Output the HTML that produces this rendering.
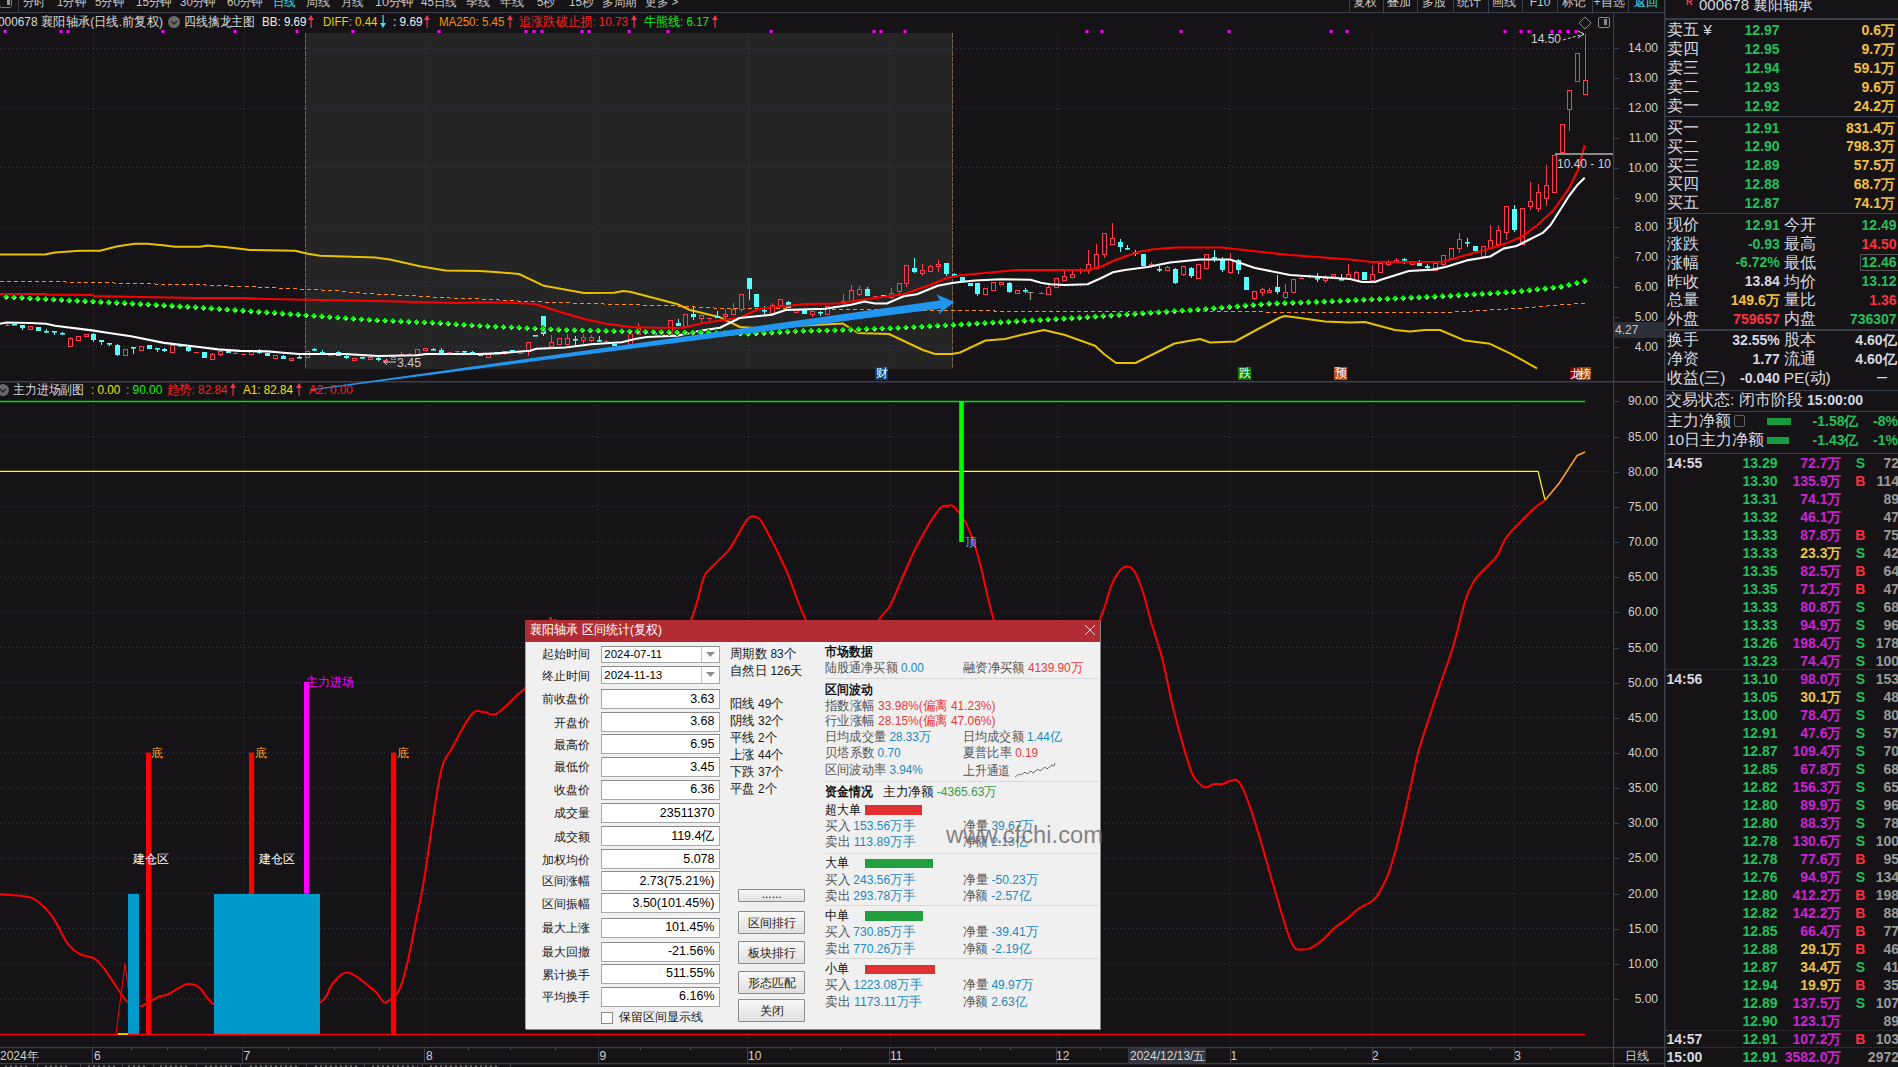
<!DOCTYPE html><html><head><meta charset="utf-8"><style>
html,body{margin:0;padding:0;background:#151316;width:1898px;height:1067px;overflow:hidden;}
body{position:relative;font-family:"Liberation Sans",sans-serif;}
.t{position:absolute;white-space:nowrap;line-height:1;}
svg{position:absolute;left:0;top:0;}
</style></head><body>
<svg width="1898" height="1067" viewBox="0 0 1898 1067">
<rect x="305" y="33" width="648" height="336" fill="#252526"/>
<line x1="305.5" y1="33" x2="305.5" y2="369" stroke="#7f5f3e" stroke-width="1" stroke-dasharray="5,1"/>
<line x1="952.5" y1="33" x2="952.5" y2="369" stroke="#7f5f3e" stroke-width="1" stroke-dasharray="5,1"/>
<line x1="93.5" y1="33" x2="93.5" y2="369" stroke="#3a3d4a" stroke-width="1" stroke-dasharray="1,3"/>
<line x1="93.5" y1="397" x2="93.5" y2="1047" stroke="#3a3d4a" stroke-width="1" stroke-dasharray="1,3"/>
<line x1="243.5" y1="33" x2="243.5" y2="369" stroke="#3a3d4a" stroke-width="1" stroke-dasharray="1,3"/>
<line x1="243.5" y1="397" x2="243.5" y2="1047" stroke="#3a3d4a" stroke-width="1" stroke-dasharray="1,3"/>
<line x1="425.5" y1="33" x2="425.5" y2="369" stroke="#3a3d4a" stroke-width="1" stroke-dasharray="1,3"/>
<line x1="425.5" y1="397" x2="425.5" y2="1047" stroke="#3a3d4a" stroke-width="1" stroke-dasharray="1,3"/>
<line x1="598.5" y1="33" x2="598.5" y2="369" stroke="#3a3d4a" stroke-width="1" stroke-dasharray="1,3"/>
<line x1="598.5" y1="397" x2="598.5" y2="1047" stroke="#3a3d4a" stroke-width="1" stroke-dasharray="1,3"/>
<line x1="748.5" y1="33" x2="748.5" y2="369" stroke="#3a3d4a" stroke-width="1" stroke-dasharray="1,3"/>
<line x1="748.5" y1="397" x2="748.5" y2="1047" stroke="#3a3d4a" stroke-width="1" stroke-dasharray="1,3"/>
<line x1="890.5" y1="33" x2="890.5" y2="369" stroke="#3a3d4a" stroke-width="1" stroke-dasharray="1,3"/>
<line x1="890.5" y1="397" x2="890.5" y2="1047" stroke="#3a3d4a" stroke-width="1" stroke-dasharray="1,3"/>
<line x1="1057.5" y1="33" x2="1057.5" y2="369" stroke="#3a3d4a" stroke-width="1" stroke-dasharray="1,3"/>
<line x1="1057.5" y1="397" x2="1057.5" y2="1047" stroke="#3a3d4a" stroke-width="1" stroke-dasharray="1,3"/>
<line x1="1230.5" y1="33" x2="1230.5" y2="369" stroke="#3a3d4a" stroke-width="1" stroke-dasharray="1,3"/>
<line x1="1230.5" y1="397" x2="1230.5" y2="1047" stroke="#3a3d4a" stroke-width="1" stroke-dasharray="1,3"/>
<line x1="1372.5" y1="33" x2="1372.5" y2="369" stroke="#3a3d4a" stroke-width="1" stroke-dasharray="1,3"/>
<line x1="1372.5" y1="397" x2="1372.5" y2="1047" stroke="#3a3d4a" stroke-width="1" stroke-dasharray="1,3"/>
<line x1="1514.5" y1="33" x2="1514.5" y2="369" stroke="#3a3d4a" stroke-width="1" stroke-dasharray="1,3"/>
<line x1="1514.5" y1="397" x2="1514.5" y2="1047" stroke="#3a3d4a" stroke-width="1" stroke-dasharray="1,3"/>
<line x1="0" y1="48.5" x2="1612" y2="48.5" stroke="#3a3d4a" stroke-width="1" stroke-dasharray="1,3"/>
<line x1="0" y1="108.5" x2="1612" y2="108.5" stroke="#3a3d4a" stroke-width="1" stroke-dasharray="1,3"/>
<line x1="0" y1="167.5" x2="1612" y2="167.5" stroke="#3a3d4a" stroke-width="1" stroke-dasharray="1,3"/>
<line x1="0" y1="227.5" x2="1612" y2="227.5" stroke="#3a3d4a" stroke-width="1" stroke-dasharray="1,3"/>
<line x1="0" y1="286.5" x2="1612" y2="286.5" stroke="#3a3d4a" stroke-width="1" stroke-dasharray="1,3"/>
<line x1="0" y1="346.5" x2="1612" y2="346.5" stroke="#3a3d4a" stroke-width="1" stroke-dasharray="1,3"/>
<line x1="0" y1="436.5" x2="1612" y2="436.5" stroke="#3a3d4a" stroke-width="1" stroke-dasharray="1,3"/>
<line x1="0" y1="471.7" x2="1612" y2="471.7" stroke="#3a3d4a" stroke-width="1" stroke-dasharray="1,3"/>
<line x1="0" y1="506.8" x2="1612" y2="506.8" stroke="#3a3d4a" stroke-width="1" stroke-dasharray="1,3"/>
<line x1="0" y1="542.0" x2="1612" y2="542.0" stroke="#3a3d4a" stroke-width="1" stroke-dasharray="1,3"/>
<line x1="0" y1="577.1" x2="1612" y2="577.1" stroke="#3a3d4a" stroke-width="1" stroke-dasharray="1,3"/>
<line x1="0" y1="612.3" x2="1612" y2="612.3" stroke="#3a3d4a" stroke-width="1" stroke-dasharray="1,3"/>
<line x1="0" y1="647.5" x2="1612" y2="647.5" stroke="#3a3d4a" stroke-width="1" stroke-dasharray="1,3"/>
<line x1="0" y1="682.6" x2="1612" y2="682.6" stroke="#3a3d4a" stroke-width="1" stroke-dasharray="1,3"/>
<line x1="0" y1="717.8" x2="1612" y2="717.8" stroke="#3a3d4a" stroke-width="1" stroke-dasharray="1,3"/>
<line x1="0" y1="752.9" x2="1612" y2="752.9" stroke="#3a3d4a" stroke-width="1" stroke-dasharray="1,3"/>
<line x1="0" y1="788.0" x2="1612" y2="788.0" stroke="#3a3d4a" stroke-width="1" stroke-dasharray="1,3"/>
<line x1="0" y1="823.2" x2="1612" y2="823.2" stroke="#3a3d4a" stroke-width="1" stroke-dasharray="1,3"/>
<line x1="0" y1="858.3" x2="1612" y2="858.3" stroke="#3a3d4a" stroke-width="1" stroke-dasharray="1,3"/>
<line x1="0" y1="893.5" x2="1612" y2="893.5" stroke="#3a3d4a" stroke-width="1" stroke-dasharray="1,3"/>
<line x1="0" y1="928.6" x2="1612" y2="928.6" stroke="#3a3d4a" stroke-width="1" stroke-dasharray="1,3"/>
<line x1="0" y1="963.8" x2="1612" y2="963.8" stroke="#3a3d4a" stroke-width="1" stroke-dasharray="1,3"/>
<line x1="0" y1="999.0" x2="1612" y2="999.0" stroke="#3a3d4a" stroke-width="1" stroke-dasharray="1,3"/>
<rect x="0" y="12" width="1664" height="1" fill="#3a3f4c"/>
<rect x="0" y="381" width="1664" height="1.5" fill="#3a3f4c"/>
<rect x="0" y="1047" width="1664" height="1.2" fill="#3a3f4c"/>
<rect x="0" y="1063" width="1664" height="1.2" fill="#3a3f4c"/>
<rect x="1613" y="13" width="1.2" height="1054" fill="#3a3f4c"/>
<rect x="1664" y="0" width="1.5" height="1067" fill="#3a3f4c"/>
<rect x="3.5" y="30" width="3" height="3" fill="#ff00ff"/>
<rect x="59.5" y="30" width="3" height="3" fill="#ff00ff"/>
<rect x="66.5" y="30" width="3" height="3" fill="#ff00ff"/>
<rect x="161.5" y="30" width="3" height="3" fill="#ff00ff"/>
<rect x="233.5" y="30" width="3" height="3" fill="#ff00ff"/>
<rect x="295.5" y="30" width="3" height="3" fill="#ff00ff"/>
<rect x="351.5" y="30" width="3" height="3" fill="#ff00ff"/>
<rect x="437.5" y="30" width="3" height="3" fill="#ff00ff"/>
<rect x="524.5" y="30" width="3" height="3" fill="#ff00ff"/>
<rect x="532.5" y="30" width="3" height="3" fill="#ff00ff"/>
<rect x="540.5" y="30" width="3" height="3" fill="#ff00ff"/>
<rect x="580.5" y="30" width="3" height="3" fill="#ff00ff"/>
<rect x="587.5" y="30" width="3" height="3" fill="#ff00ff"/>
<rect x="627.5" y="30" width="3" height="3" fill="#ff00ff"/>
<rect x="666.5" y="30" width="3" height="3" fill="#ff00ff"/>
<rect x="769.5" y="30" width="3" height="3" fill="#ff00ff"/>
<rect x="872.5" y="30" width="3" height="3" fill="#ff00ff"/>
<rect x="879.5" y="30" width="3" height="3" fill="#ff00ff"/>
<rect x="903.5" y="30" width="3" height="3" fill="#ff00ff"/>
<rect x="1085.5" y="30" width="3" height="3" fill="#ff00ff"/>
<rect x="1100.5" y="30" width="3" height="3" fill="#ff00ff"/>
<rect x="1179.5" y="30" width="3" height="3" fill="#ff00ff"/>
<rect x="1227.5" y="30" width="3" height="3" fill="#ff00ff"/>
<rect x="1329.5" y="30" width="3" height="3" fill="#ff00ff"/>
<rect x="1345.5" y="30" width="3" height="3" fill="#ff00ff"/>
<rect x="1503.5" y="30" width="3" height="3" fill="#ff00ff"/>
<rect x="1519.5" y="30" width="3" height="3" fill="#ff00ff"/>
<rect x="1527.5" y="30" width="3" height="3" fill="#ff00ff"/>
<rect x="1550.5" y="30" width="3" height="3" fill="#ff00ff"/>
<rect x="1558.5" y="30" width="3" height="3" fill="#ff00ff"/>
<rect x="1566.5" y="30" width="3" height="3" fill="#ff00ff"/>
<rect x="1574.5" y="30" width="3" height="3" fill="#ff00ff"/>
<polyline points="0.0,254.6 45.0,254.6 55.0,252.6 80.0,250.8 100.0,250.8 117.6,246.3 135.0,243.8 147.6,243.8 165.0,245.6 175.0,246.8 200.0,246.8 207.7,245.6 215.0,246.3 225.0,247.0 240.0,248.8 250.0,250.0 295.0,250.8 307.8,253.8 320.3,255.8 375.0,257.6 390.0,259.6 420.0,266.3 445.4,270.6 480.0,271.0 495.0,272.0 519.0,274.0 544.0,285.8 584.0,293.0 614.0,292.7 623.0,291.0 630.0,291.7 677.0,304.0 690.0,310.0 720.0,317.3 740.0,327.0 760.0,328.3 800.0,325.8 843.0,323.6 858.0,333.0 889.0,334.0 923.0,350.0 935.0,354.0 952.0,354.0 960.0,352.5 985.5,340.5 1005.0,339.0 1023.0,334.5 1044.0,330.0 1065.0,335.0 1095.0,345.7 1104.0,354.0 1116.0,363.0 1135.5,363.0 1174.5,343.5 1200.0,339.0 1210.0,342.5 1235.0,341.5 1260.0,328.0 1280.0,317.5 1285.0,316.0 1300.0,318.0 1325.0,321.5 1350.0,322.5 1365.0,322.0 1395.0,330.0 1410.0,331.5 1425.0,330.0 1440.0,330.0 1465.0,340.6 1490.0,343.8 1510.0,353.3 1537.0,368.3" fill="none" stroke="#e6c200" stroke-width="2" stroke-linejoin="round"/>
<polyline points="0.0,281.6 65.6,281.6 67.0,282.5 112.8,282.5 115.5,283.5 194.0,284.5 240.0,286.4 263.6,287.3 287.0,288.4 334.5,290.6 366.0,293.6 412.0,295.6 437.0,297.6 480.0,299.0 515.4,300.9 585.0,303.5 676.9,306.0 713.6,308.0 720.0,308.5 960.0,310.3 1014.0,311.4 1200.0,311.5 1315.0,312.4 1440.0,312.8 1516.0,308.5 1585.0,303.0" fill="none" stroke="#ff8c1a" stroke-width="1" stroke-dasharray="4,3" shape-rendering="crispEdges"/>
<rect x="7" y="324" width="1" height="2" fill="#ff3a50"/>
<rect x="5" y="325" width="5" height="1" fill="#ff3a50"/>
<rect x="14" y="324" width="1" height="1" fill="#54ffff"/>
<rect x="12" y="324" width="5" height="1.6" fill="#54ffff"/>
<rect x="22" y="325" width="1" height="5" fill="#54ffff"/>
<rect x="20" y="325" width="5" height="3" fill="#54ffff"/>
<rect x="30" y="326" width="1" height="3" fill="#ff3a50"/>
<rect x="28.5" y="326.5" width="4" height="3" fill="#151316" stroke="#ff3a50" stroke-width="1"/>
<rect x="38" y="327" width="1" height="4" fill="#54ffff"/>
<rect x="36" y="327" width="5" height="4" fill="#54ffff"/>
<rect x="46" y="329" width="1" height="4" fill="#54ffff"/>
<rect x="44" y="331" width="5" height="1.6" fill="#54ffff"/>
<rect x="54" y="331" width="1" height="4" fill="#54ffff"/>
<rect x="52" y="331" width="5" height="1.6" fill="#54ffff"/>
<rect x="62" y="332" width="1" height="3" fill="#54ffff"/>
<rect x="60" y="333" width="5" height="1.6" fill="#54ffff"/>
<rect x="70" y="337" width="1" height="9" fill="#ff3a50"/>
<rect x="68.5" y="338.5" width="4" height="8" fill="#151316" stroke="#ff3a50" stroke-width="1"/>
<rect x="78" y="336" width="1" height="5" fill="#ff3a50"/>
<rect x="76.5" y="336.5" width="4" height="4" fill="#151316" stroke="#ff3a50" stroke-width="1"/>
<rect x="86" y="334" width="1" height="3" fill="#ff3a50"/>
<rect x="84.5" y="334.5" width="4" height="2" fill="#151316" stroke="#ff3a50" stroke-width="1"/>
<rect x="93" y="333" width="1" height="9" fill="#54ffff"/>
<rect x="91" y="334" width="5" height="6" fill="#54ffff"/>
<rect x="101" y="340" width="1" height="5" fill="#54ffff"/>
<rect x="99" y="340" width="5" height="2" fill="#54ffff"/>
<rect x="109" y="343" width="1" height="3" fill="#54ffff"/>
<rect x="107" y="343" width="5" height="1.6" fill="#54ffff"/>
<rect x="117" y="344" width="1" height="12" fill="#54ffff"/>
<rect x="115" y="345" width="5" height="10" fill="#54ffff"/>
<rect x="125" y="349" width="1" height="6" fill="#ff3a50"/>
<rect x="123.5" y="349.5" width="4" height="6" fill="#151316" stroke="#ff3a50" stroke-width="1"/>
<rect x="133" y="347" width="1" height="7" fill="#54ffff"/>
<rect x="131" y="347" width="5" height="1.6" fill="#54ffff"/>
<rect x="141" y="346" width="1" height="4" fill="#ff3a50"/>
<rect x="139.5" y="346.5" width="4" height="4" fill="#151316" stroke="#ff3a50" stroke-width="1"/>
<rect x="149" y="345" width="1" height="4" fill="#54ffff"/>
<rect x="147" y="345" width="5" height="4" fill="#54ffff"/>
<rect x="157" y="348" width="1" height="4" fill="#54ffff"/>
<rect x="155" y="348" width="5" height="1.6" fill="#54ffff"/>
<rect x="164" y="348" width="1" height="4" fill="#54ffff"/>
<rect x="162" y="349" width="5" height="2" fill="#54ffff"/>
<rect x="172" y="345" width="1" height="7" fill="#ff3a50"/>
<rect x="170.5" y="345.5" width="4" height="7" fill="#151316" stroke="#ff3a50" stroke-width="1"/>
<rect x="180" y="345" width="1" height="1" fill="#54ffff"/>
<rect x="178" y="345" width="5" height="1.6" fill="#54ffff"/>
<rect x="188" y="347" width="1" height="5" fill="#54ffff"/>
<rect x="186" y="347" width="5" height="4" fill="#54ffff"/>
<rect x="196" y="352" width="1" height="1" fill="#ff3a50"/>
<rect x="194" y="352" width="5" height="1" fill="#ff3a50"/>
<rect x="204" y="352" width="1" height="6" fill="#54ffff"/>
<rect x="202" y="352" width="5" height="6" fill="#54ffff"/>
<rect x="212" y="353" width="1" height="6" fill="#ff3a50"/>
<rect x="210.5" y="354.5" width="4" height="5" fill="#151316" stroke="#ff3a50" stroke-width="1"/>
<rect x="220" y="351" width="1" height="5" fill="#ff3a50"/>
<rect x="218.5" y="351.5" width="4" height="3" fill="#151316" stroke="#ff3a50" stroke-width="1"/>
<rect x="228" y="351" width="1" height="2" fill="#54ffff"/>
<rect x="226" y="351" width="5" height="2" fill="#54ffff"/>
<rect x="235" y="352" width="1" height="2" fill="#ff3a50"/>
<rect x="233" y="353" width="5" height="1" fill="#ff3a50"/>
<rect x="243" y="354" width="1" height="1" fill="#ff3a50"/>
<rect x="241" y="354" width="5" height="1" fill="#ff3a50"/>
<rect x="251" y="350" width="1" height="4" fill="#ff3a50"/>
<rect x="249.5" y="350.5" width="4" height="4" fill="#151316" stroke="#ff3a50" stroke-width="1"/>
<rect x="259" y="349" width="1" height="5" fill="#54ffff"/>
<rect x="257" y="351" width="5" height="2" fill="#54ffff"/>
<rect x="267" y="353" width="1" height="3" fill="#54ffff"/>
<rect x="265" y="353" width="5" height="3" fill="#54ffff"/>
<rect x="275" y="355" width="1" height="4" fill="#ff3a50"/>
<rect x="273.5" y="355.5" width="4" height="3" fill="#151316" stroke="#ff3a50" stroke-width="1"/>
<rect x="283" y="355" width="1" height="4" fill="#54ffff"/>
<rect x="281" y="356" width="5" height="3" fill="#54ffff"/>
<rect x="291" y="358" width="1" height="3" fill="#ff3a50"/>
<rect x="289.5" y="358.5" width="4" height="2" fill="#151316" stroke="#ff3a50" stroke-width="1"/>
<rect x="299" y="354" width="1" height="4" fill="#54ffff"/>
<rect x="297" y="357" width="5" height="1.6" fill="#54ffff"/>
<rect x="307" y="351" width="1" height="6" fill="#ff3a50"/>
<rect x="305.5" y="351.5" width="4" height="6" fill="#252526" stroke="#ff3a50" stroke-width="1"/>
<rect x="314" y="348" width="1" height="3" fill="#54ffff"/>
<rect x="312" y="349" width="5" height="1.6" fill="#54ffff"/>
<rect x="322" y="350" width="1" height="4" fill="#54ffff"/>
<rect x="320" y="352" width="5" height="2" fill="#54ffff"/>
<rect x="330" y="355" width="1" height="1" fill="#ff3a50"/>
<rect x="328" y="355" width="5" height="1" fill="#ff3a50"/>
<rect x="338" y="351" width="1" height="5" fill="#54ffff"/>
<rect x="336" y="352" width="5" height="4" fill="#54ffff"/>
<rect x="346" y="355" width="1" height="4" fill="#54ffff"/>
<rect x="344" y="356" width="5" height="2" fill="#54ffff"/>
<rect x="354" y="358" width="1" height="2" fill="#ff3a50"/>
<rect x="352.5" y="358.5" width="4" height="2" fill="#252526" stroke="#ff3a50" stroke-width="1"/>
<rect x="362" y="357" width="1" height="2" fill="#54ffff"/>
<rect x="360" y="357" width="5" height="1.6" fill="#54ffff"/>
<rect x="370" y="356" width="1" height="3" fill="#ff3a50"/>
<rect x="368.5" y="357.5" width="4" height="2" fill="#252526" stroke="#ff3a50" stroke-width="1"/>
<rect x="378" y="357" width="1" height="4" fill="#54ffff"/>
<rect x="376" y="358" width="5" height="2" fill="#54ffff"/>
<rect x="385" y="360" width="1" height="2" fill="#ff3a50"/>
<rect x="383.5" y="360.5" width="4" height="2" fill="#252526" stroke="#ff3a50" stroke-width="1"/>
<rect x="393" y="356" width="1" height="3" fill="#ff3a50"/>
<rect x="391.5" y="357.5" width="4" height="2" fill="#252526" stroke="#ff3a50" stroke-width="1"/>
<rect x="401" y="352" width="1" height="3" fill="#ff3a50"/>
<rect x="399" y="354" width="5" height="1" fill="#ff3a50"/>
<rect x="409" y="353" width="1" height="2" fill="#ff3a50"/>
<rect x="407" y="354" width="5" height="1" fill="#ff3a50"/>
<rect x="417" y="349" width="1" height="5" fill="#ff3a50"/>
<rect x="415.5" y="349.5" width="4" height="5" fill="#252526" stroke="#ff3a50" stroke-width="1"/>
<rect x="425" y="348" width="1" height="2" fill="#ff3a50"/>
<rect x="423.5" y="348.5" width="4" height="2" fill="#252526" stroke="#ff3a50" stroke-width="1"/>
<rect x="433" y="348" width="1" height="2" fill="#54ffff"/>
<rect x="431" y="349" width="5" height="1.6" fill="#54ffff"/>
<rect x="441" y="348" width="1" height="5" fill="#54ffff"/>
<rect x="439" y="350" width="5" height="3" fill="#54ffff"/>
<rect x="449" y="352" width="1" height="1" fill="#ff3a50"/>
<rect x="447" y="352" width="5" height="1" fill="#ff3a50"/>
<rect x="457" y="351" width="1" height="2" fill="#ff3a50"/>
<rect x="455" y="351" width="5" height="1" fill="#ff3a50"/>
<rect x="464" y="351" width="1" height="2" fill="#54ffff"/>
<rect x="462" y="351" width="5" height="1.6" fill="#54ffff"/>
<rect x="472" y="351" width="1" height="2" fill="#54ffff"/>
<rect x="470" y="352" width="5" height="1.6" fill="#54ffff"/>
<rect x="480" y="354" width="1" height="2" fill="#54ffff"/>
<rect x="478" y="354" width="5" height="2" fill="#54ffff"/>
<rect x="488" y="354" width="1" height="3" fill="#ff3a50"/>
<rect x="486.5" y="354.5" width="4" height="3" fill="#252526" stroke="#ff3a50" stroke-width="1"/>
<rect x="496" y="352" width="1" height="1" fill="#54ffff"/>
<rect x="494" y="352" width="5" height="1.6" fill="#54ffff"/>
<rect x="504" y="351" width="1" height="4" fill="#ff3a50"/>
<rect x="502.5" y="351.5" width="4" height="2" fill="#252526" stroke="#ff3a50" stroke-width="1"/>
<rect x="512" y="350" width="1" height="2" fill="#54ffff"/>
<rect x="510" y="350" width="5" height="2" fill="#54ffff"/>
<rect x="520" y="353" width="1" height="1" fill="#ff3a50"/>
<rect x="518" y="353" width="5" height="1" fill="#ff3a50"/>
<rect x="528" y="342" width="1" height="14" fill="#ff3a50"/>
<rect x="526.5" y="342.5" width="4" height="9" fill="#252526" stroke="#ff3a50" stroke-width="1"/>
<rect x="535" y="335" width="1" height="1" fill="#54ffff"/>
<rect x="533" y="335" width="5" height="1.6" fill="#54ffff"/>
<rect x="543" y="316" width="1" height="20" fill="#54ffff"/>
<rect x="541" y="316" width="5" height="18" fill="#54ffff"/>
<rect x="551" y="335" width="1" height="11" fill="#ff3a50"/>
<rect x="549.5" y="342.5" width="4" height="4" fill="#252526" stroke="#ff3a50" stroke-width="1"/>
<rect x="559" y="338" width="1" height="6" fill="#ff3a50"/>
<rect x="557.5" y="338.5" width="4" height="6" fill="#252526" stroke="#ff3a50" stroke-width="1"/>
<rect x="567" y="334" width="1" height="11" fill="#ff3a50"/>
<rect x="565.5" y="338.5" width="4" height="6" fill="#252526" stroke="#ff3a50" stroke-width="1"/>
<rect x="575" y="336" width="1" height="9" fill="#54ffff"/>
<rect x="573" y="339" width="5" height="1.6" fill="#54ffff"/>
<rect x="583" y="334" width="1" height="10" fill="#ff3a50"/>
<rect x="581.5" y="337.5" width="4" height="3" fill="#252526" stroke="#ff3a50" stroke-width="1"/>
<rect x="591" y="335" width="1" height="7" fill="#ff3a50"/>
<rect x="589.5" y="337.5" width="4" height="3" fill="#252526" stroke="#ff3a50" stroke-width="1"/>
<rect x="599" y="336" width="1" height="6" fill="#54ffff"/>
<rect x="597" y="340" width="5" height="1.6" fill="#54ffff"/>
<rect x="606" y="340" width="1" height="2" fill="#ff3a50"/>
<rect x="604" y="341" width="5" height="1" fill="#ff3a50"/>
<rect x="614" y="344" width="1" height="2" fill="#54ffff"/>
<rect x="612" y="344" width="5" height="2" fill="#54ffff"/>
<rect x="622" y="346" width="1" height="1" fill="#ff3a50"/>
<rect x="620" y="346" width="5" height="1" fill="#ff3a50"/>
<rect x="630" y="334" width="1" height="12" fill="#ff3a50"/>
<rect x="628.5" y="334.5" width="4" height="12" fill="#252526" stroke="#ff3a50" stroke-width="1"/>
<rect x="638" y="323" width="1" height="12" fill="#ff3a50"/>
<rect x="636.5" y="328.5" width="4" height="6" fill="#252526" stroke="#ff3a50" stroke-width="1"/>
<rect x="646" y="333" width="1" height="1" fill="#ff3a50"/>
<rect x="644" y="333" width="5" height="1" fill="#ff3a50"/>
<rect x="654" y="333" width="1" height="1" fill="#54ffff"/>
<rect x="652" y="333" width="5" height="1.6" fill="#54ffff"/>
<rect x="662" y="334" width="1" height="1" fill="#ff3a50"/>
<rect x="660" y="334" width="5" height="1" fill="#ff3a50"/>
<rect x="670" y="320" width="1" height="14" fill="#ff3a50"/>
<rect x="668.5" y="320.5" width="4" height="14" fill="#252526" stroke="#ff3a50" stroke-width="1"/>
<rect x="678" y="319" width="1" height="7" fill="#54ffff"/>
<rect x="676" y="323" width="5" height="3" fill="#54ffff"/>
<rect x="685" y="314" width="1" height="12" fill="#ff3a50"/>
<rect x="683.5" y="314.5" width="4" height="12" fill="#252526" stroke="#ff3a50" stroke-width="1"/>
<rect x="693" y="307" width="1" height="13" fill="#54ffff"/>
<rect x="691" y="314" width="5" height="3" fill="#54ffff"/>
<rect x="701" y="315" width="1" height="8" fill="#ff3a50"/>
<rect x="699.5" y="315.5" width="4" height="3" fill="#252526" stroke="#ff3a50" stroke-width="1"/>
<rect x="709" y="318" width="1" height="4" fill="#ff3a50"/>
<rect x="707" y="318" width="5" height="1" fill="#ff3a50"/>
<rect x="717" y="311" width="1" height="7" fill="#54ffff"/>
<rect x="715" y="316" width="5" height="2" fill="#54ffff"/>
<rect x="725" y="309" width="1" height="13" fill="#ff3a50"/>
<rect x="723.5" y="314.5" width="4" height="2" fill="#252526" stroke="#ff3a50" stroke-width="1"/>
<rect x="733" y="303" width="1" height="11" fill="#ff3a50"/>
<rect x="731.5" y="309.5" width="4" height="5" fill="#252526" stroke="#ff3a50" stroke-width="1"/>
<rect x="741" y="294" width="1" height="18" fill="#ff3a50"/>
<rect x="739.5" y="294.5" width="4" height="15" fill="#252526" stroke="#ff3a50" stroke-width="1"/>
<rect x="749" y="278" width="1" height="22" fill="#54ffff"/>
<rect x="747" y="278" width="5" height="11" fill="#54ffff"/>
<rect x="756" y="294" width="1" height="13" fill="#54ffff"/>
<rect x="754" y="294" width="5" height="13" fill="#54ffff"/>
<rect x="764" y="306" width="1" height="8" fill="#54ffff"/>
<rect x="762" y="310" width="5" height="1.6" fill="#54ffff"/>
<rect x="772" y="303" width="1" height="10" fill="#ff3a50"/>
<rect x="770.5" y="305.5" width="4" height="8" fill="#252526" stroke="#ff3a50" stroke-width="1"/>
<rect x="780" y="299" width="1" height="6" fill="#ff3a50"/>
<rect x="778.5" y="299.5" width="4" height="6" fill="#252526" stroke="#ff3a50" stroke-width="1"/>
<rect x="788" y="301" width="1" height="7" fill="#54ffff"/>
<rect x="786" y="302" width="5" height="6" fill="#54ffff"/>
<rect x="796" y="310" width="1" height="2" fill="#ff3a50"/>
<rect x="794.5" y="310.5" width="4" height="2" fill="#252526" stroke="#ff3a50" stroke-width="1"/>
<rect x="804" y="310" width="1" height="4" fill="#54ffff"/>
<rect x="802" y="310" width="5" height="4" fill="#54ffff"/>
<rect x="812" y="311" width="1" height="6" fill="#ff3a50"/>
<rect x="810.5" y="311.5" width="4" height="3" fill="#252526" stroke="#ff3a50" stroke-width="1"/>
<rect x="820" y="311" width="1" height="5" fill="#54ffff"/>
<rect x="818" y="312" width="5" height="1.6" fill="#54ffff"/>
<rect x="827" y="306" width="1" height="8" fill="#ff3a50"/>
<rect x="825.5" y="306.5" width="4" height="8" fill="#252526" stroke="#ff3a50" stroke-width="1"/>
<rect x="835" y="306" width="1" height="1" fill="#54ffff"/>
<rect x="833" y="306" width="5" height="1.6" fill="#54ffff"/>
<rect x="843" y="294" width="1" height="13" fill="#ff3a50"/>
<rect x="841.5" y="301.5" width="4" height="2" fill="#252526" stroke="#ff3a50" stroke-width="1"/>
<rect x="851" y="285" width="1" height="16" fill="#ff3a50"/>
<rect x="849.5" y="290.5" width="4" height="11" fill="#252526" stroke="#ff3a50" stroke-width="1"/>
<rect x="859" y="286" width="1" height="10" fill="#ff3a50"/>
<rect x="857.5" y="289.5" width="4" height="5" fill="#252526" stroke="#ff3a50" stroke-width="1"/>
<rect x="867" y="287" width="1" height="9" fill="#54ffff"/>
<rect x="865" y="289" width="5" height="7" fill="#54ffff"/>
<rect x="875" y="296" width="1" height="1" fill="#ff3a50"/>
<rect x="873" y="296" width="5" height="1" fill="#ff3a50"/>
<rect x="883" y="295" width="1" height="1" fill="#54ffff"/>
<rect x="881" y="295" width="5" height="1.6" fill="#54ffff"/>
<rect x="891" y="288" width="1" height="11" fill="#ff3a50"/>
<rect x="889.5" y="293.5" width="4" height="4" fill="#252526" stroke="#ff3a50" stroke-width="1"/>
<rect x="899" y="283" width="1" height="11" fill="#ff3a50"/>
<rect x="897.5" y="283.5" width="4" height="8" fill="#252526" stroke="#ff3a50" stroke-width="1"/>
<rect x="906" y="265" width="1" height="22" fill="#ff3a50"/>
<rect x="904.5" y="265.5" width="4" height="18" fill="#252526" stroke="#ff3a50" stroke-width="1"/>
<rect x="914" y="258" width="1" height="15" fill="#54ffff"/>
<rect x="912" y="268" width="5" height="4" fill="#54ffff"/>
<rect x="922" y="264" width="1" height="12" fill="#ff3a50"/>
<rect x="920.5" y="270.5" width="4" height="3" fill="#252526" stroke="#ff3a50" stroke-width="1"/>
<rect x="930" y="265" width="1" height="7" fill="#ff3a50"/>
<rect x="928.5" y="266.5" width="4" height="5" fill="#252526" stroke="#ff3a50" stroke-width="1"/>
<rect x="938" y="260" width="1" height="12" fill="#ff3a50"/>
<rect x="936.5" y="264.5" width="4" height="2" fill="#252526" stroke="#ff3a50" stroke-width="1"/>
<rect x="946" y="263" width="1" height="13" fill="#54ffff"/>
<rect x="944" y="263" width="5" height="11" fill="#54ffff"/>
<rect x="954" y="273" width="1" height="4" fill="#54ffff"/>
<rect x="952" y="274" width="5" height="2" fill="#54ffff"/>
<rect x="962" y="277" width="1" height="5" fill="#54ffff"/>
<rect x="960" y="277" width="5" height="5" fill="#54ffff"/>
<rect x="970" y="283" width="1" height="3" fill="#54ffff"/>
<rect x="968" y="283" width="5" height="3" fill="#54ffff"/>
<rect x="977" y="283" width="1" height="13" fill="#54ffff"/>
<rect x="975" y="283" width="5" height="11" fill="#54ffff"/>
<rect x="985" y="288" width="1" height="6" fill="#ff3a50"/>
<rect x="983.5" y="288.5" width="4" height="6" fill="#151316" stroke="#ff3a50" stroke-width="1"/>
<rect x="993" y="282" width="1" height="8" fill="#ff3a50"/>
<rect x="991.5" y="282.5" width="4" height="8" fill="#151316" stroke="#ff3a50" stroke-width="1"/>
<rect x="1001" y="282" width="1" height="3" fill="#ff3a50"/>
<rect x="999.5" y="282.5" width="4" height="2" fill="#151316" stroke="#ff3a50" stroke-width="1"/>
<rect x="1009" y="282" width="1" height="11" fill="#54ffff"/>
<rect x="1007" y="283" width="5" height="9" fill="#54ffff"/>
<rect x="1017" y="290" width="1" height="4" fill="#ff3a50"/>
<rect x="1015.5" y="290.5" width="4" height="3" fill="#151316" stroke="#ff3a50" stroke-width="1"/>
<rect x="1025" y="288" width="1" height="5" fill="#54ffff"/>
<rect x="1023" y="290" width="5" height="1.6" fill="#54ffff"/>
<rect x="1041" y="292" width="1" height="2" fill="#ff3a50"/>
<rect x="1039" y="293" width="5" height="1" fill="#ff3a50"/>
<rect x="1048" y="285" width="1" height="9" fill="#ff3a50"/>
<rect x="1046.5" y="287.5" width="4" height="7" fill="#151316" stroke="#ff3a50" stroke-width="1"/>
<rect x="1056" y="278" width="1" height="9" fill="#ff3a50"/>
<rect x="1054.5" y="278.5" width="4" height="9" fill="#151316" stroke="#ff3a50" stroke-width="1"/>
<rect x="1064" y="271" width="1" height="9" fill="#ff3a50"/>
<rect x="1062.5" y="276.5" width="4" height="4" fill="#151316" stroke="#ff3a50" stroke-width="1"/>
<rect x="1072" y="271" width="1" height="7" fill="#ff3a50"/>
<rect x="1070.5" y="274.5" width="4" height="3" fill="#151316" stroke="#ff3a50" stroke-width="1"/>
<rect x="1080" y="268" width="1" height="6" fill="#ff3a50"/>
<rect x="1078" y="270" width="5" height="1" fill="#ff3a50"/>
<rect x="1088" y="250" width="1" height="24" fill="#ff3a50"/>
<rect x="1086.5" y="264.5" width="4" height="6" fill="#151316" stroke="#ff3a50" stroke-width="1"/>
<rect x="1096" y="244" width="1" height="24" fill="#ff3a50"/>
<rect x="1094.5" y="254.5" width="4" height="14" fill="#151316" stroke="#ff3a50" stroke-width="1"/>
<rect x="1104" y="233" width="1" height="25" fill="#ff3a50"/>
<rect x="1102.5" y="233.5" width="4" height="21" fill="#151316" stroke="#ff3a50" stroke-width="1"/>
<rect x="1112" y="223" width="1" height="21" fill="#ff3a50"/>
<rect x="1110.5" y="238.5" width="4" height="6" fill="#151316" stroke="#ff3a50" stroke-width="1"/>
<rect x="1120" y="239" width="1" height="13" fill="#54ffff"/>
<rect x="1118" y="242" width="5" height="5" fill="#54ffff"/>
<rect x="1127" y="245" width="1" height="5" fill="#54ffff"/>
<rect x="1125" y="248" width="5" height="1.6" fill="#54ffff"/>
<rect x="1135" y="250" width="1" height="6" fill="#54ffff"/>
<rect x="1133" y="252" width="5" height="2" fill="#54ffff"/>
<rect x="1143" y="254" width="1" height="12" fill="#54ffff"/>
<rect x="1141" y="254" width="5" height="12" fill="#54ffff"/>
<rect x="1151" y="262" width="1" height="6" fill="#ff3a50"/>
<rect x="1149" y="264" width="5" height="1" fill="#ff3a50"/>
<rect x="1159" y="266" width="1" height="6" fill="#54ffff"/>
<rect x="1157" y="269" width="5" height="1.6" fill="#54ffff"/>
<rect x="1167" y="266" width="1" height="4" fill="#ff3a50"/>
<rect x="1165.5" y="267.5" width="4" height="3" fill="#151316" stroke="#ff3a50" stroke-width="1"/>
<rect x="1175" y="268" width="1" height="16" fill="#54ffff"/>
<rect x="1173" y="269" width="5" height="14" fill="#54ffff"/>
<rect x="1183" y="266" width="1" height="10" fill="#ff3a50"/>
<rect x="1181.5" y="266.5" width="4" height="8" fill="#151316" stroke="#ff3a50" stroke-width="1"/>
<rect x="1191" y="267" width="1" height="11" fill="#54ffff"/>
<rect x="1189" y="268" width="5" height="8" fill="#54ffff"/>
<rect x="1198" y="264" width="1" height="14" fill="#ff3a50"/>
<rect x="1196.5" y="264.5" width="4" height="14" fill="#151316" stroke="#ff3a50" stroke-width="1"/>
<rect x="1206" y="254" width="1" height="14" fill="#ff3a50"/>
<rect x="1204.5" y="254.5" width="4" height="14" fill="#151316" stroke="#ff3a50" stroke-width="1"/>
<rect x="1214" y="250" width="1" height="12" fill="#54ffff"/>
<rect x="1212" y="257" width="5" height="1.6" fill="#54ffff"/>
<rect x="1222" y="257" width="1" height="15" fill="#54ffff"/>
<rect x="1220" y="259" width="5" height="11" fill="#54ffff"/>
<rect x="1230" y="253" width="1" height="21" fill="#ff3a50"/>
<rect x="1228.5" y="259.5" width="4" height="13" fill="#151316" stroke="#ff3a50" stroke-width="1"/>
<rect x="1238" y="259" width="1" height="15" fill="#54ffff"/>
<rect x="1236" y="260" width="5" height="10" fill="#54ffff"/>
<rect x="1246" y="277" width="1" height="13" fill="#54ffff"/>
<rect x="1244" y="277" width="5" height="13" fill="#54ffff"/>
<rect x="1254" y="291" width="1" height="9" fill="#ff3a50"/>
<rect x="1252.5" y="291.5" width="4" height="7" fill="#151316" stroke="#ff3a50" stroke-width="1"/>
<rect x="1262" y="288" width="1" height="8" fill="#ff3a50"/>
<rect x="1260.5" y="289.5" width="4" height="3" fill="#151316" stroke="#ff3a50" stroke-width="1"/>
<rect x="1269" y="288" width="1" height="4" fill="#ff3a50"/>
<rect x="1267.5" y="290.5" width="4" height="2" fill="#151316" stroke="#ff3a50" stroke-width="1"/>
<rect x="1277" y="275" width="1" height="19" fill="#54ffff"/>
<rect x="1275" y="287" width="5" height="5" fill="#54ffff"/>
<rect x="1285" y="284" width="1" height="15" fill="#ff3a50"/>
<rect x="1283.5" y="292.5" width="4" height="5" fill="#151316" stroke="#ff3a50" stroke-width="1"/>
<rect x="1293" y="279" width="1" height="13" fill="#ff3a50"/>
<rect x="1291.5" y="279.5" width="4" height="13" fill="#151316" stroke="#ff3a50" stroke-width="1"/>
<rect x="1301" y="277" width="1" height="2" fill="#ff3a50"/>
<rect x="1299" y="278" width="5" height="1" fill="#ff3a50"/>
<rect x="1309" y="274" width="1" height="4" fill="#ff3a50"/>
<rect x="1307" y="276" width="5" height="1" fill="#ff3a50"/>
<rect x="1317" y="273" width="1" height="9" fill="#54ffff"/>
<rect x="1315" y="278" width="5" height="1.6" fill="#54ffff"/>
<rect x="1325" y="275" width="1" height="8" fill="#ff3a50"/>
<rect x="1323.5" y="278.5" width="4" height="2" fill="#151316" stroke="#ff3a50" stroke-width="1"/>
<rect x="1333" y="274" width="1" height="3" fill="#ff3a50"/>
<rect x="1331.5" y="274.5" width="4" height="2" fill="#151316" stroke="#ff3a50" stroke-width="1"/>
<rect x="1341" y="274" width="1" height="6" fill="#54ffff"/>
<rect x="1339" y="279" width="5" height="1.6" fill="#54ffff"/>
<rect x="1348" y="264" width="1" height="14" fill="#ff3a50"/>
<rect x="1346.5" y="274.5" width="4" height="4" fill="#151316" stroke="#ff3a50" stroke-width="1"/>
<rect x="1356" y="271" width="1" height="9" fill="#ff3a50"/>
<rect x="1354.5" y="272.5" width="4" height="8" fill="#151316" stroke="#ff3a50" stroke-width="1"/>
<rect x="1364" y="272" width="1" height="8" fill="#54ffff"/>
<rect x="1362" y="272" width="5" height="8" fill="#54ffff"/>
<rect x="1372" y="266" width="1" height="14" fill="#ff3a50"/>
<rect x="1370.5" y="274.5" width="4" height="6" fill="#151316" stroke="#ff3a50" stroke-width="1"/>
<rect x="1380" y="263" width="1" height="9" fill="#ff3a50"/>
<rect x="1378.5" y="263.5" width="4" height="9" fill="#151316" stroke="#ff3a50" stroke-width="1"/>
<rect x="1388" y="260" width="1" height="6" fill="#ff3a50"/>
<rect x="1386.5" y="262.5" width="4" height="2" fill="#151316" stroke="#ff3a50" stroke-width="1"/>
<rect x="1396" y="258" width="1" height="3" fill="#ff3a50"/>
<rect x="1394" y="260" width="5" height="1" fill="#ff3a50"/>
<rect x="1404" y="258" width="1" height="6" fill="#54ffff"/>
<rect x="1402" y="259" width="5" height="1.6" fill="#54ffff"/>
<rect x="1412" y="262" width="1" height="2" fill="#ff3a50"/>
<rect x="1410.5" y="262.5" width="4" height="2" fill="#151316" stroke="#ff3a50" stroke-width="1"/>
<rect x="1419" y="260" width="1" height="6" fill="#54ffff"/>
<rect x="1417" y="263" width="5" height="3" fill="#54ffff"/>
<rect x="1427" y="264" width="1" height="6" fill="#54ffff"/>
<rect x="1425" y="266" width="5" height="2" fill="#54ffff"/>
<rect x="1435" y="263" width="1" height="7" fill="#ff3a50"/>
<rect x="1433.5" y="263.5" width="4" height="7" fill="#151316" stroke="#ff3a50" stroke-width="1"/>
<rect x="1443" y="255" width="1" height="11" fill="#ff3a50"/>
<rect x="1441.5" y="255.5" width="4" height="9" fill="#151316" stroke="#ff3a50" stroke-width="1"/>
<rect x="1451" y="248" width="1" height="10" fill="#ff3a50"/>
<rect x="1449.5" y="248.5" width="4" height="10" fill="#151316" stroke="#ff3a50" stroke-width="1"/>
<rect x="1459" y="233" width="1" height="20" fill="#ff3a50"/>
<rect x="1457.5" y="239.5" width="4" height="9" fill="#151316" stroke="#ff3a50" stroke-width="1"/>
<rect x="1467" y="238" width="1" height="9" fill="#54ffff"/>
<rect x="1465" y="242" width="5" height="1.6" fill="#54ffff"/>
<rect x="1475" y="246" width="1" height="6" fill="#54ffff"/>
<rect x="1473" y="246" width="5" height="5" fill="#54ffff"/>
<rect x="1483" y="246" width="1" height="10" fill="#ff3a50"/>
<rect x="1481.5" y="246.5" width="4" height="10" fill="#151316" stroke="#ff3a50" stroke-width="1"/>
<rect x="1490" y="225" width="1" height="23" fill="#ff3a50"/>
<rect x="1488.5" y="240.5" width="4" height="8" fill="#151316" stroke="#ff3a50" stroke-width="1"/>
<rect x="1498" y="225" width="1" height="19" fill="#ff3a50"/>
<rect x="1496.5" y="230.5" width="4" height="14" fill="#151316" stroke="#ff3a50" stroke-width="1"/>
<rect x="1506" y="206" width="1" height="34" fill="#ff3a50"/>
<rect x="1504.5" y="206.5" width="4" height="26" fill="#151316" stroke="#ff3a50" stroke-width="1"/>
<rect x="1514" y="205" width="1" height="27" fill="#54ffff"/>
<rect x="1512" y="209" width="5" height="21" fill="#54ffff"/>
<rect x="1522" y="208" width="1" height="36" fill="#ff3a50"/>
<rect x="1520.5" y="208.5" width="4" height="36" fill="#151316" stroke="#ff3a50" stroke-width="1"/>
<rect x="1530" y="182" width="1" height="28" fill="#ff3a50"/>
<rect x="1528.5" y="201.5" width="4" height="5" fill="#151316" stroke="#ff3a50" stroke-width="1"/>
<rect x="1538" y="184" width="1" height="28" fill="#ff3a50"/>
<rect x="1536.5" y="192.5" width="4" height="16" fill="#151316" stroke="#ff3a50" stroke-width="1"/>
<rect x="1546" y="165" width="1" height="41" fill="#ff3a50"/>
<rect x="1544.5" y="185.5" width="4" height="13" fill="#151316" stroke="#ff3a50" stroke-width="1"/>
<rect x="1554" y="155" width="1" height="38" fill="#ff3a50"/>
<rect x="1552.5" y="155.5" width="4" height="37" fill="#151316" stroke="#ff3a50" stroke-width="1"/>
<rect x="1562" y="124" width="1" height="28" fill="#ff3a50"/>
<rect x="1560.5" y="124.5" width="4" height="28" fill="#151316" stroke="#ff3a50" stroke-width="1"/>
<rect x="1569" y="90" width="1" height="41" fill="#ff3a50"/>
<rect x="1567.5" y="90.5" width="4" height="19" fill="#151316" stroke="#ff3a50" stroke-width="1"/>
<rect x="1577" y="53" width="1" height="29" fill="#ff3a50"/>
<rect x="1575.5" y="53.5" width="4" height="28" fill="#151316" stroke="#ff3a50" stroke-width="1"/>
<rect x="1585" y="34" width="1" height="60" fill="#ff3a50"/>
<rect x="1583.5" y="80.5" width="4" height="14" fill="#151316" stroke="#ff3a50" stroke-width="1"/>
<polyline points="0.0,294.0 46.0,294.0 47.0,294.6 93.0,295.0 94.0,296.0 141.0,297.0 196.0,298.0 240.0,298.0 267.0,299.0 322.0,300.0 377.0,301.0 417.0,302.0 456.0,303.0 480.0,302.2 511.5,302.8 535.0,304.0 558.7,311.4 585.0,319.2 606.0,323.8 631.0,327.0 654.5,327.8 683.4,327.8 703.0,323.0 720.0,320.5 739.7,318.0 759.4,308.7 785.6,306.0 805.3,304.0 838.0,303.5 864.4,299.5 903.7,294.3 930.0,285.0 947.0,278.0 960.0,275.3 1017.0,270.0 1087.5,270.0 1102.5,266.0 1113.0,261.0 1125.0,256.5 1140.0,251.5 1153.5,249.3 1176.0,247.5 1200.0,247.5 1222.0,247.5 1253.0,251.0 1290.0,255.0 1350.0,259.5 1372.0,262.0 1443.0,261.7 1466.6,255.0 1485.0,250.0 1506.0,243.4 1521.7,236.8 1537.5,225.0 1553.2,210.5 1569.0,188.2 1578.0,170.0 1584.7,145.0" fill="none" stroke="#ff0000" stroke-width="2.1" stroke-linejoin="round"/>
<polyline points="0.0,323.8 6.6,322.5 30.0,323.0 46.0,323.8 55.0,325.8 92.0,330.4 109.0,333.0 131.0,336.3 164.0,342.9 197.0,346.8 218.0,349.4 240.0,350.9 267.6,351.4 283.3,352.7 299.0,354.0 345.0,354.0 377.8,356.0 417.0,355.3 426.4,354.0 480.0,354.0 497.0,353.4 530.0,350.7 536.4,348.8 565.3,347.5 591.5,344.2 621.7,342.2 634.9,339.0 646.7,337.0 676.9,335.6 690.0,333.0 703.0,330.4 720.0,327.8 739.7,318.0 772.5,314.6 785.6,310.0 825.0,308.7 851.2,304.8 864.4,301.5 874.9,303.5 886.7,303.5 903.7,296.3 916.9,294.3 937.8,285.8 952.3,283.0 960.0,282.0 975.0,280.5 1000.5,279.3 1030.5,279.7 1041.0,282.7 1050.0,284.3 1065.0,285.0 1087.5,284.3 1102.5,277.5 1113.0,272.3 1125.0,270.0 1147.5,267.0 1170.0,262.5 1200.0,259.5 1230.0,259.5 1255.0,268.0 1290.0,275.0 1350.0,279.0 1362.0,282.0 1375.0,282.0 1380.0,280.0 1408.9,271.0 1432.5,269.6 1445.6,267.0 1466.6,260.4 1490.2,256.5 1503.4,248.6 1516.5,246.0 1527.0,240.7 1542.7,232.9 1550.6,225.0 1569.0,196.0 1576.9,185.6 1584.7,177.7" fill="none" stroke="#ffffff" stroke-width="2.1" stroke-linejoin="round"/>
<polygon points="6.1,293.4 9.7,297.0 6.1,300.6 2.5,297.0" fill="#00f800" stroke="#0a0a0a" stroke-width="0.8"/>
<line x1="5.9" y1="299.0" x2="8.1" y2="297.0" stroke="#f0fff0" stroke-width="1.2"/>
<polygon points="14.0,293.8 17.6,297.4 14.0,301.0 10.4,297.4" fill="#00f800" stroke="#0a0a0a" stroke-width="0.8"/>
<line x1="13.8" y1="299.4" x2="16.0" y2="297.4" stroke="#f0fff0" stroke-width="1.2"/>
<polygon points="21.9,294.2 25.5,297.8 21.9,301.4 18.3,297.8" fill="#00f800" stroke="#0a0a0a" stroke-width="0.8"/>
<line x1="21.7" y1="299.8" x2="23.9" y2="297.8" stroke="#f0fff0" stroke-width="1.2"/>
<polygon points="29.8,294.7 33.4,298.3 29.8,301.9 26.2,298.3" fill="#00f800" stroke="#0a0a0a" stroke-width="0.8"/>
<line x1="29.6" y1="300.3" x2="31.8" y2="298.3" stroke="#f0fff0" stroke-width="1.2"/>
<polygon points="37.7,295.1 41.3,298.7 37.7,302.3 34.1,298.7" fill="#00f800" stroke="#0a0a0a" stroke-width="0.8"/>
<line x1="37.5" y1="300.7" x2="39.7" y2="298.7" stroke="#f0fff0" stroke-width="1.2"/>
<polygon points="45.6,295.5 49.2,299.1 45.6,302.7 42.0,299.1" fill="#00f800" stroke="#0a0a0a" stroke-width="0.8"/>
<line x1="45.4" y1="301.1" x2="47.6" y2="299.1" stroke="#f0fff0" stroke-width="1.2"/>
<polygon points="53.5,295.9 57.1,299.5 53.5,303.1 49.9,299.5" fill="#00f800" stroke="#0a0a0a" stroke-width="0.8"/>
<line x1="53.3" y1="301.5" x2="55.5" y2="299.5" stroke="#f0fff0" stroke-width="1.2"/>
<polygon points="61.4,296.4 65.0,300.0 61.4,303.6 57.8,300.0" fill="#00f800" stroke="#0a0a0a" stroke-width="0.8"/>
<line x1="61.2" y1="302.0" x2="63.4" y2="300.0" stroke="#f0fff0" stroke-width="1.2"/>
<polygon points="69.2,296.8 72.8,300.4 69.2,304.0 65.6,300.4" fill="#00f800" stroke="#0a0a0a" stroke-width="0.8"/>
<line x1="69.0" y1="302.4" x2="71.2" y2="300.4" stroke="#f0fff0" stroke-width="1.2"/>
<polygon points="77.1,297.2 80.7,300.8 77.1,304.4 73.5,300.8" fill="#00f800" stroke="#0a0a0a" stroke-width="0.8"/>
<line x1="76.9" y1="302.8" x2="79.1" y2="300.8" stroke="#f0fff0" stroke-width="1.2"/>
<polygon points="85.0,297.6 88.6,301.2 85.0,304.8 81.4,301.2" fill="#00f800" stroke="#0a0a0a" stroke-width="0.8"/>
<line x1="84.8" y1="303.2" x2="87.0" y2="301.2" stroke="#f0fff0" stroke-width="1.2"/>
<polygon points="92.9,298.0 96.5,301.6 92.9,305.2 89.3,301.6" fill="#00f800" stroke="#0a0a0a" stroke-width="0.8"/>
<line x1="92.7" y1="303.6" x2="94.9" y2="301.6" stroke="#f0fff0" stroke-width="1.2"/>
<polygon points="100.8,298.4 104.4,302.0 100.8,305.6 97.2,302.0" fill="#00f800" stroke="#0a0a0a" stroke-width="0.8"/>
<line x1="100.6" y1="304.0" x2="102.8" y2="302.0" stroke="#f0fff0" stroke-width="1.2"/>
<polygon points="108.7,298.8 112.3,302.4 108.7,306.0 105.1,302.4" fill="#00f800" stroke="#0a0a0a" stroke-width="0.8"/>
<line x1="108.5" y1="304.4" x2="110.7" y2="302.4" stroke="#f0fff0" stroke-width="1.2"/>
<polygon points="116.6,299.2 120.2,302.8 116.6,306.4 113.0,302.8" fill="#00f800" stroke="#0a0a0a" stroke-width="0.8"/>
<line x1="116.4" y1="304.8" x2="118.6" y2="302.8" stroke="#f0fff0" stroke-width="1.2"/>
<polygon points="124.5,299.6 128.1,303.2 124.5,306.8 120.9,303.2" fill="#00f800" stroke="#0a0a0a" stroke-width="0.8"/>
<line x1="124.3" y1="305.2" x2="126.5" y2="303.2" stroke="#f0fff0" stroke-width="1.2"/>
<polygon points="132.4,300.0 136.0,303.6 132.4,307.2 128.8,303.6" fill="#00f800" stroke="#0a0a0a" stroke-width="0.8"/>
<line x1="132.2" y1="305.6" x2="134.4" y2="303.6" stroke="#f0fff0" stroke-width="1.2"/>
<polygon points="140.3,300.4 143.9,304.0 140.3,307.6 136.7,304.0" fill="#00f800" stroke="#0a0a0a" stroke-width="0.8"/>
<line x1="140.1" y1="306.0" x2="142.3" y2="304.0" stroke="#f0fff0" stroke-width="1.2"/>
<polygon points="148.2,300.9 151.8,304.5 148.2,308.1 144.6,304.5" fill="#00f800" stroke="#0a0a0a" stroke-width="0.8"/>
<line x1="148.0" y1="306.5" x2="150.2" y2="304.5" stroke="#f0fff0" stroke-width="1.2"/>
<polygon points="156.1,301.4 159.7,305.0 156.1,308.6 152.5,305.0" fill="#00f800" stroke="#0a0a0a" stroke-width="0.8"/>
<line x1="155.9" y1="307.0" x2="158.1" y2="305.0" stroke="#f0fff0" stroke-width="1.2"/>
<polygon points="164.0,301.8 167.6,305.4 164.0,309.0 160.4,305.4" fill="#00f800" stroke="#0a0a0a" stroke-width="0.8"/>
<line x1="163.8" y1="307.4" x2="166.0" y2="305.4" stroke="#f0fff0" stroke-width="1.2"/>
<polygon points="171.9,302.3 175.5,305.9 171.9,309.5 168.3,305.9" fill="#00f800" stroke="#0a0a0a" stroke-width="0.8"/>
<line x1="171.7" y1="307.9" x2="173.9" y2="305.9" stroke="#f0fff0" stroke-width="1.2"/>
<polygon points="179.7,302.8 183.3,306.4 179.7,310.0 176.1,306.4" fill="#00f800" stroke="#0a0a0a" stroke-width="0.8"/>
<line x1="179.5" y1="308.4" x2="181.7" y2="306.4" stroke="#f0fff0" stroke-width="1.2"/>
<polygon points="187.6,303.2 191.2,306.8 187.6,310.4 184.0,306.8" fill="#00f800" stroke="#0a0a0a" stroke-width="0.8"/>
<line x1="187.4" y1="308.8" x2="189.6" y2="306.8" stroke="#f0fff0" stroke-width="1.2"/>
<polygon points="195.5,303.7 199.1,307.3 195.5,310.9 191.9,307.3" fill="#00f800" stroke="#0a0a0a" stroke-width="0.8"/>
<line x1="195.3" y1="309.3" x2="197.5" y2="307.3" stroke="#f0fff0" stroke-width="1.2"/>
<polygon points="203.4,304.3 207.0,307.9 203.4,311.5 199.8,307.9" fill="#00f800" stroke="#0a0a0a" stroke-width="0.8"/>
<line x1="203.2" y1="309.9" x2="205.4" y2="307.9" stroke="#f0fff0" stroke-width="1.2"/>
<polygon points="211.3,304.8 214.9,308.4 211.3,312.0 207.7,308.4" fill="#00f800" stroke="#0a0a0a" stroke-width="0.8"/>
<line x1="211.1" y1="310.4" x2="213.3" y2="308.4" stroke="#f0fff0" stroke-width="1.2"/>
<polygon points="219.2,305.4 222.8,309.0 219.2,312.6 215.6,309.0" fill="#00f800" stroke="#0a0a0a" stroke-width="0.8"/>
<line x1="219.0" y1="311.0" x2="221.2" y2="309.0" stroke="#f0fff0" stroke-width="1.2"/>
<polygon points="227.1,306.0 230.7,309.6 227.1,313.2 223.5,309.6" fill="#00f800" stroke="#0a0a0a" stroke-width="0.8"/>
<line x1="226.9" y1="311.6" x2="229.1" y2="309.6" stroke="#f0fff0" stroke-width="1.2"/>
<polygon points="235.0,306.5 238.6,310.1 235.0,313.7 231.4,310.1" fill="#00f800" stroke="#0a0a0a" stroke-width="0.8"/>
<line x1="234.8" y1="312.1" x2="237.0" y2="310.1" stroke="#f0fff0" stroke-width="1.2"/>
<polygon points="242.9,307.1 246.5,310.7 242.9,314.3 239.3,310.7" fill="#00f800" stroke="#0a0a0a" stroke-width="0.8"/>
<line x1="242.7" y1="312.7" x2="244.9" y2="310.7" stroke="#f0fff0" stroke-width="1.2"/>
<polygon points="250.8,307.7 254.4,311.3 250.8,314.9 247.2,311.3" fill="#00f800" stroke="#0a0a0a" stroke-width="0.8"/>
<line x1="250.6" y1="313.3" x2="252.8" y2="311.3" stroke="#f0fff0" stroke-width="1.2"/>
<polygon points="258.7,308.2 262.3,311.8 258.7,315.4 255.1,311.8" fill="#00f800" stroke="#0a0a0a" stroke-width="0.8"/>
<line x1="258.5" y1="313.8" x2="260.7" y2="311.8" stroke="#f0fff0" stroke-width="1.2"/>
<polygon points="266.6,308.8 270.2,312.4 266.6,316.0 263.0,312.4" fill="#00f800" stroke="#0a0a0a" stroke-width="0.8"/>
<line x1="266.4" y1="314.4" x2="268.6" y2="312.4" stroke="#f0fff0" stroke-width="1.2"/>
<polygon points="274.5,309.4 278.1,313.0 274.5,316.6 270.9,313.0" fill="#00f800" stroke="#0a0a0a" stroke-width="0.8"/>
<line x1="274.3" y1="315.0" x2="276.5" y2="313.0" stroke="#f0fff0" stroke-width="1.2"/>
<polygon points="282.4,310.0 286.0,313.6 282.4,317.2 278.8,313.6" fill="#00f800" stroke="#0a0a0a" stroke-width="0.8"/>
<line x1="282.2" y1="315.6" x2="284.4" y2="313.6" stroke="#f0fff0" stroke-width="1.2"/>
<polygon points="290.2,310.5 293.8,314.1 290.2,317.7 286.6,314.1" fill="#00f800" stroke="#0a0a0a" stroke-width="0.8"/>
<line x1="290.0" y1="316.1" x2="292.2" y2="314.1" stroke="#f0fff0" stroke-width="1.2"/>
<polygon points="298.1,311.1 301.7,314.7 298.1,318.3 294.5,314.7" fill="#00f800" stroke="#0a0a0a" stroke-width="0.8"/>
<line x1="297.9" y1="316.7" x2="300.1" y2="314.7" stroke="#f0fff0" stroke-width="1.2"/>
<polygon points="306.0,311.7 309.6,315.3 306.0,318.9 302.4,315.3" fill="#00f800" stroke="#0a0a0a" stroke-width="0.8"/>
<line x1="305.8" y1="317.3" x2="308.0" y2="315.3" stroke="#f0fff0" stroke-width="1.2"/>
<polygon points="313.9,312.3 317.5,315.9 313.9,319.5 310.3,315.9" fill="#00f800" stroke="#0a0a0a" stroke-width="0.8"/>
<line x1="313.7" y1="317.9" x2="315.9" y2="315.9" stroke="#f0fff0" stroke-width="1.2"/>
<polygon points="321.8,312.8 325.4,316.4 321.8,320.0 318.2,316.4" fill="#00f800" stroke="#0a0a0a" stroke-width="0.8"/>
<line x1="321.6" y1="318.4" x2="323.8" y2="316.4" stroke="#f0fff0" stroke-width="1.2"/>
<polygon points="329.7,313.4 333.3,317.0 329.7,320.6 326.1,317.0" fill="#00f800" stroke="#0a0a0a" stroke-width="0.8"/>
<line x1="329.5" y1="319.0" x2="331.7" y2="317.0" stroke="#f0fff0" stroke-width="1.2"/>
<polygon points="337.6,314.0 341.2,317.6 337.6,321.2 334.0,317.6" fill="#00f800" stroke="#0a0a0a" stroke-width="0.8"/>
<line x1="337.4" y1="319.6" x2="339.6" y2="317.6" stroke="#f0fff0" stroke-width="1.2"/>
<polygon points="345.5,314.6 349.1,318.2 345.5,321.8 341.9,318.2" fill="#00f800" stroke="#0a0a0a" stroke-width="0.8"/>
<line x1="345.3" y1="320.2" x2="347.5" y2="318.2" stroke="#f0fff0" stroke-width="1.2"/>
<polygon points="353.4,315.1 357.0,318.7 353.4,322.3 349.8,318.7" fill="#00f800" stroke="#0a0a0a" stroke-width="0.8"/>
<line x1="353.2" y1="320.7" x2="355.4" y2="318.7" stroke="#f0fff0" stroke-width="1.2"/>
<polygon points="361.3,315.7 364.9,319.3 361.3,322.9 357.7,319.3" fill="#00f800" stroke="#0a0a0a" stroke-width="0.8"/>
<line x1="361.1" y1="321.3" x2="363.3" y2="319.3" stroke="#f0fff0" stroke-width="1.2"/>
<polygon points="369.2,316.3 372.8,319.9 369.2,323.5 365.6,319.9" fill="#00f800" stroke="#0a0a0a" stroke-width="0.8"/>
<line x1="369.0" y1="321.9" x2="371.2" y2="319.9" stroke="#f0fff0" stroke-width="1.2"/>
<polygon points="377.1,316.7 380.7,320.3 377.1,323.9 373.5,320.3" fill="#00f800" stroke="#0a0a0a" stroke-width="0.8"/>
<line x1="376.9" y1="322.3" x2="379.1" y2="320.3" stroke="#f0fff0" stroke-width="1.2"/>
<polygon points="385.0,317.0 388.6,320.6 385.0,324.2 381.4,320.6" fill="#00f800" stroke="#0a0a0a" stroke-width="0.8"/>
<line x1="384.8" y1="322.6" x2="387.0" y2="320.6" stroke="#f0fff0" stroke-width="1.2"/>
<polygon points="392.9,317.4 396.5,321.0 392.9,324.6 389.3,321.0" fill="#00f800" stroke="#0a0a0a" stroke-width="0.8"/>
<line x1="392.7" y1="323.0" x2="394.9" y2="321.0" stroke="#f0fff0" stroke-width="1.2"/>
<polygon points="400.8,317.8 404.4,321.4 400.8,325.0 397.1,321.4" fill="#00f800" stroke="#0a0a0a" stroke-width="0.8"/>
<line x1="400.6" y1="323.4" x2="402.8" y2="321.4" stroke="#f0fff0" stroke-width="1.2"/>
<polygon points="408.6,318.1 412.2,321.7 408.6,325.3 405.0,321.7" fill="#00f800" stroke="#0a0a0a" stroke-width="0.8"/>
<line x1="408.4" y1="323.7" x2="410.6" y2="321.7" stroke="#f0fff0" stroke-width="1.2"/>
<polygon points="416.5,318.5 420.1,322.1 416.5,325.7 412.9,322.1" fill="#00f800" stroke="#0a0a0a" stroke-width="0.8"/>
<line x1="416.3" y1="324.1" x2="418.5" y2="322.1" stroke="#f0fff0" stroke-width="1.2"/>
<polygon points="424.4,318.8 428.0,322.4 424.4,326.0 420.8,322.4" fill="#00f800" stroke="#0a0a0a" stroke-width="0.8"/>
<line x1="424.2" y1="324.4" x2="426.4" y2="322.4" stroke="#f0fff0" stroke-width="1.2"/>
<polygon points="432.3,319.2 435.9,322.8 432.3,326.4 428.7,322.8" fill="#00f800" stroke="#0a0a0a" stroke-width="0.8"/>
<line x1="432.1" y1="324.8" x2="434.3" y2="322.8" stroke="#f0fff0" stroke-width="1.2"/>
<polygon points="440.2,319.6 443.8,323.2 440.2,326.8 436.6,323.2" fill="#00f800" stroke="#0a0a0a" stroke-width="0.8"/>
<line x1="440.0" y1="325.2" x2="442.2" y2="323.2" stroke="#f0fff0" stroke-width="1.2"/>
<polygon points="448.1,320.1 451.7,323.7 448.1,327.3 444.5,323.7" fill="#00f800" stroke="#0a0a0a" stroke-width="0.8"/>
<line x1="447.9" y1="325.7" x2="450.1" y2="323.7" stroke="#f0fff0" stroke-width="1.2"/>
<polygon points="456.0,320.6 459.6,324.2 456.0,327.8 452.4,324.2" fill="#00f800" stroke="#0a0a0a" stroke-width="0.8"/>
<line x1="455.8" y1="326.2" x2="458.0" y2="324.2" stroke="#f0fff0" stroke-width="1.2"/>
<polygon points="463.9,321.2 467.5,324.8 463.9,328.4 460.3,324.8" fill="#00f800" stroke="#0a0a0a" stroke-width="0.8"/>
<line x1="463.7" y1="326.8" x2="465.9" y2="324.8" stroke="#f0fff0" stroke-width="1.2"/>
<polygon points="471.8,321.7 475.4,325.3 471.8,328.9 468.2,325.3" fill="#00f800" stroke="#0a0a0a" stroke-width="0.8"/>
<line x1="471.6" y1="327.3" x2="473.8" y2="325.3" stroke="#f0fff0" stroke-width="1.2"/>
<polygon points="479.7,322.2 483.3,325.8 479.7,329.4 476.1,325.8" fill="#00f800" stroke="#0a0a0a" stroke-width="0.8"/>
<line x1="479.5" y1="327.8" x2="481.7" y2="325.8" stroke="#f0fff0" stroke-width="1.2"/>
<polygon points="487.6,322.6 491.2,326.2 487.6,329.8 484.0,326.2" fill="#00f800" stroke="#0a0a0a" stroke-width="0.8"/>
<line x1="487.4" y1="328.2" x2="489.6" y2="326.2" stroke="#f0fff0" stroke-width="1.2"/>
<polygon points="495.5,323.0 499.1,326.6 495.5,330.2 491.9,326.6" fill="#00f800" stroke="#0a0a0a" stroke-width="0.8"/>
<line x1="495.3" y1="328.6" x2="497.5" y2="326.6" stroke="#f0fff0" stroke-width="1.2"/>
<polygon points="503.4,323.4 507.0,327.0 503.4,330.6 499.8,327.0" fill="#00f800" stroke="#0a0a0a" stroke-width="0.8"/>
<line x1="503.2" y1="329.0" x2="505.4" y2="327.0" stroke="#f0fff0" stroke-width="1.2"/>
<polygon points="511.3,323.7 514.9,327.3 511.3,330.9 507.7,327.3" fill="#00f800" stroke="#0a0a0a" stroke-width="0.8"/>
<line x1="511.1" y1="329.3" x2="513.3" y2="327.3" stroke="#f0fff0" stroke-width="1.2"/>
<polygon points="519.1,324.1 522.7,327.7 519.1,331.3 515.5,327.7" fill="#00f800" stroke="#0a0a0a" stroke-width="0.8"/>
<line x1="518.9" y1="329.7" x2="521.1" y2="327.7" stroke="#f0fff0" stroke-width="1.2"/>
<polygon points="527.0,324.5 530.6,328.1 527.0,331.7 523.4,328.1" fill="#00f800" stroke="#0a0a0a" stroke-width="0.8"/>
<line x1="526.8" y1="330.1" x2="529.0" y2="328.1" stroke="#f0fff0" stroke-width="1.2"/>
<polygon points="534.9,324.9 538.5,328.5 534.9,332.1 531.3,328.5" fill="#00f800" stroke="#0a0a0a" stroke-width="0.8"/>
<line x1="534.7" y1="330.5" x2="536.9" y2="328.5" stroke="#f0fff0" stroke-width="1.2"/>
<polygon points="542.8,325.3 546.4,328.9 542.8,332.5 539.2,328.9" fill="#00f800" stroke="#0a0a0a" stroke-width="0.8"/>
<line x1="542.6" y1="330.9" x2="544.8" y2="328.9" stroke="#f0fff0" stroke-width="1.2"/>
<polygon points="550.7,325.7 554.3,329.3 550.7,332.9 547.1,329.3" fill="#00f800" stroke="#0a0a0a" stroke-width="0.8"/>
<line x1="550.5" y1="331.3" x2="552.7" y2="329.3" stroke="#f0fff0" stroke-width="1.2"/>
<polygon points="558.6,326.1 562.2,329.7 558.6,333.3 555.0,329.7" fill="#00f800" stroke="#0a0a0a" stroke-width="0.8"/>
<line x1="558.4" y1="331.7" x2="560.6" y2="329.7" stroke="#f0fff0" stroke-width="1.2"/>
<polygon points="566.5,326.3 570.1,329.9 566.5,333.5 562.9,329.9" fill="#00f800" stroke="#0a0a0a" stroke-width="0.8"/>
<line x1="566.3" y1="331.9" x2="568.5" y2="329.9" stroke="#f0fff0" stroke-width="1.2"/>
<polygon points="574.4,326.5 578.0,330.1 574.4,333.7 570.8,330.1" fill="#00f800" stroke="#0a0a0a" stroke-width="0.8"/>
<line x1="574.2" y1="332.1" x2="576.4" y2="330.1" stroke="#f0fff0" stroke-width="1.2"/>
<polygon points="582.3,326.7 585.9,330.3 582.3,333.9 578.7,330.3" fill="#00f800" stroke="#0a0a0a" stroke-width="0.8"/>
<line x1="582.1" y1="332.3" x2="584.3" y2="330.3" stroke="#f0fff0" stroke-width="1.2"/>
<polygon points="590.2,326.9 593.8,330.5 590.2,334.1 586.6,330.5" fill="#00f800" stroke="#0a0a0a" stroke-width="0.8"/>
<line x1="590.0" y1="332.5" x2="592.2" y2="330.5" stroke="#f0fff0" stroke-width="1.2"/>
<polygon points="598.1,327.1 601.7,330.7 598.1,334.3 594.5,330.7" fill="#00f800" stroke="#0a0a0a" stroke-width="0.8"/>
<line x1="597.9" y1="332.7" x2="600.1" y2="330.7" stroke="#f0fff0" stroke-width="1.2"/>
<polygon points="606.0,327.3 609.6,330.9 606.0,334.5 602.4,330.9" fill="#00f800" stroke="#0a0a0a" stroke-width="0.8"/>
<line x1="605.8" y1="332.9" x2="608.0" y2="330.9" stroke="#f0fff0" stroke-width="1.2"/>
<polygon points="613.9,327.5 617.5,331.1 613.9,334.7 610.3,331.1" fill="#00f800" stroke="#0a0a0a" stroke-width="0.8"/>
<line x1="613.7" y1="333.1" x2="615.9" y2="331.1" stroke="#f0fff0" stroke-width="1.2"/>
<polygon points="621.8,327.7 625.4,331.3 621.8,334.9 618.2,331.3" fill="#00f800" stroke="#0a0a0a" stroke-width="0.8"/>
<line x1="621.6" y1="333.3" x2="623.8" y2="331.3" stroke="#f0fff0" stroke-width="1.2"/>
<polygon points="629.6,327.9 633.2,331.5 629.6,335.1 626.0,331.5" fill="#00f800" stroke="#0a0a0a" stroke-width="0.8"/>
<line x1="629.4" y1="333.5" x2="631.6" y2="331.5" stroke="#f0fff0" stroke-width="1.2"/>
<polygon points="637.5,328.1 641.1,331.7 637.5,335.3 633.9,331.7" fill="#00f800" stroke="#0a0a0a" stroke-width="0.8"/>
<line x1="637.3" y1="333.7" x2="639.5" y2="331.7" stroke="#f0fff0" stroke-width="1.2"/>
<polygon points="645.4,328.2 649.0,331.8 645.4,335.4 641.8,331.8" fill="#00f800" stroke="#0a0a0a" stroke-width="0.8"/>
<line x1="645.2" y1="333.8" x2="647.4" y2="331.8" stroke="#f0fff0" stroke-width="1.2"/>
<polygon points="653.3,328.3 656.9,331.9 653.3,335.5 649.7,331.9" fill="#00f800" stroke="#0a0a0a" stroke-width="0.8"/>
<line x1="653.1" y1="333.9" x2="655.3" y2="331.9" stroke="#f0fff0" stroke-width="1.2"/>
<polygon points="661.2,328.5 664.8,332.1 661.2,335.7 657.6,332.1" fill="#00f800" stroke="#0a0a0a" stroke-width="0.8"/>
<line x1="661.0" y1="334.1" x2="663.2" y2="332.1" stroke="#f0fff0" stroke-width="1.2"/>
<polygon points="669.1,328.6 672.7,332.2 669.1,335.8 665.5,332.2" fill="#00f800" stroke="#0a0a0a" stroke-width="0.8"/>
<line x1="668.9" y1="334.2" x2="671.1" y2="332.2" stroke="#f0fff0" stroke-width="1.2"/>
<polygon points="677.0,328.7 680.6,332.3 677.0,335.9 673.4,332.3" fill="#00f800" stroke="#0a0a0a" stroke-width="0.8"/>
<line x1="676.8" y1="334.3" x2="679.0" y2="332.3" stroke="#f0fff0" stroke-width="1.2"/>
<polygon points="684.9,328.8 688.5,332.4 684.9,336.0 681.3,332.4" fill="#00f800" stroke="#0a0a0a" stroke-width="0.8"/>
<line x1="684.7" y1="334.4" x2="686.9" y2="332.4" stroke="#f0fff0" stroke-width="1.2"/>
<polygon points="692.8,329.0 696.4,332.6 692.8,336.2 689.2,332.6" fill="#00f800" stroke="#0a0a0a" stroke-width="0.8"/>
<line x1="692.6" y1="334.6" x2="694.8" y2="332.6" stroke="#f0fff0" stroke-width="1.2"/>
<polygon points="700.7,329.1 704.3,332.7 700.7,336.3 697.1,332.7" fill="#00f800" stroke="#0a0a0a" stroke-width="0.8"/>
<line x1="700.5" y1="334.7" x2="702.7" y2="332.7" stroke="#f0fff0" stroke-width="1.2"/>
<polygon points="708.6,329.2 712.2,332.8 708.6,336.4 705.0,332.8" fill="#00f800" stroke="#0a0a0a" stroke-width="0.8"/>
<line x1="708.4" y1="334.8" x2="710.6" y2="332.8" stroke="#f0fff0" stroke-width="1.2"/>
<polygon points="716.5,329.3 720.1,332.9 716.5,336.5 712.9,332.9" fill="#00f800" stroke="#0a0a0a" stroke-width="0.8"/>
<line x1="716.3" y1="334.9" x2="718.5" y2="332.9" stroke="#f0fff0" stroke-width="1.2"/>
<polygon points="724.4,329.5 728.0,333.1 724.4,336.7 720.8,333.1" fill="#00f800" stroke="#0a0a0a" stroke-width="0.8"/>
<line x1="724.2" y1="335.1" x2="726.4" y2="333.1" stroke="#f0fff0" stroke-width="1.2"/>
<polygon points="732.3,329.8 735.9,333.4 732.3,337.0 728.7,333.4" fill="#00f800" stroke="#0a0a0a" stroke-width="0.8"/>
<line x1="732.1" y1="335.4" x2="734.3" y2="333.4" stroke="#f0fff0" stroke-width="1.2"/>
<polygon points="740.1,330.1 743.7,333.7 740.1,337.3 736.5,333.7" fill="#00f800" stroke="#0a0a0a" stroke-width="0.8"/>
<line x1="739.9" y1="335.7" x2="742.1" y2="333.7" stroke="#f0fff0" stroke-width="1.2"/>
<polygon points="748.0,330.3 751.6,333.9 748.0,337.5 744.4,333.9" fill="#00f800" stroke="#0a0a0a" stroke-width="0.8"/>
<line x1="747.8" y1="335.9" x2="750.0" y2="333.9" stroke="#f0fff0" stroke-width="1.2"/>
<polygon points="755.9,330.0 759.5,333.6 755.9,337.2 752.3,333.6" fill="#00f800" stroke="#0a0a0a" stroke-width="0.8"/>
<line x1="755.7" y1="335.6" x2="757.9" y2="333.6" stroke="#f0fff0" stroke-width="1.2"/>
<polygon points="763.8,329.6 767.4,333.2 763.8,336.8 760.2,333.2" fill="#00f800" stroke="#0a0a0a" stroke-width="0.8"/>
<line x1="763.6" y1="335.2" x2="765.8" y2="333.2" stroke="#f0fff0" stroke-width="1.2"/>
<polygon points="771.7,329.1 775.3,332.7 771.7,336.3 768.1,332.7" fill="#00f800" stroke="#0a0a0a" stroke-width="0.8"/>
<line x1="771.5" y1="334.7" x2="773.7" y2="332.7" stroke="#f0fff0" stroke-width="1.2"/>
<polygon points="779.6,328.6 783.2,332.2 779.6,335.8 776.0,332.2" fill="#00f800" stroke="#0a0a0a" stroke-width="0.8"/>
<line x1="779.4" y1="334.2" x2="781.6" y2="332.2" stroke="#f0fff0" stroke-width="1.2"/>
<polygon points="787.5,328.1 791.1,331.7 787.5,335.3 783.9,331.7" fill="#00f800" stroke="#0a0a0a" stroke-width="0.8"/>
<line x1="787.3" y1="333.7" x2="789.5" y2="331.7" stroke="#f0fff0" stroke-width="1.2"/>
<polygon points="795.4,327.7 799.0,331.3 795.4,334.9 791.8,331.3" fill="#00f800" stroke="#0a0a0a" stroke-width="0.8"/>
<line x1="795.2" y1="333.3" x2="797.4" y2="331.3" stroke="#f0fff0" stroke-width="1.2"/>
<polygon points="803.3,327.3 806.9,330.9 803.3,334.5 799.7,330.9" fill="#00f800" stroke="#0a0a0a" stroke-width="0.8"/>
<line x1="803.1" y1="332.9" x2="805.3" y2="330.9" stroke="#f0fff0" stroke-width="1.2"/>
<polygon points="811.2,327.1 814.8,330.7 811.2,334.3 807.6,330.7" fill="#00f800" stroke="#0a0a0a" stroke-width="0.8"/>
<line x1="811.0" y1="332.7" x2="813.2" y2="330.7" stroke="#f0fff0" stroke-width="1.2"/>
<polygon points="819.1,326.9 822.7,330.5 819.1,334.1 815.5,330.5" fill="#00f800" stroke="#0a0a0a" stroke-width="0.8"/>
<line x1="818.9" y1="332.5" x2="821.1" y2="330.5" stroke="#f0fff0" stroke-width="1.2"/>
<polygon points="827.0,326.7 830.6,330.3 827.0,333.9 823.4,330.3" fill="#00f800" stroke="#0a0a0a" stroke-width="0.8"/>
<line x1="826.8" y1="332.3" x2="829.0" y2="330.3" stroke="#f0fff0" stroke-width="1.2"/>
<polygon points="834.9,326.5 838.5,330.1 834.9,333.7 831.3,330.1" fill="#00f800" stroke="#0a0a0a" stroke-width="0.8"/>
<line x1="834.7" y1="332.1" x2="836.9" y2="330.1" stroke="#f0fff0" stroke-width="1.2"/>
<polygon points="842.8,326.3 846.4,329.9 842.8,333.5 839.2,329.9" fill="#00f800" stroke="#0a0a0a" stroke-width="0.8"/>
<line x1="842.6" y1="331.9" x2="844.8" y2="329.9" stroke="#f0fff0" stroke-width="1.2"/>
<polygon points="850.7,326.1 854.3,329.7 850.7,333.3 847.1,329.7" fill="#00f800" stroke="#0a0a0a" stroke-width="0.8"/>
<line x1="850.5" y1="331.7" x2="852.7" y2="329.7" stroke="#f0fff0" stroke-width="1.2"/>
<polygon points="858.5,325.8 862.1,329.4 858.5,333.0 854.9,329.4" fill="#00f800" stroke="#0a0a0a" stroke-width="0.8"/>
<line x1="858.3" y1="331.4" x2="860.5" y2="329.4" stroke="#f0fff0" stroke-width="1.2"/>
<polygon points="866.4,325.5 870.0,329.1 866.4,332.7 862.8,329.1" fill="#00f800" stroke="#0a0a0a" stroke-width="0.8"/>
<line x1="866.2" y1="331.1" x2="868.4" y2="329.1" stroke="#f0fff0" stroke-width="1.2"/>
<polygon points="874.3,325.2 877.9,328.8 874.3,332.4 870.7,328.8" fill="#00f800" stroke="#0a0a0a" stroke-width="0.8"/>
<line x1="874.1" y1="330.8" x2="876.3" y2="328.8" stroke="#f0fff0" stroke-width="1.2"/>
<polygon points="882.2,324.9 885.8,328.5 882.2,332.1 878.6,328.5" fill="#00f800" stroke="#0a0a0a" stroke-width="0.8"/>
<line x1="882.0" y1="330.5" x2="884.2" y2="328.5" stroke="#f0fff0" stroke-width="1.2"/>
<polygon points="890.1,324.6 893.7,328.2 890.1,331.8 886.5,328.2" fill="#00f800" stroke="#0a0a0a" stroke-width="0.8"/>
<line x1="889.9" y1="330.2" x2="892.1" y2="328.2" stroke="#f0fff0" stroke-width="1.2"/>
<polygon points="898.0,324.3 901.6,327.9 898.0,331.5 894.4,327.9" fill="#00f800" stroke="#0a0a0a" stroke-width="0.8"/>
<line x1="897.8" y1="329.9" x2="900.0" y2="327.9" stroke="#f0fff0" stroke-width="1.2"/>
<polygon points="905.9,323.9 909.5,327.5 905.9,331.1 902.3,327.5" fill="#00f800" stroke="#0a0a0a" stroke-width="0.8"/>
<line x1="905.7" y1="329.5" x2="907.9" y2="327.5" stroke="#f0fff0" stroke-width="1.2"/>
<polygon points="913.8,323.4 917.4,327.0 913.8,330.6 910.2,327.0" fill="#00f800" stroke="#0a0a0a" stroke-width="0.8"/>
<line x1="913.6" y1="329.0" x2="915.8" y2="327.0" stroke="#f0fff0" stroke-width="1.2"/>
<polygon points="921.7,323.0 925.3,326.6 921.7,330.2 918.1,326.6" fill="#00f800" stroke="#0a0a0a" stroke-width="0.8"/>
<line x1="921.5" y1="328.6" x2="923.7" y2="326.6" stroke="#f0fff0" stroke-width="1.2"/>
<polygon points="929.6,322.6 933.2,326.2 929.6,329.8 926.0,326.2" fill="#00f800" stroke="#0a0a0a" stroke-width="0.8"/>
<line x1="929.4" y1="328.2" x2="931.6" y2="326.2" stroke="#f0fff0" stroke-width="1.2"/>
<polygon points="937.5,322.1 941.1,325.7 937.5,329.3 933.9,325.7" fill="#00f800" stroke="#0a0a0a" stroke-width="0.8"/>
<line x1="937.3" y1="327.7" x2="939.5" y2="325.7" stroke="#f0fff0" stroke-width="1.2"/>
<polygon points="945.4,321.7 949.0,325.3 945.4,328.9 941.8,325.3" fill="#00f800" stroke="#0a0a0a" stroke-width="0.8"/>
<line x1="945.2" y1="327.3" x2="947.4" y2="325.3" stroke="#f0fff0" stroke-width="1.2"/>
<polygon points="953.3,321.3 956.9,324.9 953.3,328.5 949.7,324.9" fill="#00f800" stroke="#0a0a0a" stroke-width="0.8"/>
<line x1="953.1" y1="326.9" x2="955.3" y2="324.9" stroke="#f0fff0" stroke-width="1.2"/>
<polygon points="961.2,320.8 964.8,324.4 961.2,328.0 957.6,324.4" fill="#00f800" stroke="#0a0a0a" stroke-width="0.8"/>
<line x1="961.0" y1="326.4" x2="963.2" y2="324.4" stroke="#f0fff0" stroke-width="1.2"/>
<polygon points="969.0,320.4 972.6,324.0 969.0,327.6 965.4,324.0" fill="#00f800" stroke="#0a0a0a" stroke-width="0.8"/>
<line x1="968.8" y1="326.0" x2="971.0" y2="324.0" stroke="#f0fff0" stroke-width="1.2"/>
<polygon points="976.9,319.9 980.5,323.5 976.9,327.1 973.3,323.5" fill="#00f800" stroke="#0a0a0a" stroke-width="0.8"/>
<line x1="976.7" y1="325.5" x2="978.9" y2="323.5" stroke="#f0fff0" stroke-width="1.2"/>
<polygon points="984.8,319.5 988.4,323.1 984.8,326.7 981.2,323.1" fill="#00f800" stroke="#0a0a0a" stroke-width="0.8"/>
<line x1="984.6" y1="325.1" x2="986.8" y2="323.1" stroke="#f0fff0" stroke-width="1.2"/>
<polygon points="992.7,319.0 996.3,322.6 992.7,326.2 989.1,322.6" fill="#00f800" stroke="#0a0a0a" stroke-width="0.8"/>
<line x1="992.5" y1="324.6" x2="994.7" y2="322.6" stroke="#f0fff0" stroke-width="1.2"/>
<polygon points="1000.6,318.6 1004.2,322.2 1000.6,325.8 997.0,322.2" fill="#00f800" stroke="#0a0a0a" stroke-width="0.8"/>
<line x1="1000.4" y1="324.2" x2="1002.6" y2="322.2" stroke="#f0fff0" stroke-width="1.2"/>
<polygon points="1008.5,318.2 1012.1,321.8 1008.5,325.4 1004.9,321.8" fill="#00f800" stroke="#0a0a0a" stroke-width="0.8"/>
<line x1="1008.3" y1="323.8" x2="1010.5" y2="321.8" stroke="#f0fff0" stroke-width="1.2"/>
<polygon points="1016.4,317.7 1020.0,321.3 1016.4,324.9 1012.8,321.3" fill="#00f800" stroke="#0a0a0a" stroke-width="0.8"/>
<line x1="1016.2" y1="323.3" x2="1018.4" y2="321.3" stroke="#f0fff0" stroke-width="1.2"/>
<polygon points="1024.3,317.3 1027.9,320.9 1024.3,324.5 1020.7,320.9" fill="#00f800" stroke="#0a0a0a" stroke-width="0.8"/>
<line x1="1024.1" y1="322.9" x2="1026.3" y2="320.9" stroke="#f0fff0" stroke-width="1.2"/>
<polygon points="1032.2,316.8 1035.8,320.4 1032.2,324.0 1028.6,320.4" fill="#00f800" stroke="#0a0a0a" stroke-width="0.8"/>
<line x1="1032.0" y1="322.4" x2="1034.2" y2="320.4" stroke="#f0fff0" stroke-width="1.2"/>
<polygon points="1040.1,316.4 1043.7,320.0 1040.1,323.6 1036.5,320.0" fill="#00f800" stroke="#0a0a0a" stroke-width="0.8"/>
<line x1="1039.9" y1="322.0" x2="1042.1" y2="320.0" stroke="#f0fff0" stroke-width="1.2"/>
<polygon points="1048.0,315.9 1051.6,319.5 1048.0,323.1 1044.4,319.5" fill="#00f800" stroke="#0a0a0a" stroke-width="0.8"/>
<line x1="1047.8" y1="321.5" x2="1050.0" y2="319.5" stroke="#f0fff0" stroke-width="1.2"/>
<polygon points="1055.9,315.5 1059.5,319.1 1055.9,322.7 1052.3,319.1" fill="#00f800" stroke="#0a0a0a" stroke-width="0.8"/>
<line x1="1055.7" y1="321.1" x2="1057.9" y2="319.1" stroke="#f0fff0" stroke-width="1.2"/>
<polygon points="1063.8,315.0 1067.4,318.6 1063.8,322.2 1060.2,318.6" fill="#00f800" stroke="#0a0a0a" stroke-width="0.8"/>
<line x1="1063.6" y1="320.6" x2="1065.8" y2="318.6" stroke="#f0fff0" stroke-width="1.2"/>
<polygon points="1071.7,314.6 1075.3,318.2 1071.7,321.8 1068.1,318.2" fill="#00f800" stroke="#0a0a0a" stroke-width="0.8"/>
<line x1="1071.5" y1="320.2" x2="1073.7" y2="318.2" stroke="#f0fff0" stroke-width="1.2"/>
<polygon points="1079.5,314.1 1083.1,317.7 1079.5,321.3 1075.9,317.7" fill="#00f800" stroke="#0a0a0a" stroke-width="0.8"/>
<line x1="1079.3" y1="319.7" x2="1081.5" y2="317.7" stroke="#f0fff0" stroke-width="1.2"/>
<polygon points="1087.4,313.6 1091.0,317.2 1087.4,320.8 1083.8,317.2" fill="#00f800" stroke="#0a0a0a" stroke-width="0.8"/>
<line x1="1087.2" y1="319.2" x2="1089.4" y2="317.2" stroke="#f0fff0" stroke-width="1.2"/>
<polygon points="1095.3,313.0 1098.9,316.6 1095.3,320.2 1091.7,316.6" fill="#00f800" stroke="#0a0a0a" stroke-width="0.8"/>
<line x1="1095.1" y1="318.6" x2="1097.3" y2="316.6" stroke="#f0fff0" stroke-width="1.2"/>
<polygon points="1103.2,312.5 1106.8,316.1 1103.2,319.7 1099.6,316.1" fill="#00f800" stroke="#0a0a0a" stroke-width="0.8"/>
<line x1="1103.0" y1="318.1" x2="1105.2" y2="316.1" stroke="#f0fff0" stroke-width="1.2"/>
<polygon points="1111.1,312.0 1114.7,315.6 1111.1,319.2 1107.5,315.6" fill="#00f800" stroke="#0a0a0a" stroke-width="0.8"/>
<line x1="1110.9" y1="317.6" x2="1113.1" y2="315.6" stroke="#f0fff0" stroke-width="1.2"/>
<polygon points="1119.0,311.4 1122.6,315.0 1119.0,318.6 1115.4,315.0" fill="#00f800" stroke="#0a0a0a" stroke-width="0.8"/>
<line x1="1118.8" y1="317.0" x2="1121.0" y2="315.0" stroke="#f0fff0" stroke-width="1.2"/>
<polygon points="1126.9,310.9 1130.5,314.5 1126.9,318.1 1123.3,314.5" fill="#00f800" stroke="#0a0a0a" stroke-width="0.8"/>
<line x1="1126.7" y1="316.5" x2="1128.9" y2="314.5" stroke="#f0fff0" stroke-width="1.2"/>
<polygon points="1134.8,310.3 1138.4,313.9 1134.8,317.5 1131.2,313.9" fill="#00f800" stroke="#0a0a0a" stroke-width="0.8"/>
<line x1="1134.6" y1="315.9" x2="1136.8" y2="313.9" stroke="#f0fff0" stroke-width="1.2"/>
<polygon points="1142.7,309.8 1146.3,313.4 1142.7,317.0 1139.1,313.4" fill="#00f800" stroke="#0a0a0a" stroke-width="0.8"/>
<line x1="1142.5" y1="315.4" x2="1144.7" y2="313.4" stroke="#f0fff0" stroke-width="1.2"/>
<polygon points="1150.6,309.2 1154.2,312.8 1150.6,316.4 1147.0,312.8" fill="#00f800" stroke="#0a0a0a" stroke-width="0.8"/>
<line x1="1150.4" y1="314.8" x2="1152.6" y2="312.8" stroke="#f0fff0" stroke-width="1.2"/>
<polygon points="1158.5,308.7 1162.1,312.3 1158.5,315.9 1154.9,312.3" fill="#00f800" stroke="#0a0a0a" stroke-width="0.8"/>
<line x1="1158.3" y1="314.3" x2="1160.5" y2="312.3" stroke="#f0fff0" stroke-width="1.2"/>
<polygon points="1166.4,308.1 1170.0,311.7 1166.4,315.3 1162.8,311.7" fill="#00f800" stroke="#0a0a0a" stroke-width="0.8"/>
<line x1="1166.2" y1="313.7" x2="1168.4" y2="311.7" stroke="#f0fff0" stroke-width="1.2"/>
<polygon points="1174.3,307.6 1177.9,311.2 1174.3,314.8 1170.7,311.2" fill="#00f800" stroke="#0a0a0a" stroke-width="0.8"/>
<line x1="1174.1" y1="313.2" x2="1176.3" y2="311.2" stroke="#f0fff0" stroke-width="1.2"/>
<polygon points="1182.2,307.0 1185.8,310.6 1182.2,314.2 1178.6,310.6" fill="#00f800" stroke="#0a0a0a" stroke-width="0.8"/>
<line x1="1182.0" y1="312.6" x2="1184.2" y2="310.6" stroke="#f0fff0" stroke-width="1.2"/>
<polygon points="1190.0,306.5 1193.6,310.1 1190.0,313.7 1186.5,310.1" fill="#00f800" stroke="#0a0a0a" stroke-width="0.8"/>
<line x1="1189.8" y1="312.1" x2="1192.0" y2="310.1" stroke="#f0fff0" stroke-width="1.2"/>
<polygon points="1197.9,306.0 1201.5,309.6 1197.9,313.2 1194.3,309.6" fill="#00f800" stroke="#0a0a0a" stroke-width="0.8"/>
<line x1="1197.7" y1="311.6" x2="1199.9" y2="309.6" stroke="#f0fff0" stroke-width="1.2"/>
<polygon points="1205.8,305.4 1209.4,309.0 1205.8,312.6 1202.2,309.0" fill="#00f800" stroke="#0a0a0a" stroke-width="0.8"/>
<line x1="1205.6" y1="311.0" x2="1207.8" y2="309.0" stroke="#f0fff0" stroke-width="1.2"/>
<polygon points="1213.7,304.7 1217.3,308.3 1213.7,311.9 1210.1,308.3" fill="#00f800" stroke="#0a0a0a" stroke-width="0.8"/>
<line x1="1213.5" y1="310.3" x2="1215.7" y2="308.3" stroke="#f0fff0" stroke-width="1.2"/>
<polygon points="1221.6,304.1 1225.2,307.7 1221.6,311.3 1218.0,307.7" fill="#00f800" stroke="#0a0a0a" stroke-width="0.8"/>
<line x1="1221.4" y1="309.7" x2="1223.6" y2="307.7" stroke="#f0fff0" stroke-width="1.2"/>
<polygon points="1229.5,303.4 1233.1,307.0 1229.5,310.6 1225.9,307.0" fill="#00f800" stroke="#0a0a0a" stroke-width="0.8"/>
<line x1="1229.3" y1="309.0" x2="1231.5" y2="307.0" stroke="#f0fff0" stroke-width="1.2"/>
<polygon points="1237.4,302.8 1241.0,306.4 1237.4,310.0 1233.8,306.4" fill="#00f800" stroke="#0a0a0a" stroke-width="0.8"/>
<line x1="1237.2" y1="308.4" x2="1239.4" y2="306.4" stroke="#f0fff0" stroke-width="1.2"/>
<polygon points="1245.3,302.1 1248.9,305.7 1245.3,309.3 1241.7,305.7" fill="#00f800" stroke="#0a0a0a" stroke-width="0.8"/>
<line x1="1245.1" y1="307.7" x2="1247.3" y2="305.7" stroke="#f0fff0" stroke-width="1.2"/>
<polygon points="1253.2,301.4 1256.8,305.0 1253.2,308.6 1249.6,305.0" fill="#00f800" stroke="#0a0a0a" stroke-width="0.8"/>
<line x1="1253.0" y1="307.0" x2="1255.2" y2="305.0" stroke="#f0fff0" stroke-width="1.2"/>
<polygon points="1261.1,300.8 1264.7,304.4 1261.1,308.0 1257.5,304.4" fill="#00f800" stroke="#0a0a0a" stroke-width="0.8"/>
<line x1="1260.9" y1="306.4" x2="1263.1" y2="304.4" stroke="#f0fff0" stroke-width="1.2"/>
<polygon points="1269.0,300.1 1272.6,303.7 1269.0,307.3 1265.4,303.7" fill="#00f800" stroke="#0a0a0a" stroke-width="0.8"/>
<line x1="1268.8" y1="305.7" x2="1271.0" y2="303.7" stroke="#f0fff0" stroke-width="1.2"/>
<polygon points="1276.9,299.8 1280.5,303.4 1276.9,307.0 1273.3,303.4" fill="#00f800" stroke="#0a0a0a" stroke-width="0.8"/>
<line x1="1276.7" y1="305.4" x2="1278.9" y2="303.4" stroke="#f0fff0" stroke-width="1.2"/>
<polygon points="1284.8,299.5 1288.4,303.1 1284.8,306.7 1281.2,303.1" fill="#00f800" stroke="#0a0a0a" stroke-width="0.8"/>
<line x1="1284.6" y1="305.1" x2="1286.8" y2="303.1" stroke="#f0fff0" stroke-width="1.2"/>
<polygon points="1292.7,299.2 1296.3,302.8 1292.7,306.4 1289.1,302.8" fill="#00f800" stroke="#0a0a0a" stroke-width="0.8"/>
<line x1="1292.5" y1="304.8" x2="1294.7" y2="302.8" stroke="#f0fff0" stroke-width="1.2"/>
<polygon points="1300.6,298.9 1304.2,302.5 1300.6,306.1 1297.0,302.5" fill="#00f800" stroke="#0a0a0a" stroke-width="0.8"/>
<line x1="1300.4" y1="304.5" x2="1302.6" y2="302.5" stroke="#f0fff0" stroke-width="1.2"/>
<polygon points="1308.4,298.6 1312.0,302.2 1308.4,305.8 1304.8,302.2" fill="#00f800" stroke="#0a0a0a" stroke-width="0.8"/>
<line x1="1308.2" y1="304.2" x2="1310.4" y2="302.2" stroke="#f0fff0" stroke-width="1.2"/>
<polygon points="1316.3,298.3 1319.9,301.9 1316.3,305.5 1312.7,301.9" fill="#00f800" stroke="#0a0a0a" stroke-width="0.8"/>
<line x1="1316.1" y1="303.9" x2="1318.3" y2="301.9" stroke="#f0fff0" stroke-width="1.2"/>
<polygon points="1324.2,298.0 1327.8,301.6 1324.2,305.2 1320.6,301.6" fill="#00f800" stroke="#0a0a0a" stroke-width="0.8"/>
<line x1="1324.0" y1="303.6" x2="1326.2" y2="301.6" stroke="#f0fff0" stroke-width="1.2"/>
<polygon points="1332.1,297.6 1335.7,301.2 1332.1,304.8 1328.5,301.2" fill="#00f800" stroke="#0a0a0a" stroke-width="0.8"/>
<line x1="1331.9" y1="303.2" x2="1334.1" y2="301.2" stroke="#f0fff0" stroke-width="1.2"/>
<polygon points="1340.0,297.3 1343.6,300.9 1340.0,304.5 1336.4,300.9" fill="#00f800" stroke="#0a0a0a" stroke-width="0.8"/>
<line x1="1339.8" y1="302.9" x2="1342.0" y2="300.9" stroke="#f0fff0" stroke-width="1.2"/>
<polygon points="1347.9,296.9 1351.5,300.5 1347.9,304.1 1344.3,300.5" fill="#00f800" stroke="#0a0a0a" stroke-width="0.8"/>
<line x1="1347.7" y1="302.5" x2="1349.9" y2="300.5" stroke="#f0fff0" stroke-width="1.2"/>
<polygon points="1355.8,296.5 1359.4,300.1 1355.8,303.7 1352.2,300.1" fill="#00f800" stroke="#0a0a0a" stroke-width="0.8"/>
<line x1="1355.6" y1="302.1" x2="1357.8" y2="300.1" stroke="#f0fff0" stroke-width="1.2"/>
<polygon points="1363.7,296.2 1367.3,299.8 1363.7,303.4 1360.1,299.8" fill="#00f800" stroke="#0a0a0a" stroke-width="0.8"/>
<line x1="1363.5" y1="301.8" x2="1365.7" y2="299.8" stroke="#f0fff0" stroke-width="1.2"/>
<polygon points="1371.6,295.8 1375.2,299.4 1371.6,303.0 1368.0,299.4" fill="#00f800" stroke="#0a0a0a" stroke-width="0.8"/>
<line x1="1371.4" y1="301.4" x2="1373.6" y2="299.4" stroke="#f0fff0" stroke-width="1.2"/>
<polygon points="1379.5,295.5 1383.1,299.1 1379.5,302.7 1375.9,299.1" fill="#00f800" stroke="#0a0a0a" stroke-width="0.8"/>
<line x1="1379.3" y1="301.1" x2="1381.5" y2="299.1" stroke="#f0fff0" stroke-width="1.2"/>
<polygon points="1387.4,295.1 1391.0,298.7 1387.4,302.3 1383.8,298.7" fill="#00f800" stroke="#0a0a0a" stroke-width="0.8"/>
<line x1="1387.2" y1="300.7" x2="1389.4" y2="298.7" stroke="#f0fff0" stroke-width="1.2"/>
<polygon points="1395.3,294.8 1398.9,298.4 1395.3,302.0 1391.7,298.4" fill="#00f800" stroke="#0a0a0a" stroke-width="0.8"/>
<line x1="1395.1" y1="300.4" x2="1397.3" y2="298.4" stroke="#f0fff0" stroke-width="1.2"/>
<polygon points="1403.2,294.5 1406.8,298.1 1403.2,301.7 1399.6,298.1" fill="#00f800" stroke="#0a0a0a" stroke-width="0.8"/>
<line x1="1403.0" y1="300.1" x2="1405.2" y2="298.1" stroke="#f0fff0" stroke-width="1.2"/>
<polygon points="1411.1,294.1 1414.7,297.7 1411.1,301.3 1407.5,297.7" fill="#00f800" stroke="#0a0a0a" stroke-width="0.8"/>
<line x1="1410.9" y1="299.7" x2="1413.1" y2="297.7" stroke="#f0fff0" stroke-width="1.2"/>
<polygon points="1418.9,293.8 1422.5,297.4 1418.9,301.0 1415.3,297.4" fill="#00f800" stroke="#0a0a0a" stroke-width="0.8"/>
<line x1="1418.7" y1="299.4" x2="1420.9" y2="297.4" stroke="#f0fff0" stroke-width="1.2"/>
<polygon points="1426.8,293.4 1430.4,297.0 1426.8,300.6 1423.2,297.0" fill="#00f800" stroke="#0a0a0a" stroke-width="0.8"/>
<line x1="1426.6" y1="299.0" x2="1428.8" y2="297.0" stroke="#f0fff0" stroke-width="1.2"/>
<polygon points="1434.7,293.1 1438.3,296.7 1434.7,300.3 1431.1,296.7" fill="#00f800" stroke="#0a0a0a" stroke-width="0.8"/>
<line x1="1434.5" y1="298.7" x2="1436.7" y2="296.7" stroke="#f0fff0" stroke-width="1.2"/>
<polygon points="1442.6,292.6 1446.2,296.2 1442.6,299.8 1439.0,296.2" fill="#00f800" stroke="#0a0a0a" stroke-width="0.8"/>
<line x1="1442.4" y1="298.2" x2="1444.6" y2="296.2" stroke="#f0fff0" stroke-width="1.2"/>
<polygon points="1450.5,292.2 1454.1,295.8 1450.5,299.4 1446.9,295.8" fill="#00f800" stroke="#0a0a0a" stroke-width="0.8"/>
<line x1="1450.3" y1="297.8" x2="1452.5" y2="295.8" stroke="#f0fff0" stroke-width="1.2"/>
<polygon points="1458.4,291.7 1462.0,295.3 1458.4,298.9 1454.8,295.3" fill="#00f800" stroke="#0a0a0a" stroke-width="0.8"/>
<line x1="1458.2" y1="297.3" x2="1460.4" y2="295.3" stroke="#f0fff0" stroke-width="1.2"/>
<polygon points="1466.3,291.2 1469.9,294.8 1466.3,298.4 1462.7,294.8" fill="#00f800" stroke="#0a0a0a" stroke-width="0.8"/>
<line x1="1466.1" y1="296.8" x2="1468.3" y2="294.8" stroke="#f0fff0" stroke-width="1.2"/>
<polygon points="1474.2,290.7 1477.8,294.3 1474.2,297.9 1470.6,294.3" fill="#00f800" stroke="#0a0a0a" stroke-width="0.8"/>
<line x1="1474.0" y1="296.3" x2="1476.2" y2="294.3" stroke="#f0fff0" stroke-width="1.2"/>
<polygon points="1482.1,290.3 1485.7,293.9 1482.1,297.5 1478.5,293.9" fill="#00f800" stroke="#0a0a0a" stroke-width="0.8"/>
<line x1="1481.9" y1="295.9" x2="1484.1" y2="293.9" stroke="#f0fff0" stroke-width="1.2"/>
<polygon points="1490.0,289.8 1493.6,293.4 1490.0,297.0 1486.4,293.4" fill="#00f800" stroke="#0a0a0a" stroke-width="0.8"/>
<line x1="1489.8" y1="295.4" x2="1492.0" y2="293.4" stroke="#f0fff0" stroke-width="1.2"/>
<polygon points="1497.9,289.3 1501.5,292.9 1497.9,296.5 1494.3,292.9" fill="#00f800" stroke="#0a0a0a" stroke-width="0.8"/>
<line x1="1497.7" y1="294.9" x2="1499.9" y2="292.9" stroke="#f0fff0" stroke-width="1.2"/>
<polygon points="1505.8,288.8 1509.4,292.4 1505.8,296.0 1502.2,292.4" fill="#00f800" stroke="#0a0a0a" stroke-width="0.8"/>
<line x1="1505.6" y1="294.4" x2="1507.8" y2="292.4" stroke="#f0fff0" stroke-width="1.2"/>
<polygon points="1513.7,288.3 1517.3,291.9 1513.7,295.5 1510.1,291.9" fill="#00f800" stroke="#0a0a0a" stroke-width="0.8"/>
<line x1="1513.5" y1="293.9" x2="1515.7" y2="291.9" stroke="#f0fff0" stroke-width="1.2"/>
<polygon points="1521.6,287.5 1525.2,291.1 1521.6,294.7 1518.0,291.1" fill="#00f800" stroke="#0a0a0a" stroke-width="0.8"/>
<line x1="1521.4" y1="293.1" x2="1523.6" y2="291.1" stroke="#f0fff0" stroke-width="1.2"/>
<polygon points="1529.4,286.7 1533.0,290.3 1529.4,293.9 1525.8,290.3" fill="#00f800" stroke="#0a0a0a" stroke-width="0.8"/>
<line x1="1529.2" y1="292.3" x2="1531.4" y2="290.3" stroke="#f0fff0" stroke-width="1.2"/>
<polygon points="1537.3,285.8 1540.9,289.4 1537.3,293.0 1533.7,289.4" fill="#00f800" stroke="#0a0a0a" stroke-width="0.8"/>
<line x1="1537.1" y1="291.4" x2="1539.3" y2="289.4" stroke="#f0fff0" stroke-width="1.2"/>
<polygon points="1545.2,285.0 1548.8,288.6 1545.2,292.2 1541.6,288.6" fill="#00f800" stroke="#0a0a0a" stroke-width="0.8"/>
<line x1="1545.0" y1="290.6" x2="1547.2" y2="288.6" stroke="#f0fff0" stroke-width="1.2"/>
<polygon points="1553.1,284.1 1556.7,287.7 1553.1,291.3 1549.5,287.7" fill="#00f800" stroke="#0a0a0a" stroke-width="0.8"/>
<line x1="1552.9" y1="289.7" x2="1555.1" y2="287.7" stroke="#f0fff0" stroke-width="1.2"/>
<polygon points="1561.0,283.2 1564.6,286.8 1561.0,290.4 1557.4,286.8" fill="#00f800" stroke="#0a0a0a" stroke-width="0.8"/>
<line x1="1560.8" y1="288.8" x2="1563.0" y2="286.8" stroke="#f0fff0" stroke-width="1.2"/>
<polygon points="1568.9,281.3 1572.5,284.9 1568.9,288.5 1565.3,284.9" fill="#00f800" stroke="#0a0a0a" stroke-width="0.8"/>
<line x1="1568.7" y1="286.9" x2="1570.9" y2="284.9" stroke="#f0fff0" stroke-width="1.2"/>
<polygon points="1576.8,279.4 1580.4,283.0 1576.8,286.6 1573.2,283.0" fill="#00f800" stroke="#0a0a0a" stroke-width="0.8"/>
<line x1="1576.6" y1="285.0" x2="1578.8" y2="283.0" stroke="#f0fff0" stroke-width="1.2"/>
<polygon points="1584.7,277.5 1588.3,281.1 1584.7,284.7 1581.1,281.1" fill="#00f800" stroke="#0a0a0a" stroke-width="0.8"/>
<line x1="1584.5" y1="283.1" x2="1586.7" y2="281.1" stroke="#f0fff0" stroke-width="1.2"/>
<polygon points="310,389.5 941,300.2 941,308.6 310,390.5" fill="#2196f0"/>
<polygon points="954.4,302 936.2,294.2 940,300 940.7,308.4 938.8,313.9" fill="#2196f0"/>
<line x1="0" y1="401.4" x2="1585" y2="401.4" stroke="#00e000" stroke-width="1.5"/>
<polyline points="0,471.3 1538,471.3 1545,500" fill="none" stroke="#ffff00" stroke-width="1.2"/>
<line x1="0" y1="1034.4" x2="1585" y2="1034.4" stroke="#ff0000" stroke-width="1.5"/>
<path d="M0.0,894.2 C4.0,894.5 18.0,895.2 24.0,896.2 C30.0,897.2 31.3,896.9 36.0,900.2 C40.7,903.5 46.7,908.9 52.0,916.2 C57.3,923.5 63.3,937.9 68.0,944.2 C72.7,950.5 75.7,951.9 80.0,954.2 C84.3,956.6 90.0,955.9 94.0,958.3 C98.0,960.6 99.7,962.6 104.0,968.3 C108.3,974.0 116.0,986.6 120.0,992.3 C124.0,998.0 124.7,1000.0 128.0,1002.3 C131.3,1004.6 136.0,1006.6 140.0,1006.3 C144.0,1006.0 148.7,1002.0 152.0,1000.3 C155.3,998.6 157.3,997.3 160.0,996.3 C162.7,995.3 164.0,996.2 168.0,994.3 C172.0,992.4 180.0,986.8 184.0,985.1 C188.0,983.4 189.3,983.8 192.0,984.3 C194.7,984.8 196.3,985.0 200.0,988.3 C203.7,991.6 207.3,1000.7 214.0,1004.3 C220.7,1007.9 229.0,1008.7 240.0,1010.0 C251.0,1011.3 266.7,1013.3 280.0,1012.0 C293.3,1010.7 311.3,1006.9 320.0,1002.3 C328.7,997.7 328.0,989.2 332.0,984.3 C336.0,979.4 340.0,974.4 344.0,973.1 C348.0,971.8 350.7,973.1 356.0,976.3 C361.3,979.5 371.3,988.0 376.0,992.3 C380.7,996.6 381.3,1001.3 384.0,1002.3 C386.7,1003.3 389.3,1000.6 392.0,998.3 C394.7,996.0 397.3,994.6 400.0,988.3 C402.7,981.9 405.3,971.6 408.0,960.2 C410.7,948.9 413.3,933.5 416.0,920.2 C418.7,906.9 420.0,904.2 424.0,880.2 C428.0,856.2 435.3,798.1 440.0,776.1 C444.7,754.1 446.7,758.4 452.0,748.1 C457.3,737.8 466.7,720.1 472.0,714.1 C477.3,708.1 480.0,712.1 484.0,712.1 C488.0,712.1 490.7,716.8 496.0,714.1 C501.3,711.4 510.3,701.8 516.0,696.1 C521.7,690.4 524.2,692.4 530.0,680.0 C535.8,667.6 544.3,628.7 551.0,622.0 C557.7,615.3 558.5,627.0 570.0,640.0 C581.5,653.0 605.0,691.7 620.0,700.0 C635.0,708.3 648.1,703.4 660.0,690.0 C671.9,676.6 683.9,638.4 691.1,619.9 C698.3,601.4 700.3,587.1 703.4,578.7 C706.5,570.3 705.4,574.1 709.5,569.5 C713.6,564.9 723.7,555.7 727.8,551.1 C731.9,546.5 730.6,547.4 733.9,542.0 C737.2,536.6 743.9,523.1 747.7,519.0 C751.5,514.9 754.1,516.2 756.9,517.5 C759.7,518.8 759.7,518.0 764.5,526.7 C769.3,535.4 779.0,554.0 785.9,569.5 C792.8,585.0 796.8,601.5 805.8,619.9 C814.8,638.3 831.0,673.3 840.0,680.0 C849.0,686.7 853.5,670.0 860.0,660.0 C866.5,650.0 874.1,628.9 879.1,619.9 C884.1,610.9 886.0,613.1 889.8,606.2 C893.6,599.3 897.4,588.9 902.0,578.7 C906.6,568.5 911.2,556.5 917.3,545.0 C923.4,533.5 933.6,516.4 938.7,509.9 C943.8,503.4 945.4,506.4 947.9,505.9 C950.4,505.4 951.0,503.9 954.0,506.8 C957.0,509.8 962.1,515.2 966.2,523.6 C970.3,532.0 973.8,541.2 978.4,557.3 C983.0,573.3 986.8,596.1 993.7,619.9 C1000.6,643.7 1009.0,683.3 1020.0,700.0 C1031.0,716.7 1046.7,733.3 1060.0,720.0 C1073.3,706.7 1091.3,642.4 1099.8,620.2 C1108.3,598.0 1107.7,594.8 1110.9,586.6 C1114.2,578.5 1116.5,574.6 1119.3,571.3 C1122.1,567.9 1125.1,566.4 1127.7,566.5 C1130.3,566.6 1132.2,567.8 1134.7,572.1 C1137.2,576.4 1140.2,583.7 1143.0,592.2 C1145.8,600.7 1148.1,611.7 1151.4,623.0 C1154.7,634.3 1158.8,645.1 1162.6,660.0 C1166.4,674.9 1169.5,694.1 1174.1,712.1 C1178.7,730.1 1186.1,756.4 1190.1,768.1 C1194.1,779.8 1195.4,778.9 1198.1,782.1 C1200.8,785.3 1203.4,787.0 1206.1,787.3 C1208.8,787.6 1211.4,784.6 1214.1,784.1 C1216.8,783.6 1219.4,784.6 1222.1,784.1 C1224.8,783.6 1227.4,781.4 1230.1,780.9 C1232.8,780.4 1235.4,778.4 1238.1,780.9 C1240.8,783.4 1242.8,787.5 1246.1,796.1 C1249.4,804.7 1253.4,816.9 1258.1,832.2 C1262.8,847.6 1269.5,872.2 1274.2,888.2 C1278.9,904.2 1282.9,918.3 1286.2,928.2 C1289.5,938.1 1291.5,943.9 1294.2,947.4 C1296.9,950.9 1299.5,949.4 1302.2,949.5 C1304.9,949.6 1306.9,949.8 1310.2,948.2 C1313.5,946.7 1318.2,943.5 1322.2,940.2 C1326.2,936.9 1330.2,931.7 1334.2,928.2 C1338.2,924.7 1342.2,922.6 1346.2,919.4 C1350.2,916.2 1353.9,912.1 1358.2,909.0 C1362.5,905.9 1368.9,903.5 1372.2,901.0 C1375.5,898.5 1375.5,898.7 1378.2,894.2 C1380.9,889.7 1384.9,883.2 1388.2,874.2 C1391.5,865.2 1394.5,854.6 1398.2,840.2 C1401.9,825.9 1407.0,802.8 1410.3,788.1 C1413.6,773.4 1415.0,764.4 1418.3,752.1 C1421.6,739.8 1426.3,726.5 1430.3,714.1 C1434.3,701.8 1439.2,687.0 1442.3,678.0 C1445.4,669.0 1446.5,666.9 1448.8,660.0 C1451.0,653.1 1453.0,647.0 1455.8,636.9 C1458.6,626.8 1462.6,608.5 1465.6,599.2 C1468.6,589.9 1471.4,585.5 1474.0,581.1 C1476.6,576.7 1478.0,576.0 1481.0,572.7 C1484.0,569.4 1489.3,564.5 1492.1,561.5 C1494.9,558.5 1495.4,558.5 1497.7,554.5 C1500.0,550.5 1502.8,542.7 1506.1,537.8 C1509.4,532.9 1512.6,530.1 1517.3,525.2 C1522.0,520.3 1529.3,512.7 1534.0,508.5 C1538.7,504.3 1543.3,501.5 1545.2,500.1" fill="none" stroke="#ff0000" stroke-width="2" stroke-linejoin="round"/>
<polyline points="1545.2,500.1 1559.1,483.3 1577.3,455.4 1585.1,452" fill="none" stroke="#ffa030" stroke-width="1.6"/>
<rect x="549" y="617" width="3" height="3" fill="#ff0000"/>
<polyline points="116,1034 125,964 134,1034" fill="none" stroke="#ff0000" stroke-width="1"/>
<line x1="118" y1="1034" x2="128" y2="1034" stroke="#ffff00" stroke-width="1.5"/>
<rect x="146" y="752.6" width="5.2" height="282" fill="#ff0000"/>
<rect x="249" y="752.6" width="5.2" height="282" fill="#ff0000"/>
<rect x="391" y="752.6" width="5.2" height="282" fill="#ff0000"/>
<rect x="304" y="681.8" width="5.1" height="212" fill="#ff00ff"/>
<rect x="128" y="894" width="11" height="140" fill="#0099cc"/>
<rect x="214" y="894" width="106" height="140" fill="#0099cc"/>
<rect x="959.2" y="401.4" width="4.6" height="140.6" fill="#00ff00"/>
</svg>
<div style="position:absolute;left:-1px;top:-4px;width:11px;height:10px;border:1.5px solid #777;border-radius:3px;"></div>
<div style="position:absolute;left:7px;top:0px;width:3px;height:5px;background:#999"></div>
<div style="position:absolute;left:18px;top:0;width:1px;height:12px;background:#3a3f4c"></div>
<div class="t" id="f0" style="color:#c8c8c8;font-size:12px;top:-4.0px;left:23px;transform-origin:left center;">分时</div>
<div class="t" id="f1" style="color:#c8c8c8;font-size:12px;top:-4.0px;left:57px;transform-origin:left center;">1分钟</div>
<div class="t" id="f2" style="color:#c8c8c8;font-size:12px;top:-4.0px;left:95px;transform-origin:left center;">5分钟</div>
<div class="t" id="f3" style="color:#c8c8c8;font-size:12px;top:-4.0px;left:135.6px;transform-origin:left center;">15分钟</div>
<div class="t" id="f4" style="color:#c8c8c8;font-size:12px;top:-4.0px;left:180px;transform-origin:left center;">30分钟</div>
<div class="t" id="f5" style="color:#c8c8c8;font-size:12px;top:-4.0px;left:226.7px;transform-origin:left center;">60分钟</div>
<div class="t" id="f6" style="color:#33e0f0;font-size:12px;top:-4.0px;left:273px;transform-origin:left center;">日线</div>
<div class="t" id="f7" style="color:#c8c8c8;font-size:12px;top:-4.0px;left:306px;transform-origin:left center;">周线</div>
<div class="t" id="f8" style="color:#c8c8c8;font-size:12px;top:-4.0px;left:341px;transform-origin:left center;">月线</div>
<div class="t" id="f9" style="color:#c8c8c8;font-size:12px;top:-4.0px;left:375px;transform-origin:left center;">10分钟</div>
<div class="t" id="f10" style="color:#c8c8c8;font-size:12px;top:-4.0px;left:420.6px;transform-origin:left center;">45日线</div>
<div class="t" id="f11" style="color:#c8c8c8;font-size:12px;top:-4.0px;left:466px;transform-origin:left center;">季线</div>
<div class="t" id="f12" style="color:#c8c8c8;font-size:12px;top:-4.0px;left:500px;transform-origin:left center;">年线</div>
<div class="t" id="f13" style="color:#c8c8c8;font-size:12px;top:-4.0px;left:537px;transform-origin:left center;">5秒</div>
<div class="t" id="f14" style="color:#c8c8c8;font-size:12px;top:-4.0px;left:568.6px;transform-origin:left center;">15秒</div>
<div class="t" id="f15" style="color:#c8c8c8;font-size:12px;top:-4.0px;left:601.8px;transform-origin:left center;">多周期</div>
<div class="t" id="f16" style="color:#c8c8c8;font-size:12px;top:-4.0px;left:645.4px;transform-origin:left center;">更多 ></div>
<div style="position:absolute;left:1349px;top:0;width:1px;height:12px;background:#3a3f4c"></div>
<div style="position:absolute;left:1383px;top:0;width:1px;height:12px;background:#3a3f4c"></div>
<div style="position:absolute;left:1417px;top:0;width:1px;height:12px;background:#3a3f4c"></div>
<div style="position:absolute;left:1453px;top:0;width:1px;height:12px;background:#3a3f4c"></div>
<div style="position:absolute;left:1488px;top:0;width:1px;height:12px;background:#3a3f4c"></div>
<div style="position:absolute;left:1522px;top:0;width:1px;height:12px;background:#3a3f4c"></div>
<div style="position:absolute;left:1557px;top:0;width:1px;height:12px;background:#3a3f4c"></div>
<div style="position:absolute;left:1592px;top:0;width:1px;height:12px;background:#3a3f4c"></div>
<div style="position:absolute;left:1628px;top:0;width:1px;height:12px;background:#3a3f4c"></div>
<div class="t" style="color:#c8c8c8;font-size:12px;top:-4.0px;left:1365px;transform:translateX(-50%);">复权</div>
<div class="t" style="color:#c8c8c8;font-size:12px;top:-4.0px;left:1399px;transform:translateX(-50%);">叠加</div>
<div class="t" style="color:#c8c8c8;font-size:12px;top:-4.0px;left:1434px;transform:translateX(-50%);">多股</div>
<div class="t" style="color:#c8c8c8;font-size:12px;top:-4.0px;left:1469px;transform:translateX(-50%);">统计</div>
<div class="t" style="color:#c8c8c8;font-size:12px;top:-4.0px;left:1504px;transform:translateX(-50%);">画线</div>
<div class="t" style="color:#c8c8c8;font-size:12px;top:-4.0px;left:1540px;transform:translateX(-50%);">F10</div>
<div class="t" style="color:#c8c8c8;font-size:12px;top:-4.0px;left:1574px;transform:translateX(-50%);">标记</div>
<div class="t" style="color:#c8c8c8;font-size:12px;top:-4.0px;left:1609px;transform:translateX(-50%);">+自选</div>
<div class="t" style="color:#33e0f0;font-size:12px;top:-4.0px;left:1646px;transform:translateX(-50%);">返回</div>
<div class="t" id="f17" style="color:#d8d8d8;font-size:12.5px;top:16.1px;left:-2px;transform-origin:left center;">000678 襄阳轴承(日线.前复权)</div>
<div style="position:absolute;left:168px;top:15.5px;width:12px;height:12px;border-radius:50%;background:#6a6a6a"></div>
<svg style="position:absolute;left:168px;top:15.5px" width="12" height="12"><polyline points="3,5 6,8 9,5" fill="none" stroke="#222" stroke-width="1.3"/></svg>
<div class="t" id="f18" style="color:#d8d8d8;font-size:12.5px;top:16.1px;left:184px;transform-origin:left center;">四线擒龙主图</div>
<div class="t" id="f19" style="color:#f0f0f0;font-size:12.5px;top:16.1px;left:261.8px;transform-origin:left center;">BB: 9.69</div>
<div class="t" id="f20" style="color:#e8d000;font-size:12.5px;top:16.1px;left:322.5px;transform-origin:left center;">DIFF: 0.44</div>
<div class="t" id="f21" style="color:#f0f0f0;font-size:12.5px;top:16.1px;left:393px;transform-origin:left center;">: 9.69</div>
<div class="t" id="f22" style="color:#ff8c00;font-size:12.5px;top:16.1px;left:438.6px;transform-origin:left center;">MA250: 5.45</div>
<div class="t" id="f23" style="color:#ff2020;font-size:12.5px;top:16.1px;left:519px;transform-origin:left center;">追涨跌破止损: 10.73</div>
<div class="t" id="f24" style="color:#10f010;font-size:12.5px;top:16.1px;left:643.9px;transform-origin:left center;">牛熊线: 6.17</div>
<svg style="position:absolute;left:307.4px;top:15px" width="8" height="13"><rect x="3.5" y="3" width="1.2" height="10" fill="#ff3048"/><polygon points="4,0 7,5 1,5" fill="#ff3048"/></svg>
<svg style="position:absolute;left:378.6px;top:15px" width="8" height="13"><rect x="3.5" y="0" width="1.2" height="10" fill="#33e8f8"/><polygon points="4,13 7,8 1,8" fill="#33e8f8"/></svg>
<svg style="position:absolute;left:423.4px;top:15px" width="8" height="13"><rect x="3.5" y="3" width="1.2" height="10" fill="#ff3048"/><polygon points="4,0 7,5 1,5" fill="#ff3048"/></svg>
<svg style="position:absolute;left:506px;top:15px" width="8" height="13"><rect x="3.5" y="3" width="1.2" height="10" fill="#ff3048"/><polygon points="4,0 7,5 1,5" fill="#ff3048"/></svg>
<svg style="position:absolute;left:630px;top:15px" width="8" height="13"><rect x="3.5" y="3" width="1.2" height="10" fill="#ff3048"/><polygon points="4,0 7,5 1,5" fill="#ff3048"/></svg>
<svg style="position:absolute;left:711px;top:15px" width="8" height="13"><rect x="3.5" y="3" width="1.2" height="10" fill="#ff3048"/><polygon points="4,0 7,5 1,5" fill="#ff3048"/></svg>
<svg style="position:absolute;left:1578px;top:16px" width="14" height="14"><polygon points="7,1 13,7 7,13 1,7" fill="none" stroke="#8a8a8a" stroke-width="1"/></svg>
<div style="position:absolute;left:1598px;top:17px;width:10px;height:9px;border:1.2px solid #8a8a8a;border-radius:2px"></div>
<div style="position:absolute;left:1604px;top:19px;width:3px;height:6px;background:#8a8a8a"></div>
<div class="t" style="color:#d0d0d0;font-size:12px;top:42.3px;right:240px;">14.00</div>
<div style="position:absolute;left:1614px;top:48.3px;width:5px;height:1px;background:#3a3f4c"></div>
<div class="t" style="color:#d0d0d0;font-size:12px;top:72.2px;right:240px;">13.00</div>
<div style="position:absolute;left:1614px;top:78.2px;width:5px;height:1px;background:#3a3f4c"></div>
<div class="t" style="color:#d0d0d0;font-size:12px;top:102.0px;right:240px;">12.00</div>
<div style="position:absolute;left:1614px;top:108.0px;width:5px;height:1px;background:#3a3f4c"></div>
<div class="t" style="color:#d0d0d0;font-size:12px;top:131.9px;right:240px;">11.00</div>
<div style="position:absolute;left:1614px;top:137.9px;width:5px;height:1px;background:#3a3f4c"></div>
<div class="t" style="color:#d0d0d0;font-size:12px;top:161.7px;right:240px;">10.00</div>
<div style="position:absolute;left:1614px;top:167.7px;width:5px;height:1px;background:#3a3f4c"></div>
<div class="t" style="color:#d0d0d0;font-size:12px;top:191.6px;right:240px;">9.00</div>
<div style="position:absolute;left:1614px;top:197.6px;width:5px;height:1px;background:#3a3f4c"></div>
<div class="t" style="color:#d0d0d0;font-size:12px;top:221.4px;right:240px;">8.00</div>
<div style="position:absolute;left:1614px;top:227.4px;width:5px;height:1px;background:#3a3f4c"></div>
<div class="t" style="color:#d0d0d0;font-size:12px;top:251.2px;right:240px;">7.00</div>
<div style="position:absolute;left:1614px;top:257.2px;width:5px;height:1px;background:#3a3f4c"></div>
<div class="t" style="color:#d0d0d0;font-size:12px;top:281.1px;right:240px;">6.00</div>
<div style="position:absolute;left:1614px;top:287.1px;width:5px;height:1px;background:#3a3f4c"></div>
<div class="t" style="color:#d0d0d0;font-size:12px;top:311.0px;right:240px;">5.00</div>
<div style="position:absolute;left:1614px;top:317.0px;width:5px;height:1px;background:#3a3f4c"></div>
<div class="t" style="color:#d0d0d0;font-size:12px;top:340.8px;right:240px;">4.00</div>
<div style="position:absolute;left:1614px;top:346.8px;width:5px;height:1px;background:#3a3f4c"></div>
<div style="position:absolute;left:1614px;top:322px;width:50px;height:16px;background:#2c2f38"></div>
<div class="t" style="color:#c8c8c8;font-size:12px;top:324.0px;left:1615px;">4.27</div>
<div class="t" style="color:#d0d0d0;font-size:12px;top:33.0px;left:1531px;">14.50</div>
<svg style="position:absolute;left:1562px;top:30px" width="24" height="12"><polyline points="1,10 22,4" fill="none" stroke="#d0d0d0" stroke-width="1" stroke-dasharray="3,2"/><polyline points="16,1 22,4 16,8" fill="none" stroke="#d0d0d0" stroke-width="1"/></svg>
<div style="position:absolute;left:1555px;top:152.5px;width:58px;height:2px;background:#8a8a8a"></div>
<div class="t" style="color:#d0d0d0;font-size:12px;top:158.0px;left:1557px;">10.40 - 10</div>
<svg style="position:absolute;left:383px;top:358px" width="14" height="10"><line x1="1" y1="4" x2="13" y2="4" stroke="#c8c8c8" stroke-width="1"/><polyline points="4,1 1,4 4,7" fill="none" stroke="#c8c8c8" stroke-width="1"/></svg>
<div class="t" id="f25" style="color:#c8c8c8;font-size:12.5px;top:357.2px;left:397px;transform-origin:left center;">3.45</div>
<div class="t" style="color:#aaaaaa;font-size:11px;top:290.5px;left:1027px;">T</div>
<div class="t" style="left:875px;top:367px;width:13px;height:13px;background:#003c84;color:#fff;font-size:12px;line-height:13px;text-align:center;overflow:hidden">财</div>
<div class="t" style="left:1238px;top:367px;width:13px;height:13px;background:#008000;color:#fff;font-size:12px;line-height:13px;text-align:center;overflow:hidden">跌</div>
<div class="t" style="left:1334px;top:367px;width:13px;height:13px;background:#c04a10;color:#fff;font-size:12px;line-height:13px;text-align:center;overflow:hidden">预</div>
<div style="position:absolute;left:1570px;top:367px;width:8px;height:13px;background:#800000"></div>
<div style="position:absolute;left:1578px;top:367px;width:13px;height:13px;background:#a04000"></div>
<div class="t" style="color:#fff;font-size:12px;top:367.5px;left:1570px;"><span style="letter-spacing:-3px">龙榜</span></div>
<div style="position:absolute;left:-3px;top:384px;width:12px;height:12px;border-radius:50%;background:#6a6a6a"></div>
<svg style="position:absolute;left:-3px;top:384px" width="12" height="12"><polyline points="3,5 6,8 9,5" fill="none" stroke="#222" stroke-width="1.3"/></svg>
<div class="t" id="f26" style="color:#d8d8d8;font-size:12.5px;top:383.8px;left:12.6px;transform-origin:left center;">主力进场副图</div>
<div class="t" id="f27" style="color:#f0e000;font-size:12.5px;top:383.8px;left:90.8px;transform-origin:left center;">: 0.00</div>
<div class="t" id="f28" style="color:#10f010;font-size:12.5px;top:383.8px;left:125.7px;transform-origin:left center;">: 90.00</div>
<div class="t" id="f29" style="color:#ff2020;font-size:12.5px;top:383.8px;left:167px;transform-origin:left center;">趋势: 82.84</div>
<div class="t" id="f30" style="color:#f0e000;font-size:12.5px;top:383.8px;left:243px;transform-origin:left center;">A1: 82.84</div>
<div class="t" id="f31" style="color:#ff2020;font-size:12.5px;top:383.8px;left:308.6px;transform-origin:left center;">A2: 0.00</div>
<svg style="position:absolute;left:228.6px;top:383px" width="8" height="13"><rect x="3.5" y="3" width="1.2" height="10" fill="#ff3048"/><polygon points="4,0 7,5 1,5" fill="#ff3048"/></svg>
<svg style="position:absolute;left:294.8px;top:383px" width="8" height="13"><rect x="3.5" y="3" width="1.2" height="10" fill="#ff3048"/><polygon points="4,0 7,5 1,5" fill="#ff3048"/></svg>
<div class="t" style="color:#d0d0d0;font-size:12px;top:395.4px;right:240px;">90.00</div>
<div style="position:absolute;left:1614px;top:401.4px;width:5px;height:1px;background:#3a3f4c"></div>
<div class="t" style="color:#d0d0d0;font-size:12px;top:430.5px;right:240px;">85.00</div>
<div style="position:absolute;left:1614px;top:436.5px;width:5px;height:1px;background:#3a3f4c"></div>
<div class="t" style="color:#d0d0d0;font-size:12px;top:465.7px;right:240px;">80.00</div>
<div style="position:absolute;left:1614px;top:471.7px;width:5px;height:1px;background:#3a3f4c"></div>
<div class="t" style="color:#d0d0d0;font-size:12px;top:500.8px;right:240px;">75.00</div>
<div style="position:absolute;left:1614px;top:506.8px;width:5px;height:1px;background:#3a3f4c"></div>
<div class="t" style="color:#d0d0d0;font-size:12px;top:536.0px;right:240px;">70.00</div>
<div style="position:absolute;left:1614px;top:542.0px;width:5px;height:1px;background:#3a3f4c"></div>
<div class="t" style="color:#d0d0d0;font-size:12px;top:571.1px;right:240px;">65.00</div>
<div style="position:absolute;left:1614px;top:577.1px;width:5px;height:1px;background:#3a3f4c"></div>
<div class="t" style="color:#d0d0d0;font-size:12px;top:606.3px;right:240px;">60.00</div>
<div style="position:absolute;left:1614px;top:612.3px;width:5px;height:1px;background:#3a3f4c"></div>
<div class="t" style="color:#d0d0d0;font-size:12px;top:641.5px;right:240px;">55.00</div>
<div style="position:absolute;left:1614px;top:647.5px;width:5px;height:1px;background:#3a3f4c"></div>
<div class="t" style="color:#d0d0d0;font-size:12px;top:676.6px;right:240px;">50.00</div>
<div style="position:absolute;left:1614px;top:682.6px;width:5px;height:1px;background:#3a3f4c"></div>
<div class="t" style="color:#d0d0d0;font-size:12px;top:711.8px;right:240px;">45.00</div>
<div style="position:absolute;left:1614px;top:717.8px;width:5px;height:1px;background:#3a3f4c"></div>
<div class="t" style="color:#d0d0d0;font-size:12px;top:746.9px;right:240px;">40.00</div>
<div style="position:absolute;left:1614px;top:752.9px;width:5px;height:1px;background:#3a3f4c"></div>
<div class="t" style="color:#d0d0d0;font-size:12px;top:782.0px;right:240px;">35.00</div>
<div style="position:absolute;left:1614px;top:788.0px;width:5px;height:1px;background:#3a3f4c"></div>
<div class="t" style="color:#d0d0d0;font-size:12px;top:817.2px;right:240px;">30.00</div>
<div style="position:absolute;left:1614px;top:823.2px;width:5px;height:1px;background:#3a3f4c"></div>
<div class="t" style="color:#d0d0d0;font-size:12px;top:852.3px;right:240px;">25.00</div>
<div style="position:absolute;left:1614px;top:858.3px;width:5px;height:1px;background:#3a3f4c"></div>
<div class="t" style="color:#d0d0d0;font-size:12px;top:887.5px;right:240px;">20.00</div>
<div style="position:absolute;left:1614px;top:893.5px;width:5px;height:1px;background:#3a3f4c"></div>
<div class="t" style="color:#d0d0d0;font-size:12px;top:922.6px;right:240px;">15.00</div>
<div style="position:absolute;left:1614px;top:928.6px;width:5px;height:1px;background:#3a3f4c"></div>
<div class="t" style="color:#d0d0d0;font-size:12px;top:957.8px;right:240px;">10.00</div>
<div style="position:absolute;left:1614px;top:963.8px;width:5px;height:1px;background:#3a3f4c"></div>
<div class="t" style="color:#d0d0d0;font-size:12px;top:993.0px;right:240px;">5.00</div>
<div style="position:absolute;left:1614px;top:999.0px;width:5px;height:1px;background:#3a3f4c"></div>
<div class="t" style="color:#d0d0d0;font-size:12px;top:1049.5px;left:1637px;transform:translateX(-50%);">日线</div>
<div class="t" style="color:#ffa020;font-size:12px;top:747.0px;left:151.3px;">底</div>
<div class="t" style="color:#ffa020;font-size:12px;top:747.0px;left:254.5px;">底</div>
<div class="t" style="color:#ffa020;font-size:12px;top:747.0px;left:397px;">底</div>
<div class="t" style="color:#ff00ff;font-size:12px;top:676.0px;left:306px;">主力进场</div>
<div class="t" style="color:#ffffff;font-size:12px;top:852.5px;left:132.6px;">建仓区</div>
<div class="t" style="color:#ffffff;font-size:12px;top:852.5px;left:258.5px;">建仓区</div>
<div class="t" style="color:#60b0f0;font-size:12px;top:536.0px;left:965px;">顶</div>
<div class="t" style="color:#d0d0d0;font-size:12px;top:1049.5px;left:0px;">2024年</div>
<div class="t" style="color:#d0d0d0;font-size:12px;top:1049.5px;left:94px;">6</div>
<div class="t" style="color:#d0d0d0;font-size:12px;top:1049.5px;left:243.5px;">7</div>
<div class="t" style="color:#d0d0d0;font-size:12px;top:1049.5px;left:426px;">8</div>
<div class="t" style="color:#d0d0d0;font-size:12px;top:1049.5px;left:599.4px;">9</div>
<div class="t" style="color:#d0d0d0;font-size:12px;top:1049.5px;left:748px;">10</div>
<div class="t" style="color:#d0d0d0;font-size:12px;top:1049.5px;left:890px;">11</div>
<div class="t" style="color:#d0d0d0;font-size:12px;top:1049.5px;left:1056px;">12</div>
<div class="t" style="color:#d0d0d0;font-size:12px;top:1049.5px;left:1230.4px;">1</div>
<div class="t" style="color:#d0d0d0;font-size:12px;top:1049.5px;left:1372px;">2</div>
<div class="t" style="color:#d0d0d0;font-size:12px;top:1049.5px;left:1514.3px;">3</div>
<div style="position:absolute;left:92px;top:1048px;width:1px;height:15px;background:#3a3f4c"></div>
<div style="position:absolute;left:241.6px;top:1048px;width:1px;height:15px;background:#3a3f4c"></div>
<div style="position:absolute;left:424.2px;top:1048px;width:1px;height:15px;background:#3a3f4c"></div>
<div style="position:absolute;left:597.6px;top:1048px;width:1px;height:15px;background:#3a3f4c"></div>
<div style="position:absolute;left:746.8px;top:1048px;width:1px;height:15px;background:#3a3f4c"></div>
<div style="position:absolute;left:888.9px;top:1048px;width:1px;height:15px;background:#3a3f4c"></div>
<div style="position:absolute;left:1055.6px;top:1048px;width:1px;height:15px;background:#3a3f4c"></div>
<div style="position:absolute;left:1230px;top:1048px;width:1px;height:15px;background:#3a3f4c"></div>
<div style="position:absolute;left:1372px;top:1048px;width:1px;height:15px;background:#3a3f4c"></div>
<div style="position:absolute;left:1514px;top:1048px;width:1px;height:15px;background:#3a3f4c"></div>
<div style="position:absolute;left:1128px;top:1048px;width:78px;height:15px;background:#33363f"></div>
<div class="t" style="color:#d8d8d8;font-size:12px;top:1049.5px;left:1130px;">2024/12/13/五</div>
<div class="t" style="color:#ff4040;font-size:9px;top:-2.5px;left:1686px;font-weight:bold;">R</div>
<div class="t" style="color:#d8d8e0;font-size:15px;top:-3.5px;left:1699px;">000678 襄阳轴承</div>
<div style="position:absolute;left:1665px;top:18.1px;width:233px;height:1.5px;background:#3a3f4c"></div>
<div style="position:absolute;left:1665px;top:115.8px;width:233px;height:1.5px;background:#3a3f4c"></div>
<div style="position:absolute;left:1665px;top:212.9px;width:233px;height:1.5px;background:#3a3f4c"></div>
<div style="position:absolute;left:1665px;top:329.1px;width:233px;height:1.5px;background:#3a3f4c"></div>
<div style="position:absolute;left:1665px;top:389.5px;width:233px;height:1.5px;background:#3a3f4c"></div>
<div style="position:absolute;left:1665px;top:410.5px;width:233px;height:1.5px;background:#3a3f4c"></div>
<div style="position:absolute;left:1665px;top:452.5px;width:233px;height:1.5px;background:#3a3f4c"></div>
<div class="t" style="color:#d8d8e0;font-size:15.5px;top:22.2px;left:1667px;">卖五 ¥</div>
<div class="t" style="color:#22c05a;font-size:14px;top:23.0px;right:118.5px;font-weight:bold;">12.97</div>
<div class="t" style="color:#f0c040;font-size:14px;top:23.0px;right:3px;font-weight:bold;">0.6万</div>
<div class="t" style="color:#d8d8e0;font-size:15.5px;top:41.2px;left:1667px;">卖四</div>
<div class="t" style="color:#22c05a;font-size:14px;top:42.0px;right:118.5px;font-weight:bold;">12.95</div>
<div class="t" style="color:#f0c040;font-size:14px;top:42.0px;right:3px;font-weight:bold;">9.7万</div>
<div class="t" style="color:#d8d8e0;font-size:15.5px;top:60.2px;left:1667px;">卖三</div>
<div class="t" style="color:#22c05a;font-size:14px;top:60.9px;right:118.5px;font-weight:bold;">12.94</div>
<div class="t" style="color:#f0c040;font-size:14px;top:60.9px;right:3px;font-weight:bold;">59.1万</div>
<div class="t" style="color:#d8d8e0;font-size:15.5px;top:79.1px;left:1667px;">卖二</div>
<div class="t" style="color:#22c05a;font-size:14px;top:79.8px;right:118.5px;font-weight:bold;">12.93</div>
<div class="t" style="color:#f0c040;font-size:14px;top:79.8px;right:3px;font-weight:bold;">9.6万</div>
<div class="t" style="color:#d8d8e0;font-size:15.5px;top:98.0px;left:1667px;">卖一</div>
<div class="t" style="color:#22c05a;font-size:14px;top:98.8px;right:118.5px;font-weight:bold;">12.92</div>
<div class="t" style="color:#f0c040;font-size:14px;top:98.8px;right:3px;font-weight:bold;">24.2万</div>
<div class="t" style="color:#d8d8e0;font-size:15.5px;top:119.8px;left:1667px;">买一</div>
<div class="t" style="color:#22c05a;font-size:14px;top:120.6px;right:118.5px;font-weight:bold;">12.91</div>
<div class="t" style="color:#f0c040;font-size:14px;top:120.6px;right:3px;font-weight:bold;">831.4万</div>
<div class="t" style="color:#d8d8e0;font-size:15.5px;top:138.7px;left:1667px;">买二</div>
<div class="t" style="color:#22c05a;font-size:14px;top:139.4px;right:118.5px;font-weight:bold;">12.90</div>
<div class="t" style="color:#f0c040;font-size:14px;top:139.4px;right:3px;font-weight:bold;">798.3万</div>
<div class="t" style="color:#d8d8e0;font-size:15.5px;top:157.6px;left:1667px;">买三</div>
<div class="t" style="color:#22c05a;font-size:14px;top:158.3px;right:118.5px;font-weight:bold;">12.89</div>
<div class="t" style="color:#f0c040;font-size:14px;top:158.3px;right:3px;font-weight:bold;">57.5万</div>
<div class="t" style="color:#d8d8e0;font-size:15.5px;top:176.4px;left:1667px;">买四</div>
<div class="t" style="color:#22c05a;font-size:14px;top:177.2px;right:118.5px;font-weight:bold;">12.88</div>
<div class="t" style="color:#f0c040;font-size:14px;top:177.2px;right:3px;font-weight:bold;">68.7万</div>
<div class="t" style="color:#d8d8e0;font-size:15.5px;top:195.2px;left:1667px;">买五</div>
<div class="t" style="color:#22c05a;font-size:14px;top:196.0px;right:118.5px;font-weight:bold;">12.87</div>
<div class="t" style="color:#f0c040;font-size:14px;top:196.0px;right:3px;font-weight:bold;">74.1万</div>
<div class="t" style="color:#d8d8e0;font-size:15.5px;top:216.8px;left:1667px;">现价</div>
<div class="t" style="color:#22c05a;font-size:14px;top:217.6px;right:118.20000000000005px;font-weight:bold;">12.91</div>
<div class="t" style="color:#d8d8e0;font-size:15.5px;top:216.8px;left:1783.7px;">今开</div>
<div class="t" style="color:#22c05a;font-size:14px;top:217.6px;right:1.400000000000091px;font-weight:bold;">12.49</div>
<div class="t" style="color:#d8d8e0;font-size:15.5px;top:235.8px;left:1667px;">涨跌</div>
<div class="t" style="color:#22c05a;font-size:14px;top:236.5px;right:118.20000000000005px;font-weight:bold;">-0.93</div>
<div class="t" style="color:#d8d8e0;font-size:15.5px;top:235.8px;left:1783.7px;">最高</div>
<div class="t" style="color:#ff3040;font-size:14px;top:236.5px;right:1.400000000000091px;font-weight:bold;">14.50</div>
<div class="t" style="color:#d8d8e0;font-size:15.5px;top:254.6px;left:1667px;">涨幅</div>
<div class="t" style="color:#22c05a;font-size:14px;top:255.4px;right:118.20000000000005px;font-weight:bold;">-6.72%</div>
<div class="t" style="color:#d8d8e0;font-size:15.5px;top:254.6px;left:1783.7px;">最低</div>
<div class="t" style="color:#22c05a;font-size:14px;top:255.4px;right:1.400000000000091px;font-weight:bold;">12.46</div>
<div class="t" style="color:#d8d8e0;font-size:15.5px;top:273.6px;left:1667px;">昨收</div>
<div class="t" style="color:#d8d8e0;font-size:14px;top:274.3px;right:118.20000000000005px;font-weight:bold;">13.84</div>
<div class="t" style="color:#d8d8e0;font-size:15.5px;top:273.6px;left:1783.7px;">均价</div>
<div class="t" style="color:#22c05a;font-size:14px;top:274.3px;right:1.400000000000091px;font-weight:bold;">13.12</div>
<div class="t" style="color:#d8d8e0;font-size:15.5px;top:292.4px;left:1667px;">总量</div>
<div class="t" style="color:#f0c040;font-size:14px;top:293.2px;right:118.20000000000005px;font-weight:bold;">149.6万</div>
<div class="t" style="color:#d8d8e0;font-size:15.5px;top:292.4px;left:1783.7px;">量比</div>
<div class="t" style="color:#ff3040;font-size:14px;top:293.2px;right:1.400000000000091px;font-weight:bold;">1.36</div>
<div class="t" style="color:#d8d8e0;font-size:15.5px;top:311.4px;left:1667px;">外盘</div>
<div class="t" style="color:#ff3040;font-size:14px;top:312.1px;right:118.20000000000005px;font-weight:bold;">759657</div>
<div class="t" style="color:#d8d8e0;font-size:15.5px;top:311.4px;left:1783.7px;">内盘</div>
<div class="t" style="color:#22c05a;font-size:14px;top:312.1px;right:1.400000000000091px;font-weight:bold;">736307</div>
<div style="position:absolute;left:1860px;top:253.5px;width:40px;height:17px;border:1px solid #555;box-sizing:border-box"></div>
<div class="t" style="color:#d8d8e0;font-size:15.5px;top:332.2px;left:1667px;">换手</div>
<div class="t" style="color:#d8d8e0;font-size:14px;top:333.0px;right:118.20000000000005px;font-weight:bold;">32.55%</div>
<div class="t" style="color:#d8d8e0;font-size:15.5px;top:332.2px;left:1783.7px;">股本</div>
<div class="t" style="color:#d8d8e0;font-size:14px;top:333.0px;right:1.400000000000091px;font-weight:bold;">4.60亿</div>
<div class="t" style="color:#d8d8e0;font-size:15.5px;top:351.2px;left:1667px;">净资</div>
<div class="t" style="color:#d8d8e0;font-size:14px;top:352.0px;right:118.20000000000005px;font-weight:bold;">1.77</div>
<div class="t" style="color:#d8d8e0;font-size:15.5px;top:351.2px;left:1783.7px;">流通</div>
<div class="t" style="color:#d8d8e0;font-size:14px;top:352.0px;right:1.400000000000091px;font-weight:bold;">4.60亿</div>
<div class="t" style="color:#d8d8e0;font-size:15.5px;top:370.2px;left:1667px;">收益(三)</div>
<div class="t" style="color:#d8d8e0;font-size:14px;top:371.0px;right:118.20000000000005px;font-weight:bold;">-0.040</div>
<div class="t" style="color:#d8d8e0;font-size:15.5px;top:370.2px;left:1783.7px;">PE(动)</div>
<div class="t" style="color:#d8d8e0;font-size:10px;top:373.0px;right:11px;font-weight:bold;">—</div>
<div class="t" style="color:#d8d8e0;font-size:15.5px;top:392.2px;left:1666px;">交易状态: 闭市阶段 <b style="font-size:14px">15:00:00</b></div>
<div class="t" style="color:#d8d8e0;font-size:15.5px;top:413.2px;left:1667px;">主力净额</div>
<div style="position:absolute;left:1734px;top:415px;width:11px;height:12px;border:1px solid #666;border-radius:2px;box-sizing:border-box"></div>
<div style="position:absolute;left:1767px;top:418px;width:24px;height:7px;background:#1a9a40"></div>
<div class="t" style="color:#22c05a;font-size:14px;top:414.0px;right:39.5px;font-weight:bold;">-1.58亿</div>
<div class="t" style="color:#22c05a;font-size:14px;top:414.0px;right:0px;font-weight:bold;">-8%</div>
<div class="t" style="color:#d8d8e0;font-size:15.5px;top:432.2px;left:1667px;">10日主力净额</div>
<div style="position:absolute;left:1767px;top:437px;width:22px;height:7px;background:#1a9a40"></div>
<div class="t" style="color:#22c05a;font-size:14px;top:433.0px;right:39.5px;font-weight:bold;">-1.43亿</div>
<div class="t" style="color:#22c05a;font-size:14px;top:433.0px;right:0px;font-weight:bold;">-1%</div>
<div class="t" style="color:#d8d8e0;font-size:14px;top:455.5px;left:1666.5px;font-weight:bold;">14:55</div>
<div class="t" style="color:#22c05a;font-size:14px;top:455.5px;right:120.5px;font-weight:bold;">13.29</div>
<div class="t" style="color:#d020d0;font-size:14px;top:455.5px;right:56.5px;font-weight:bold;">72.7万</div>
<div class="t" style="color:#22c05a;font-size:14px;top:455.5px;left:1860.3px;transform:translateX(-50%);font-weight:bold;">S</div>
<div class="t" style="color:#9a9a9a;font-size:14px;top:455.5px;right:-1px;font-weight:bold;">72</div>
<div class="t" style="color:#22c05a;font-size:14px;top:473.5px;right:120.5px;font-weight:bold;">13.30</div>
<div class="t" style="color:#d020d0;font-size:14px;top:473.5px;right:56.5px;font-weight:bold;">135.9万</div>
<div class="t" style="color:#ff3040;font-size:14px;top:473.5px;left:1860.3px;transform:translateX(-50%);font-weight:bold;">B</div>
<div class="t" style="color:#9a9a9a;font-size:14px;top:473.5px;right:-1px;font-weight:bold;">114</div>
<div class="t" style="color:#22c05a;font-size:14px;top:491.5px;right:120.5px;font-weight:bold;">13.31</div>
<div class="t" style="color:#d020d0;font-size:14px;top:491.5px;right:56.5px;font-weight:bold;">74.1万</div>
<div class="t" style="color:#9a9a9a;font-size:14px;top:491.5px;right:-1px;font-weight:bold;">89</div>
<div class="t" style="color:#22c05a;font-size:14px;top:509.5px;right:120.5px;font-weight:bold;">13.32</div>
<div class="t" style="color:#d020d0;font-size:14px;top:509.5px;right:56.5px;font-weight:bold;">46.1万</div>
<div class="t" style="color:#9a9a9a;font-size:14px;top:509.5px;right:-1px;font-weight:bold;">47</div>
<div class="t" style="color:#22c05a;font-size:14px;top:527.5px;right:120.5px;font-weight:bold;">13.33</div>
<div class="t" style="color:#d020d0;font-size:14px;top:527.5px;right:56.5px;font-weight:bold;">87.8万</div>
<div class="t" style="color:#ff3040;font-size:14px;top:527.5px;left:1860.3px;transform:translateX(-50%);font-weight:bold;">B</div>
<div class="t" style="color:#9a9a9a;font-size:14px;top:527.5px;right:-1px;font-weight:bold;">75</div>
<div class="t" style="color:#22c05a;font-size:14px;top:545.5px;right:120.5px;font-weight:bold;">13.33</div>
<div class="t" style="color:#f0c040;font-size:14px;top:545.5px;right:56.5px;font-weight:bold;">23.3万</div>
<div class="t" style="color:#22c05a;font-size:14px;top:545.5px;left:1860.3px;transform:translateX(-50%);font-weight:bold;">S</div>
<div class="t" style="color:#9a9a9a;font-size:14px;top:545.5px;right:-1px;font-weight:bold;">42</div>
<div class="t" style="color:#22c05a;font-size:14px;top:563.5px;right:120.5px;font-weight:bold;">13.35</div>
<div class="t" style="color:#d020d0;font-size:14px;top:563.5px;right:56.5px;font-weight:bold;">82.5万</div>
<div class="t" style="color:#ff3040;font-size:14px;top:563.5px;left:1860.3px;transform:translateX(-50%);font-weight:bold;">B</div>
<div class="t" style="color:#9a9a9a;font-size:14px;top:563.5px;right:-1px;font-weight:bold;">64</div>
<div class="t" style="color:#22c05a;font-size:14px;top:581.5px;right:120.5px;font-weight:bold;">13.35</div>
<div class="t" style="color:#d020d0;font-size:14px;top:581.5px;right:56.5px;font-weight:bold;">71.2万</div>
<div class="t" style="color:#ff3040;font-size:14px;top:581.5px;left:1860.3px;transform:translateX(-50%);font-weight:bold;">B</div>
<div class="t" style="color:#9a9a9a;font-size:14px;top:581.5px;right:-1px;font-weight:bold;">47</div>
<div class="t" style="color:#22c05a;font-size:14px;top:599.5px;right:120.5px;font-weight:bold;">13.33</div>
<div class="t" style="color:#d020d0;font-size:14px;top:599.5px;right:56.5px;font-weight:bold;">80.8万</div>
<div class="t" style="color:#22c05a;font-size:14px;top:599.5px;left:1860.3px;transform:translateX(-50%);font-weight:bold;">S</div>
<div class="t" style="color:#9a9a9a;font-size:14px;top:599.5px;right:-1px;font-weight:bold;">68</div>
<div class="t" style="color:#22c05a;font-size:14px;top:617.5px;right:120.5px;font-weight:bold;">13.33</div>
<div class="t" style="color:#d020d0;font-size:14px;top:617.5px;right:56.5px;font-weight:bold;">94.9万</div>
<div class="t" style="color:#22c05a;font-size:14px;top:617.5px;left:1860.3px;transform:translateX(-50%);font-weight:bold;">S</div>
<div class="t" style="color:#9a9a9a;font-size:14px;top:617.5px;right:-1px;font-weight:bold;">96</div>
<div class="t" style="color:#22c05a;font-size:14px;top:635.5px;right:120.5px;font-weight:bold;">13.26</div>
<div class="t" style="color:#d020d0;font-size:14px;top:635.5px;right:56.5px;font-weight:bold;">198.4万</div>
<div class="t" style="color:#22c05a;font-size:14px;top:635.5px;left:1860.3px;transform:translateX(-50%);font-weight:bold;">S</div>
<div class="t" style="color:#9a9a9a;font-size:14px;top:635.5px;right:-1px;font-weight:bold;">178</div>
<div class="t" style="color:#22c05a;font-size:14px;top:653.5px;right:120.5px;font-weight:bold;">13.23</div>
<div class="t" style="color:#d020d0;font-size:14px;top:653.5px;right:56.5px;font-weight:bold;">74.4万</div>
<div class="t" style="color:#22c05a;font-size:14px;top:653.5px;left:1860.3px;transform:translateX(-50%);font-weight:bold;">S</div>
<div class="t" style="color:#9a9a9a;font-size:14px;top:653.5px;right:-1px;font-weight:bold;">100</div>
<div class="t" style="color:#d8d8e0;font-size:14px;top:671.5px;left:1666.5px;font-weight:bold;">14:56</div>
<div class="t" style="color:#22c05a;font-size:14px;top:671.5px;right:120.5px;font-weight:bold;">13.10</div>
<div class="t" style="color:#d020d0;font-size:14px;top:671.5px;right:56.5px;font-weight:bold;">98.0万</div>
<div class="t" style="color:#22c05a;font-size:14px;top:671.5px;left:1860.3px;transform:translateX(-50%);font-weight:bold;">S</div>
<div class="t" style="color:#9a9a9a;font-size:14px;top:671.5px;right:-1px;font-weight:bold;">153</div>
<div class="t" style="color:#22c05a;font-size:14px;top:689.5px;right:120.5px;font-weight:bold;">13.05</div>
<div class="t" style="color:#f0c040;font-size:14px;top:689.5px;right:56.5px;font-weight:bold;">30.1万</div>
<div class="t" style="color:#22c05a;font-size:14px;top:689.5px;left:1860.3px;transform:translateX(-50%);font-weight:bold;">S</div>
<div class="t" style="color:#9a9a9a;font-size:14px;top:689.5px;right:-1px;font-weight:bold;">48</div>
<div class="t" style="color:#22c05a;font-size:14px;top:707.5px;right:120.5px;font-weight:bold;">13.00</div>
<div class="t" style="color:#d020d0;font-size:14px;top:707.5px;right:56.5px;font-weight:bold;">78.4万</div>
<div class="t" style="color:#22c05a;font-size:14px;top:707.5px;left:1860.3px;transform:translateX(-50%);font-weight:bold;">S</div>
<div class="t" style="color:#9a9a9a;font-size:14px;top:707.5px;right:-1px;font-weight:bold;">80</div>
<div class="t" style="color:#22c05a;font-size:14px;top:725.5px;right:120.5px;font-weight:bold;">12.91</div>
<div class="t" style="color:#d020d0;font-size:14px;top:725.5px;right:56.5px;font-weight:bold;">47.6万</div>
<div class="t" style="color:#22c05a;font-size:14px;top:725.5px;left:1860.3px;transform:translateX(-50%);font-weight:bold;">S</div>
<div class="t" style="color:#9a9a9a;font-size:14px;top:725.5px;right:-1px;font-weight:bold;">57</div>
<div class="t" style="color:#22c05a;font-size:14px;top:743.5px;right:120.5px;font-weight:bold;">12.87</div>
<div class="t" style="color:#d020d0;font-size:14px;top:743.5px;right:56.5px;font-weight:bold;">109.4万</div>
<div class="t" style="color:#22c05a;font-size:14px;top:743.5px;left:1860.3px;transform:translateX(-50%);font-weight:bold;">S</div>
<div class="t" style="color:#9a9a9a;font-size:14px;top:743.5px;right:-1px;font-weight:bold;">70</div>
<div class="t" style="color:#22c05a;font-size:14px;top:761.5px;right:120.5px;font-weight:bold;">12.85</div>
<div class="t" style="color:#d020d0;font-size:14px;top:761.5px;right:56.5px;font-weight:bold;">67.8万</div>
<div class="t" style="color:#22c05a;font-size:14px;top:761.5px;left:1860.3px;transform:translateX(-50%);font-weight:bold;">S</div>
<div class="t" style="color:#9a9a9a;font-size:14px;top:761.5px;right:-1px;font-weight:bold;">68</div>
<div class="t" style="color:#22c05a;font-size:14px;top:779.5px;right:120.5px;font-weight:bold;">12.82</div>
<div class="t" style="color:#d020d0;font-size:14px;top:779.5px;right:56.5px;font-weight:bold;">156.3万</div>
<div class="t" style="color:#22c05a;font-size:14px;top:779.5px;left:1860.3px;transform:translateX(-50%);font-weight:bold;">S</div>
<div class="t" style="color:#9a9a9a;font-size:14px;top:779.5px;right:-1px;font-weight:bold;">65</div>
<div class="t" style="color:#22c05a;font-size:14px;top:797.5px;right:120.5px;font-weight:bold;">12.80</div>
<div class="t" style="color:#d020d0;font-size:14px;top:797.5px;right:56.5px;font-weight:bold;">89.9万</div>
<div class="t" style="color:#22c05a;font-size:14px;top:797.5px;left:1860.3px;transform:translateX(-50%);font-weight:bold;">S</div>
<div class="t" style="color:#9a9a9a;font-size:14px;top:797.5px;right:-1px;font-weight:bold;">96</div>
<div class="t" style="color:#22c05a;font-size:14px;top:815.5px;right:120.5px;font-weight:bold;">12.80</div>
<div class="t" style="color:#d020d0;font-size:14px;top:815.5px;right:56.5px;font-weight:bold;">88.3万</div>
<div class="t" style="color:#22c05a;font-size:14px;top:815.5px;left:1860.3px;transform:translateX(-50%);font-weight:bold;">S</div>
<div class="t" style="color:#9a9a9a;font-size:14px;top:815.5px;right:-1px;font-weight:bold;">78</div>
<div class="t" style="color:#22c05a;font-size:14px;top:833.5px;right:120.5px;font-weight:bold;">12.78</div>
<div class="t" style="color:#d020d0;font-size:14px;top:833.5px;right:56.5px;font-weight:bold;">130.6万</div>
<div class="t" style="color:#22c05a;font-size:14px;top:833.5px;left:1860.3px;transform:translateX(-50%);font-weight:bold;">S</div>
<div class="t" style="color:#9a9a9a;font-size:14px;top:833.5px;right:-1px;font-weight:bold;">100</div>
<div class="t" style="color:#22c05a;font-size:14px;top:851.5px;right:120.5px;font-weight:bold;">12.78</div>
<div class="t" style="color:#d020d0;font-size:14px;top:851.5px;right:56.5px;font-weight:bold;">77.6万</div>
<div class="t" style="color:#ff3040;font-size:14px;top:851.5px;left:1860.3px;transform:translateX(-50%);font-weight:bold;">B</div>
<div class="t" style="color:#9a9a9a;font-size:14px;top:851.5px;right:-1px;font-weight:bold;">95</div>
<div class="t" style="color:#22c05a;font-size:14px;top:869.5px;right:120.5px;font-weight:bold;">12.76</div>
<div class="t" style="color:#d020d0;font-size:14px;top:869.5px;right:56.5px;font-weight:bold;">94.9万</div>
<div class="t" style="color:#22c05a;font-size:14px;top:869.5px;left:1860.3px;transform:translateX(-50%);font-weight:bold;">S</div>
<div class="t" style="color:#9a9a9a;font-size:14px;top:869.5px;right:-1px;font-weight:bold;">134</div>
<div class="t" style="color:#22c05a;font-size:14px;top:887.5px;right:120.5px;font-weight:bold;">12.80</div>
<div class="t" style="color:#d020d0;font-size:14px;top:887.5px;right:56.5px;font-weight:bold;">412.2万</div>
<div class="t" style="color:#ff3040;font-size:14px;top:887.5px;left:1860.3px;transform:translateX(-50%);font-weight:bold;">B</div>
<div class="t" style="color:#9a9a9a;font-size:14px;top:887.5px;right:-1px;font-weight:bold;">198</div>
<div class="t" style="color:#22c05a;font-size:14px;top:905.5px;right:120.5px;font-weight:bold;">12.82</div>
<div class="t" style="color:#d020d0;font-size:14px;top:905.5px;right:56.5px;font-weight:bold;">142.2万</div>
<div class="t" style="color:#ff3040;font-size:14px;top:905.5px;left:1860.3px;transform:translateX(-50%);font-weight:bold;">B</div>
<div class="t" style="color:#9a9a9a;font-size:14px;top:905.5px;right:-1px;font-weight:bold;">88</div>
<div class="t" style="color:#22c05a;font-size:14px;top:923.5px;right:120.5px;font-weight:bold;">12.85</div>
<div class="t" style="color:#d020d0;font-size:14px;top:923.5px;right:56.5px;font-weight:bold;">66.4万</div>
<div class="t" style="color:#ff3040;font-size:14px;top:923.5px;left:1860.3px;transform:translateX(-50%);font-weight:bold;">B</div>
<div class="t" style="color:#9a9a9a;font-size:14px;top:923.5px;right:-1px;font-weight:bold;">77</div>
<div class="t" style="color:#22c05a;font-size:14px;top:941.5px;right:120.5px;font-weight:bold;">12.88</div>
<div class="t" style="color:#f0c040;font-size:14px;top:941.5px;right:56.5px;font-weight:bold;">29.1万</div>
<div class="t" style="color:#ff3040;font-size:14px;top:941.5px;left:1860.3px;transform:translateX(-50%);font-weight:bold;">B</div>
<div class="t" style="color:#9a9a9a;font-size:14px;top:941.5px;right:-1px;font-weight:bold;">46</div>
<div class="t" style="color:#22c05a;font-size:14px;top:959.5px;right:120.5px;font-weight:bold;">12.87</div>
<div class="t" style="color:#f0c040;font-size:14px;top:959.5px;right:56.5px;font-weight:bold;">34.4万</div>
<div class="t" style="color:#22c05a;font-size:14px;top:959.5px;left:1860.3px;transform:translateX(-50%);font-weight:bold;">S</div>
<div class="t" style="color:#9a9a9a;font-size:14px;top:959.5px;right:-1px;font-weight:bold;">41</div>
<div class="t" style="color:#22c05a;font-size:14px;top:977.5px;right:120.5px;font-weight:bold;">12.94</div>
<div class="t" style="color:#f0c040;font-size:14px;top:977.5px;right:56.5px;font-weight:bold;">19.9万</div>
<div class="t" style="color:#ff3040;font-size:14px;top:977.5px;left:1860.3px;transform:translateX(-50%);font-weight:bold;">B</div>
<div class="t" style="color:#9a9a9a;font-size:14px;top:977.5px;right:-1px;font-weight:bold;">35</div>
<div class="t" style="color:#22c05a;font-size:14px;top:995.5px;right:120.5px;font-weight:bold;">12.89</div>
<div class="t" style="color:#d020d0;font-size:14px;top:995.5px;right:56.5px;font-weight:bold;">137.5万</div>
<div class="t" style="color:#22c05a;font-size:14px;top:995.5px;left:1860.3px;transform:translateX(-50%);font-weight:bold;">S</div>
<div class="t" style="color:#9a9a9a;font-size:14px;top:995.5px;right:-1px;font-weight:bold;">107</div>
<div class="t" style="color:#22c05a;font-size:14px;top:1013.5px;right:120.5px;font-weight:bold;">12.90</div>
<div class="t" style="color:#d020d0;font-size:14px;top:1013.5px;right:56.5px;font-weight:bold;">123.1万</div>
<div class="t" style="color:#9a9a9a;font-size:14px;top:1013.5px;right:-1px;font-weight:bold;">89</div>
<div class="t" style="color:#d8d8e0;font-size:14px;top:1031.5px;left:1666.5px;font-weight:bold;">14:57</div>
<div class="t" style="color:#22c05a;font-size:14px;top:1031.5px;right:120.5px;font-weight:bold;">12.91</div>
<div class="t" style="color:#d020d0;font-size:14px;top:1031.5px;right:56.5px;font-weight:bold;">107.2万</div>
<div class="t" style="color:#ff3040;font-size:14px;top:1031.5px;left:1860.3px;transform:translateX(-50%);font-weight:bold;">B</div>
<div class="t" style="color:#9a9a9a;font-size:14px;top:1031.5px;right:-1px;font-weight:bold;">103</div>
<div class="t" style="color:#d8d8e0;font-size:14px;top:1049.5px;left:1666.5px;font-weight:bold;">15:00</div>
<div class="t" style="color:#22c05a;font-size:14px;top:1049.5px;right:120.5px;font-weight:bold;">12.91</div>
<div class="t" style="color:#d020d0;font-size:14px;top:1049.5px;right:56.5px;font-weight:bold;">3582.0万</div>
<div class="t" style="color:#9a9a9a;font-size:14px;top:1049.5px;right:-1px;font-weight:bold;">2972</div>
<div style="position:absolute;left:1666px;top:669.4px;width:232px;height:0;border-top:1px dotted #3a3f4c"></div>
<div style="position:absolute;left:1666px;top:1029.7px;width:232px;height:0;border-top:1px dotted #3a3f4c"></div>
<div style="position:absolute;left:1666px;top:1046.6px;width:232px;height:0;border-top:1px dotted #3a3f4c"></div>
<div style="position:absolute;left:525px;top:620px;width:575px;height:409px;background:#f0f0f0;box-shadow:1px 1px 0 #888"></div>
<div style="position:absolute;left:525px;top:620px;width:1px;height:409px;background:#a0a0a0"></div>
<div style="position:absolute;left:525px;top:620px;width:575px;height:22px;background:#b12d33"></div>
<div class="t" id="f32" style="color:#ffffff;font-size:12.5px;top:624.2px;left:529.5px;transform-origin:left center;">襄阳轴承 区间统计(复权)</div>
<svg style="position:absolute;left:1084px;top:624px" width="12" height="12"><line x1="1" y1="1" x2="11" y2="11" stroke="#f0d0d0" stroke-width="1"/><line x1="11" y1="1" x2="1" y2="11" stroke="#f0d0d0" stroke-width="1"/></svg>
<div class="t" style="color:#1a1a1a;font-size:12px;top:648.0px;right:1308px;">起始时间</div>
<div style="position:absolute;left:601px;top:645.6px;width:119px;height:17.5px;background:#fff;border:1px solid #a8a8a8;border-top-color:#8a8a8a;box-sizing:border-box"></div>
<div style="position:absolute;left:701px;top:646.6px;width:1px;height:15.5px;background:#c8c8c8"></div>
<svg style="position:absolute;left:706px;top:651.6px" width="9" height="6"><polygon points="0,0 9,0 4.5,5" fill="#909090"/></svg>
<div class="t" style="color:#000;font-size:11.5px;top:649.1px;left:604.3px;font-family:"Liberation Mono",monospace;letter-spacing:-0.5px;">2024-07-11</div>
<div class="t" style="color:#1a1a1a;font-size:12px;top:670.1px;right:1308px;">终止时间</div>
<div style="position:absolute;left:601px;top:666.2px;width:119px;height:17.5px;background:#fff;border:1px solid #a8a8a8;border-top-color:#8a8a8a;box-sizing:border-box"></div>
<div style="position:absolute;left:701px;top:667.2px;width:1px;height:15.5px;background:#c8c8c8"></div>
<svg style="position:absolute;left:706px;top:672.2px" width="9" height="6"><polygon points="0,0 9,0 4.5,5" fill="#909090"/></svg>
<div class="t" style="color:#000;font-size:11.5px;top:669.7px;left:604.3px;font-family:"Liberation Mono",monospace;letter-spacing:-0.5px;">2024-11-13</div>
<div class="t" style="color:#1a1a1a;font-size:12px;top:693.3px;right:1308px;">前收盘价</div>
<div style="position:absolute;left:601px;top:689.2px;width:119px;height:20px;background:#fff;border:1px solid #a8a8a8;border-top-color:#8a8a8a;box-sizing:border-box"></div>
<div class="t" style="color:#000;font-size:12.5px;top:693.0px;right:1183.5px;">3.63</div>
<div class="t" style="color:#1a1a1a;font-size:12px;top:716.5px;right:1308px;">开盘价</div>
<div style="position:absolute;left:601px;top:711.6px;width:119px;height:20px;background:#fff;border:1px solid #a8a8a8;border-top-color:#8a8a8a;box-sizing:border-box"></div>
<div class="t" style="color:#000;font-size:12.5px;top:715.4px;right:1183.5px;">3.68</div>
<div class="t" style="color:#1a1a1a;font-size:12px;top:738.7px;right:1308px;">最高价</div>
<div style="position:absolute;left:601px;top:734.1px;width:119px;height:20px;background:#fff;border:1px solid #a8a8a8;border-top-color:#8a8a8a;box-sizing:border-box"></div>
<div class="t" style="color:#000;font-size:12.5px;top:737.9px;right:1183.5px;">6.95</div>
<div class="t" style="color:#1a1a1a;font-size:12px;top:760.8px;right:1308px;">最低价</div>
<div style="position:absolute;left:601px;top:756.7px;width:119px;height:20px;background:#fff;border:1px solid #a8a8a8;border-top-color:#8a8a8a;box-sizing:border-box"></div>
<div class="t" style="color:#000;font-size:12.5px;top:760.5px;right:1183.5px;">3.45</div>
<div class="t" style="color:#1a1a1a;font-size:12px;top:784.0px;right:1308px;">收盘价</div>
<div style="position:absolute;left:601px;top:779.5px;width:119px;height:20px;background:#fff;border:1px solid #a8a8a8;border-top-color:#8a8a8a;box-sizing:border-box"></div>
<div class="t" style="color:#000;font-size:12.5px;top:783.2px;right:1183.5px;">6.36</div>
<div class="t" style="color:#1a1a1a;font-size:12px;top:807.2px;right:1308px;">成交量</div>
<div style="position:absolute;left:601px;top:803.3px;width:119px;height:20px;background:#fff;border:1px solid #a8a8a8;border-top-color:#8a8a8a;box-sizing:border-box"></div>
<div class="t" style="color:#000;font-size:12.5px;top:807.0px;right:1183.5px;">23511370</div>
<div class="t" style="color:#1a1a1a;font-size:12px;top:830.9px;right:1308px;">成交额</div>
<div style="position:absolute;left:601px;top:826.0px;width:119px;height:20px;background:#fff;border:1px solid #a8a8a8;border-top-color:#8a8a8a;box-sizing:border-box"></div>
<div class="t" style="color:#000;font-size:12.5px;top:829.8px;right:1183.5px;">119.4亿</div>
<div class="t" style="color:#1a1a1a;font-size:12px;top:853.5px;right:1308px;">加权均价</div>
<div style="position:absolute;left:601px;top:848.7px;width:119px;height:20px;background:#fff;border:1px solid #a8a8a8;border-top-color:#8a8a8a;box-sizing:border-box"></div>
<div class="t" style="color:#000;font-size:12.5px;top:852.5px;right:1183.5px;">5.078</div>
<div class="t" style="color:#1a1a1a;font-size:12px;top:875.2px;right:1308px;">区间涨幅</div>
<div style="position:absolute;left:601px;top:870.7px;width:119px;height:20px;background:#fff;border:1px solid #a8a8a8;border-top-color:#8a8a8a;box-sizing:border-box"></div>
<div class="t" style="color:#000;font-size:12.5px;top:874.5px;right:1183.5px;">2.73(75.21%)</div>
<div class="t" style="color:#1a1a1a;font-size:12px;top:897.8px;right:1308px;">区间振幅</div>
<div style="position:absolute;left:601px;top:893.4px;width:119px;height:20px;background:#fff;border:1px solid #a8a8a8;border-top-color:#8a8a8a;box-sizing:border-box"></div>
<div class="t" style="color:#000;font-size:12.5px;top:897.1px;right:1183.5px;">3.50(101.45%)</div>
<div class="t" style="color:#1a1a1a;font-size:12px;top:921.8px;right:1308px;">最大上涨</div>
<div style="position:absolute;left:601px;top:917.6px;width:119px;height:20px;background:#fff;border:1px solid #a8a8a8;border-top-color:#8a8a8a;box-sizing:border-box"></div>
<div class="t" style="color:#000;font-size:12.5px;top:921.4px;right:1183.5px;">101.45%</div>
<div class="t" style="color:#1a1a1a;font-size:12px;top:946.0px;right:1308px;">最大回撤</div>
<div style="position:absolute;left:601px;top:941.6px;width:119px;height:20px;background:#fff;border:1px solid #a8a8a8;border-top-color:#8a8a8a;box-sizing:border-box"></div>
<div class="t" style="color:#000;font-size:12.5px;top:945.4px;right:1183.5px;">-21.56%</div>
<div class="t" style="color:#1a1a1a;font-size:12px;top:968.7px;right:1308px;">累计换手</div>
<div style="position:absolute;left:601px;top:963.5px;width:119px;height:20px;background:#fff;border:1px solid #a8a8a8;border-top-color:#8a8a8a;box-sizing:border-box"></div>
<div class="t" style="color:#000;font-size:12.5px;top:967.2px;right:1183.5px;">511.55%</div>
<div class="t" style="color:#1a1a1a;font-size:12px;top:991.3px;right:1308px;">平均换手</div>
<div style="position:absolute;left:601px;top:986.5px;width:119px;height:20px;background:#fff;border:1px solid #a8a8a8;border-top-color:#8a8a8a;box-sizing:border-box"></div>
<div class="t" style="color:#000;font-size:12.5px;top:990.2px;right:1183.5px;">6.16%</div>
<div style="position:absolute;left:601px;top:1011.5px;width:12px;height:12px;background:#fff;border:1px solid #888;box-sizing:border-box"></div>
<div class="t" style="color:#1a1a1a;font-size:12px;top:1011.0px;left:619.4px;">保留区间显示线</div>
<div class="t" id="f33" style="color:#1a1a1a;font-size:12.5px;top:647.8px;left:729.8px;transform-origin:left center;">周期数 83个</div>
<div class="t" id="f34" style="color:#1a1a1a;font-size:12.5px;top:664.6px;left:729.8px;transform-origin:left center;">自然日 126天</div>
<div class="t" id="f35" style="color:#1a1a1a;font-size:12.5px;top:698.4px;left:729.8px;transform-origin:left center;">阳线 49个</div>
<div class="t" id="f36" style="color:#1a1a1a;font-size:12.5px;top:715.0px;left:729.8px;transform-origin:left center;">阴线 32个</div>
<div class="t" id="f37" style="color:#1a1a1a;font-size:12.5px;top:732.0px;left:729.8px;transform-origin:left center;">平线 2个</div>
<div class="t" id="f38" style="color:#1a1a1a;font-size:12.5px;top:749.2px;left:729.8px;transform-origin:left center;">上涨 44个</div>
<div class="t" id="f39" style="color:#1a1a1a;font-size:12.5px;top:766.0px;left:729.8px;transform-origin:left center;">下跌 37个</div>
<div class="t" id="f40" style="color:#1a1a1a;font-size:12.5px;top:782.8px;left:729.8px;transform-origin:left center;">平盘 2个</div>
<div style="position:absolute;left:738px;top:888.5px;width:67px;height:13.899999999999977px;background:linear-gradient(#f8f8f8,#e0e0e0);border:1px solid #8a8a8a;box-sizing:border-box;border-radius:1px"></div>
<div class="t" style="color:#1a1a1a;font-size:12px;top:887.5px;left:771.7px;transform:translateX(-50%);">......</div>
<div style="position:absolute;left:738px;top:911.1px;width:67px;height:23.199999999999932px;background:linear-gradient(#f8f8f8,#e0e0e0);border:1px solid #8a8a8a;box-sizing:border-box;border-radius:1px"></div>
<div class="t" style="color:#1a1a1a;font-size:12px;top:916.7px;left:771.7px;transform:translateX(-50%);">区间排行</div>
<div style="position:absolute;left:738px;top:941.2px;width:67px;height:23.199999999999932px;background:linear-gradient(#f8f8f8,#e0e0e0);border:1px solid #8a8a8a;box-sizing:border-box;border-radius:1px"></div>
<div class="t" style="color:#1a1a1a;font-size:12px;top:946.8px;left:771.7px;transform:translateX(-50%);">板块排行</div>
<div style="position:absolute;left:738px;top:971.1px;width:67px;height:23.299999999999955px;background:linear-gradient(#f8f8f8,#e0e0e0);border:1px solid #8a8a8a;box-sizing:border-box;border-radius:1px"></div>
<div class="t" style="color:#1a1a1a;font-size:12px;top:976.8px;left:771.7px;transform:translateX(-50%);">形态匹配</div>
<div style="position:absolute;left:738px;top:999.3px;width:67px;height:23.0px;background:linear-gradient(#f8f8f8,#e0e0e0);border:1px solid #8a8a8a;box-sizing:border-box;border-radius:1px"></div>
<div class="t" style="color:#1a1a1a;font-size:12px;top:1004.8px;left:771.7px;transform:translateX(-50%);">关闭</div>
<div class="t" id="f41" style="color:#111;font-size:12.5px;top:646.2px;left:825.2px;font-weight:bold;transform-origin:left center;">市场数据</div>
<div class="t" id="f42" style="color:#555555;font-size:12.5px;top:662.0px;left:825.2px;transform-origin:left center;"><span style="color:#555555;">陆股通净买额</span> <span style="color:#1a8ac0">0.00</span></div>
<div class="t" id="f43" style="color:#555555;font-size:12.5px;top:662.0px;left:962.9px;transform-origin:left center;"><span style="color:#555555;">融资净买额</span> <span style="color:#e83a3a">4139.90万</span></div>
<div style="position:absolute;left:825px;top:678px;width:274px;height:1px;background:#d8d8d8"></div>
<div class="t" id="f44" style="color:#111;font-size:12.5px;top:683.5px;left:825.2px;font-weight:bold;transform-origin:left center;">区间波动</div>
<div class="t" id="f45" style="color:#555555;font-size:12.5px;top:699.5px;left:825.2px;transform-origin:left center;"><span style="color:#555555">指数涨幅</span> <span style="color:#e83a3a">33.98%(偏离 41.23%)</span></div>
<div class="t" id="f46" style="color:#555555;font-size:12.5px;top:715.2px;left:825.2px;transform-origin:left center;"><span style="color:#555555">行业涨幅</span> <span style="color:#e83a3a">28.15%(偏离 47.06%)</span></div>
<div class="t" id="f47" style="color:#555555;font-size:12.5px;top:731.0px;left:825.2px;transform-origin:left center;"><span style="color:#555555;">日均成交量</span> <span style="color:#1a8ac0">28.33万</span></div>
<div class="t" id="f48" style="color:#555555;font-size:12.5px;top:731.0px;left:962.9px;transform-origin:left center;"><span style="color:#555555;">日均成交额</span> <span style="color:#1a8ac0">1.44亿</span></div>
<div class="t" id="f49" style="color:#555555;font-size:12.5px;top:746.9px;left:825.2px;transform-origin:left center;"><span style="color:#555555;">贝塔系数</span> <span style="color:#1a8ac0">0.70</span></div>
<div class="t" id="f50" style="color:#555555;font-size:12.5px;top:746.9px;left:962.9px;transform-origin:left center;"><span style="color:#555555;">夏普比率</span> <span style="color:#e83a3a">0.19</span></div>
<div class="t" id="f51" style="color:#555555;font-size:12.5px;top:763.8px;left:825.2px;transform-origin:left center;"><span style="color:#555555;">区间波动率</span> <span style="color:#1a8ac0">3.94%</span></div>
<div class="t" id="f52" style="color:#555555;font-size:12.5px;top:764.8px;left:962.9px;transform-origin:left center;">上升通道</div>
<svg style="position:absolute;left:1014px;top:762px" width="42" height="16"><polyline points="1,15 5,12 7,13 11,10 13,12 17,9 19,11 24,7 26,9 31,5 33,7 38,3 40,4 41,1" fill="none" stroke="#707070" stroke-width="1"/></svg>
<div style="position:absolute;left:825px;top:781px;width:274px;height:1px;background:#d8d8d8"></div>
<div class="t" id="f53" style="color:#111;font-size:12.5px;top:785.9px;left:825.2px;font-weight:bold;transform-origin:left center;">资金情况</div>
<div class="t" id="f54" style="color:#555555;font-size:12.5px;top:785.9px;left:882.7px;transform-origin:left center;"><span style="color:#111">主力净额</span> <span style="color:#3a9a4a">-4365.63万</span></div>
<div class="t" id="f55" style="color:#111;font-size:12.5px;top:803.8px;left:825.2px;transform-origin:left center;">超大单</div>
<div style="position:absolute;left:865.2px;top:805.2px;width:56.5px;height:9.7px;background:#e03030"></div>
<div class="t" id="f56" style="color:#555555;font-size:12.5px;top:820.0px;left:825.2px;transform-origin:left center;"><span style="color:#555555;">买入</span> <span style="color:#1a8ac0">153.56万手</span></div>
<div class="t" id="f57" style="color:#555555;font-size:12.5px;top:836.2px;left:825.2px;transform-origin:left center;"><span style="color:#555555;">卖出</span> <span style="color:#1a8ac0">113.89万手</span></div>
<div class="t" id="f58" style="color:#555555;font-size:12.5px;top:820.0px;left:962.9px;transform-origin:left center;"><span style="color:#555555;">净量</span> <span style="color:#1a8ac0">39.67万</span></div>
<div class="t" id="f59" style="color:#555555;font-size:12.5px;top:836.2px;left:962.9px;transform-origin:left center;"><span style="color:#555555;">净额</span> <span style="color:#1a8ac0">2.13亿</span></div>
<div class="t" id="f60" style="color:#111;font-size:12.5px;top:857.2px;left:825.2px;transform-origin:left center;">大单</div>
<div style="position:absolute;left:865.1px;top:858.7px;width:67.89999999999998px;height:9.7px;background:#22a040"></div>
<div class="t" id="f61" style="color:#555555;font-size:12.5px;top:873.5px;left:825.2px;transform-origin:left center;"><span style="color:#555555;">买入</span> <span style="color:#1a8ac0">243.56万手</span></div>
<div class="t" id="f62" style="color:#555555;font-size:12.5px;top:889.8px;left:825.2px;transform-origin:left center;"><span style="color:#555555;">卖出</span> <span style="color:#1a8ac0">293.78万手</span></div>
<div class="t" id="f63" style="color:#555555;font-size:12.5px;top:873.5px;left:962.9px;transform-origin:left center;"><span style="color:#555555;">净量</span> <span style="color:#1a8ac0">-50.23万</span></div>
<div class="t" id="f64" style="color:#555555;font-size:12.5px;top:889.8px;left:962.9px;transform-origin:left center;"><span style="color:#555555;">净额</span> <span style="color:#1a8ac0">-2.57亿</span></div>
<div class="t" id="f65" style="color:#111;font-size:12.5px;top:910.0px;left:825.2px;transform-origin:left center;">中单</div>
<div style="position:absolute;left:865.1px;top:911.4000000000001px;width:57.69999999999993px;height:9.7px;background:#22a040"></div>
<div class="t" id="f66" style="color:#555555;font-size:12.5px;top:926.2px;left:825.2px;transform-origin:left center;"><span style="color:#555555;">买入</span> <span style="color:#1a8ac0">730.85万手</span></div>
<div class="t" id="f67" style="color:#555555;font-size:12.5px;top:942.5px;left:825.2px;transform-origin:left center;"><span style="color:#555555;">卖出</span> <span style="color:#1a8ac0">770.26万手</span></div>
<div class="t" id="f68" style="color:#555555;font-size:12.5px;top:926.2px;left:962.9px;transform-origin:left center;"><span style="color:#555555;">净量</span> <span style="color:#1a8ac0">-39.41万</span></div>
<div class="t" id="f69" style="color:#555555;font-size:12.5px;top:942.5px;left:962.9px;transform-origin:left center;"><span style="color:#555555;">净额</span> <span style="color:#1a8ac0">-2.19亿</span></div>
<div class="t" id="f70" style="color:#111;font-size:12.5px;top:963.1px;left:825.2px;transform-origin:left center;">小单</div>
<div style="position:absolute;left:865.1px;top:964.6px;width:69.89999999999998px;height:9.7px;background:#e03030"></div>
<div class="t" id="f71" style="color:#555555;font-size:12.5px;top:979.4px;left:825.2px;transform-origin:left center;"><span style="color:#555555;">买入</span> <span style="color:#1a8ac0">1223.08万手</span></div>
<div class="t" id="f72" style="color:#555555;font-size:12.5px;top:995.6px;left:825.2px;transform-origin:left center;"><span style="color:#555555;">卖出</span> <span style="color:#1a8ac0">1173.11万手</span></div>
<div class="t" id="f73" style="color:#555555;font-size:12.5px;top:979.4px;left:962.9px;transform-origin:left center;"><span style="color:#555555;">净量</span> <span style="color:#1a8ac0">49.97万</span></div>
<div class="t" id="f74" style="color:#555555;font-size:12.5px;top:995.6px;left:962.9px;transform-origin:left center;"><span style="color:#555555;">净额</span> <span style="color:#1a8ac0">2.63亿</span></div>
<div style="position:absolute;left:825px;top:852.6px;width:274px;height:1px;background:#d8d8d8"></div>
<div style="position:absolute;left:825px;top:905.4px;width:274px;height:1px;background:#d8d8d8"></div>
<div style="position:absolute;left:825px;top:958.3px;width:274px;height:1px;background:#d8d8d8"></div>
<div class="t" id="f75" style="color:rgba(110,110,110,0.85);font-size:23px;top:823.5px;left:946px;transform-origin:left center;">www.cfchi.com</div>
<div style="position:absolute;left:130.6px;top:1048px;width:1px;height:2px;background:#4a4f5c"></div>
<div style="position:absolute;left:167.2px;top:1048px;width:1px;height:2px;background:#4a4f5c"></div>
<div style="position:absolute;left:205.2px;top:1048px;width:1px;height:2px;background:#4a4f5c"></div>
<div style="position:absolute;left:288.3px;top:1048px;width:1px;height:2px;background:#4a4f5c"></div>
<div style="position:absolute;left:333.6px;top:1048px;width:1px;height:2px;background:#4a4f5c"></div>
<div style="position:absolute;left:379px;top:1048px;width:1px;height:2px;background:#4a4f5c"></div>
<div style="position:absolute;left:468px;top:1048px;width:1px;height:2px;background:#4a4f5c"></div>
<div style="position:absolute;left:510px;top:1048px;width:1px;height:2px;background:#4a4f5c"></div>
<div style="position:absolute;left:555px;top:1048px;width:1px;height:2px;background:#4a4f5c"></div>
<div style="position:absolute;left:640px;top:1048px;width:1px;height:2px;background:#4a4f5c"></div>
<div style="position:absolute;left:690px;top:1048px;width:1px;height:2px;background:#4a4f5c"></div>
<div style="position:absolute;left:790px;top:1048px;width:1px;height:2px;background:#4a4f5c"></div>
<div style="position:absolute;left:840px;top:1048px;width:1px;height:2px;background:#4a4f5c"></div>
<div style="position:absolute;left:935px;top:1048px;width:1px;height:2px;background:#4a4f5c"></div>
<div style="position:absolute;left:980px;top:1048px;width:1px;height:2px;background:#4a4f5c"></div>
<div style="position:absolute;left:1010px;top:1048px;width:1px;height:2px;background:#4a4f5c"></div>
<div style="position:absolute;left:1100px;top:1048px;width:1px;height:2px;background:#4a4f5c"></div>
<div style="position:absolute;left:1145px;top:1048px;width:1px;height:2px;background:#4a4f5c"></div>
<div style="position:absolute;left:1185px;top:1048px;width:1px;height:2px;background:#4a4f5c"></div>
<div style="position:absolute;left:1270px;top:1048px;width:1px;height:2px;background:#4a4f5c"></div>
<div style="position:absolute;left:1310px;top:1048px;width:1px;height:2px;background:#4a4f5c"></div>
<div style="position:absolute;left:1345px;top:1048px;width:1px;height:2px;background:#4a4f5c"></div>
<div style="position:absolute;left:1410px;top:1048px;width:1px;height:2px;background:#4a4f5c"></div>
<div style="position:absolute;left:1450px;top:1048px;width:1px;height:2px;background:#4a4f5c"></div>
<div style="position:absolute;left:1490px;top:1048px;width:1px;height:2px;background:#4a4f5c"></div>
<div style="position:absolute;left:1550px;top:1048px;width:1px;height:2px;background:#4a4f5c"></div>
<div style="position:absolute;left:37px;top:1064px;width:1px;height:3px;background:#3a3f4c"></div>
<div style="position:absolute;left:79.6px;top:1064px;width:1px;height:3px;background:#3a3f4c"></div>
<div style="position:absolute;left:122px;top:1064px;width:1px;height:3px;background:#3a3f4c"></div>
<div style="position:absolute;left:152.6px;top:1064px;width:1px;height:3px;background:#3a3f4c"></div>
<div style="position:absolute;left:196.4px;top:1064px;width:1px;height:3px;background:#3a3f4c"></div>
<div style="position:absolute;left:240px;top:1064px;width:1px;height:3px;background:#3a3f4c"></div>
<div style="position:absolute;left:305.8px;top:1064px;width:1px;height:3px;background:#3a3f4c"></div>
<div style="position:absolute;left:364px;top:1064px;width:1px;height:3px;background:#3a3f4c"></div>
<div style="position:absolute;left:421.7px;top:1064px;width:1px;height:3px;background:#3a3f4c"></div>
<div style="position:absolute;left:510px;top:1064px;width:1px;height:3px;background:#3a3f4c"></div>
<div style="position:absolute;left:5px;top:1065px;width:25px;height:2px;background:repeating-linear-gradient(90deg,#8a8a8a 0 2px,transparent 2px 5px);opacity:0.6"></div>
<div style="position:absolute;left:45px;top:1065px;width:25px;height:2px;background:repeating-linear-gradient(90deg,#8a8a8a 0 2px,transparent 2px 5px);opacity:0.6"></div>
<div style="position:absolute;left:88px;top:1065px;width:27px;height:2px;background:repeating-linear-gradient(90deg,#8a8a8a 0 2px,transparent 2px 5px);opacity:0.6"></div>
<div style="position:absolute;left:128px;top:1065px;width:20px;height:2px;background:repeating-linear-gradient(90deg,#8a8a8a 0 2px,transparent 2px 5px);opacity:0.6"></div>
<div style="position:absolute;left:160px;top:1065px;width:30px;height:2px;background:repeating-linear-gradient(90deg,#8a8a8a 0 2px,transparent 2px 5px);opacity:0.6"></div>
<div style="position:absolute;left:205px;top:1065px;width:30px;height:2px;background:repeating-linear-gradient(90deg,#8a8a8a 0 2px,transparent 2px 5px);opacity:0.6"></div>
<div style="position:absolute;left:250px;top:1065px;width:50px;height:2px;background:repeating-linear-gradient(90deg,#8a8a8a 0 2px,transparent 2px 5px);opacity:0.6"></div>
<div style="position:absolute;left:315px;top:1065px;width:45px;height:2px;background:repeating-linear-gradient(90deg,#8a8a8a 0 2px,transparent 2px 5px);opacity:0.6"></div>
<div style="position:absolute;left:372px;top:1065px;width:46px;height:2px;background:repeating-linear-gradient(90deg,#8a8a8a 0 2px,transparent 2px 5px);opacity:0.6"></div>
<div style="position:absolute;left:430px;top:1065px;width:70px;height:2px;background:repeating-linear-gradient(90deg,#8a8a8a 0 2px,transparent 2px 5px);opacity:0.6"></div>
<script>(function(){var L=[["f0",22.5,"l"],["f1",29,"l"],["f2",29,"l"],["f3",36,"l"],["f4",36,"l"],["f5",36,"l"],["f6",23,"l"],["f7",24,"l"],["f8",22.7,"l"],["f9",39,"l"],["f10",36,"l"],["f11",24,"l"],["f12",24,"l"],["f13",18,"l"],["f14",24.4,"l"],["f15",35,"l"],["f16",33.2,"l"],["f17",165,"l"],["f18",71,"l"],["f19",44.5,"l"],["f20",54.5,"l"],["f21",29.5,"l"],["f22",65.4,"l"],["f23",109,"l"],["f24",65,"l"],["f25",24,"l"],["f26",71.2,"l"],["f27",29.2,"l"],["f28",36.3,"l"],["f29",60.6,"l"],["f30",50,"l"],["f31",43.8,"l"],["f32",132,"l"],["f33",66,"l"],["f34",72.7,"l"],["f35",53.7,"l"],["f36",53.7,"l"],["f37",47,"l"],["f38",53.7,"l"],["f39",53.7,"l"],["f40",47,"l"],["f41",47.6,"l"],["f42",98.7,"l"],["f43",120,"l"],["f44",47.6,"l"],["f45",170.5,"l"],["f46",170.5,"l"],["f47",106,"l"],["f48",99,"l"],["f49",75.7,"l"],["f50",75,"l"],["f51",97.8,"l"],["f52",47.3,"l"],["f53",47.6,"l"],["f54",114,"l"],["f55",35.6,"l"],["f56",90.15000000000002,"l"],["f57",90.15000000000002,"l"],["f58",71.00000000000001,"l"],["f59",64.05000000000001,"l"],["f60",24,"l"],["f61",90.15000000000002,"l"],["f62",90.15000000000002,"l"],["f63",75.20000000000002,"l"],["f64",68.25000000000001,"l"],["f65",24,"l"],["f66",90.15000000000002,"l"],["f67",90.15000000000002,"l"],["f68",75.20000000000002,"l"],["f69",68.25000000000001,"l"],["f70",24,"l"],["f71",97.10000000000002,"l"],["f72",97.10000000000002,"l"],["f73",71.00000000000001,"l"],["f74",64.05000000000001,"l"],["f75",157,"l"]];for(var i=0;i<L.length;i++){var e=document.getElementById(L[i][0]);if(!e)continue;var nw=e.getBoundingClientRect().width;if(nw>0){var k=L[i][1]/nw;e.style.transform=(L[i][2]=="c"?"translateX(-50%) ":"")+"scaleX("+k.toFixed(4)+")";}}})();</script>
</body></html>
